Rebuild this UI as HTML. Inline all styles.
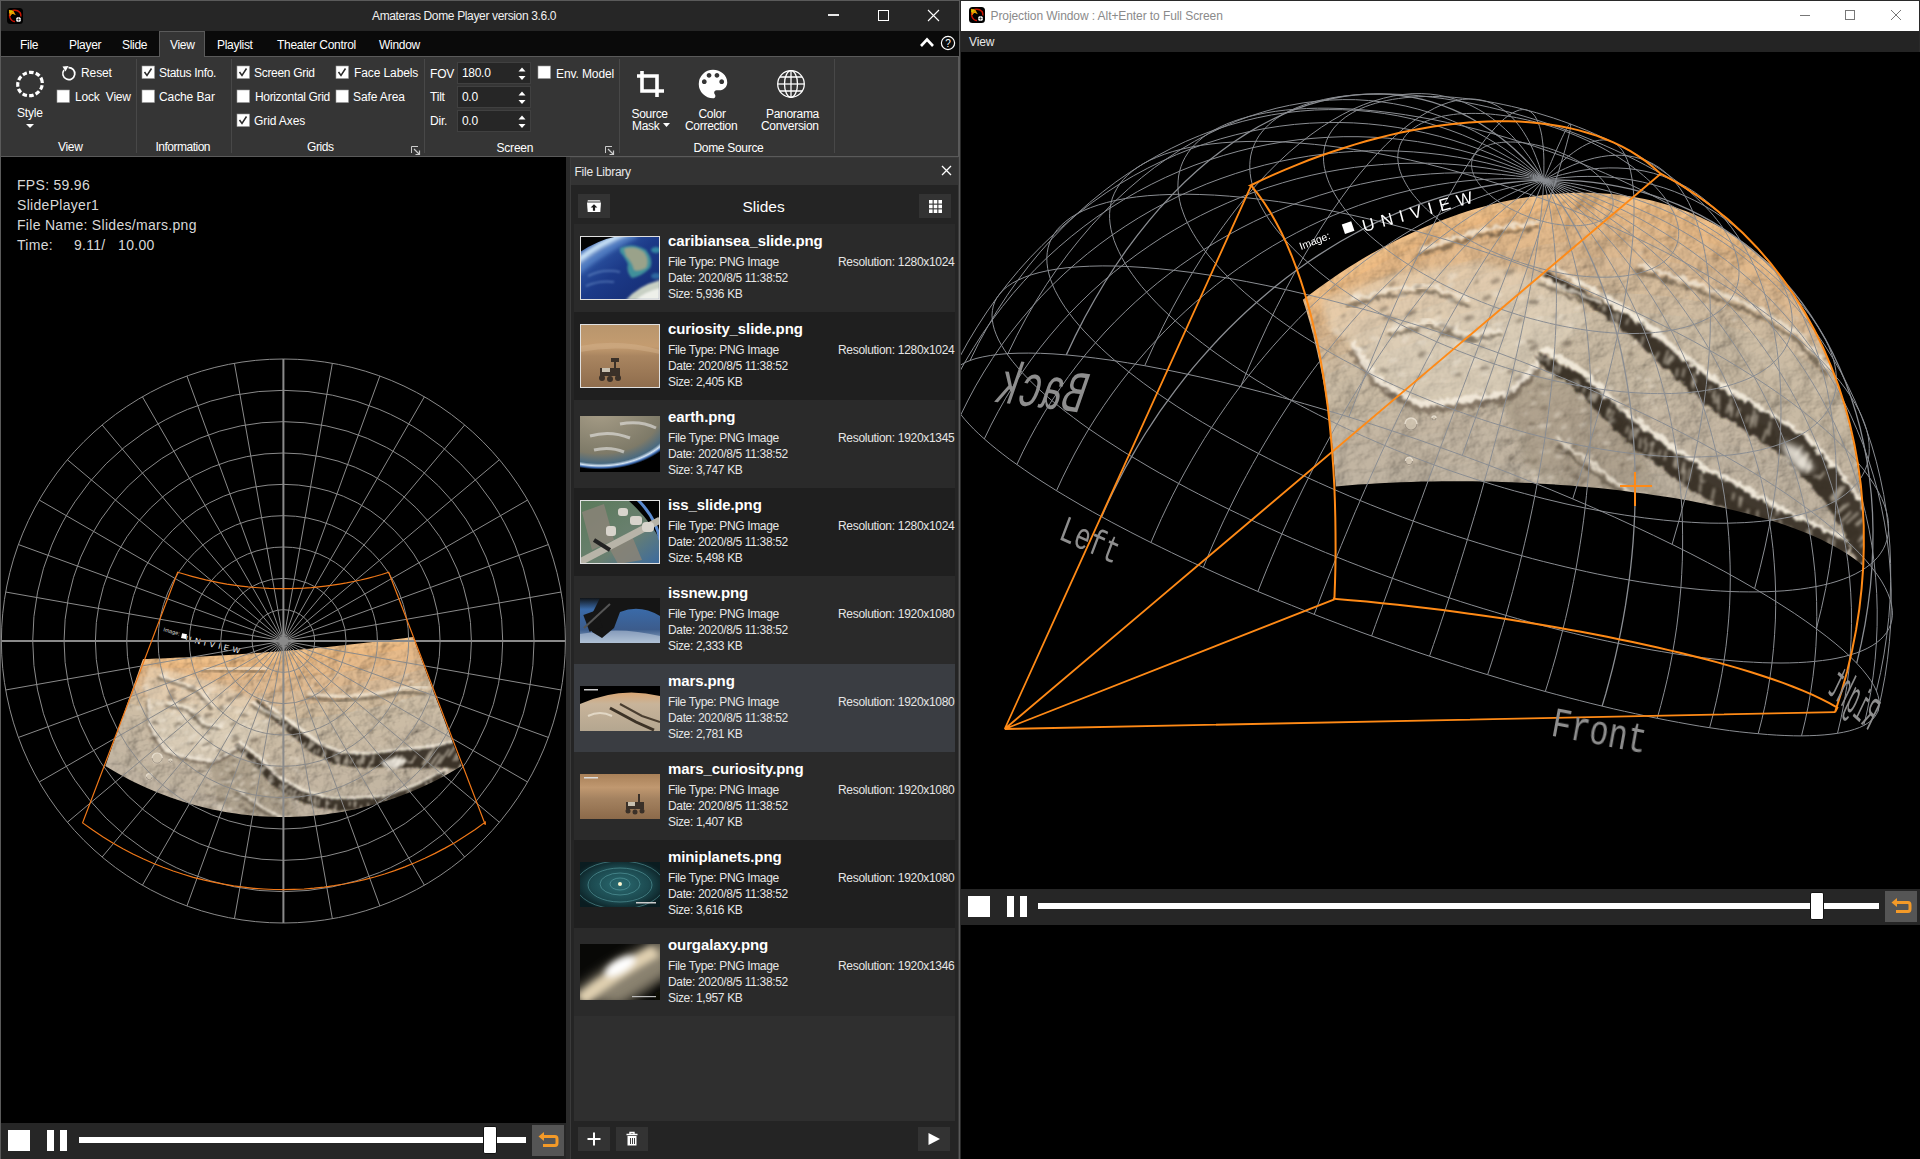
<!DOCTYPE html>
<html><head><meta charset="utf-8"><style>
html,body{margin:0;padding:0;width:1920px;height:1159px;overflow:hidden;background:#000;}
body{font-family:"Liberation Sans",sans-serif;color:#fff;position:relative;}
.a{position:absolute;}
.t{position:absolute;white-space:nowrap;line-height:1;}
svg{position:absolute;overflow:visible;}
</style></head><body>
<div class="a" style="left:0px;top:0px;width:960px;height:1159px;background:#5a5a5a;"></div>
<div class="a" style="left:1px;top:1px;width:958px;height:30px;background:#262626;"></div>
<div class="a" style="left:1px;top:31px;width:958px;height:25px;background:#0a0a0a;"></div>
<div class="a" style="left:1px;top:57px;width:957px;height:99px;background:#353535;"></div>
<div class="a" style="left:1px;top:157px;width:565px;height:966px;background:#000;"></div>
<div class="a" style="left:1px;top:1123px;width:565px;height:36px;background:#262626;"></div>
<div class="a" style="left:566px;top:157px;width:393px;height:1002px;background:#2b2b2b;"></div>
<svg style="left:7px;top:8px" width="16" height="16" viewBox="0 0 16 16">
<rect x="0" y="0" width="16" height="16" rx="3.5" fill="#000"/>
<path d="M5.5 2.6 Q10 1.6 13 4.5 Q14.2 6.5 13.8 8.5" stroke="#cc1400" stroke-width="1.5" fill="none"/>
<path d="M2.8 5.5 Q2 10 5 12.5 Q6.5 13.6 8 13.6" stroke="#c81000" stroke-width="1.5" fill="none"/>
<path d="M1.8 1.8 L6.5 3 L8.8 7.2 L5.5 5.8 L3 7.8 Z" fill="#e8a000"/><circle cx="4.3" cy="4.3" r="2" fill="#e0c000"/>
<path d="M3 8 Q3.5 5 6 4" stroke="#f08000" stroke-width="1.2" fill="none"/>
<circle cx="11.5" cy="11.5" r="2.5" fill="#f4f4f4"/><circle cx="11.5" cy="11.5" r="0.8" fill="#222"/>
<path d="M9.2 11.5 H13.8 M11.5 9.2 V13.8" stroke="#444" stroke-width="0.5"/></svg>
<div class="t" style="left:372px;top:9.8px;font-size:12px;color:#f0f0f0;font-weight:normal;letter-spacing:-0.35px;">Amateras Dome Player version 3.6.0</div>
<svg style="left:820px;top:0" width="139" height="31"><rect x="8" y="14" width="11" height="2" fill="#e8e8e8"/><rect x="58.5" y="10.5" width="10" height="10" fill="none" stroke="#fff" stroke-width="1"/><path d="M108 10 L119 21 M119 10 L108 21" stroke="#fff" stroke-width="1.1"/></svg>
<div class="a" style="left:159px;top:31px;width:46px;height:26px;background:#353535;border:1px solid #5a5a5a;border-bottom:none;box-sizing:border-box;"></div>
<div class="t" style="left:20px;top:38.8px;font-size:12px;color:#fff;font-weight:normal;letter-spacing:-0.3px;">File</div>
<div class="t" style="left:69px;top:38.8px;font-size:12px;color:#fff;font-weight:normal;letter-spacing:-0.3px;">Player</div>
<div class="t" style="left:122px;top:38.8px;font-size:12px;color:#fff;font-weight:normal;letter-spacing:-0.3px;">Slide</div>
<div class="t" style="left:170px;top:38.8px;font-size:12px;color:#fff;font-weight:normal;letter-spacing:-0.3px;">View</div>
<div class="t" style="left:217px;top:38.8px;font-size:12px;color:#fff;font-weight:normal;letter-spacing:-0.3px;">Playlist</div>
<div class="t" style="left:277px;top:38.8px;font-size:12px;color:#fff;font-weight:normal;letter-spacing:-0.3px;">Theater Control</div>
<div class="t" style="left:379px;top:38.8px;font-size:12px;color:#fff;font-weight:normal;letter-spacing:-0.3px;">Window</div>
<svg style="left:918px;top:34px" width="38" height="20"><path d="M3 12 L9 5.5 L15 12" stroke="#fff" stroke-width="2.6" fill="none" stroke-linejoin="miter"/><circle cx="30" cy="9" r="6.6" fill="none" stroke="#fff" stroke-width="1.2"/><text x="30" y="13" font-size="10" text-anchor="middle" fill="#fff" font-family="Liberation Sans">?</text></svg>
<div class="a" style="left:136px;top:59px;width:1px;height:94px;background:#484848;"></div>
<div class="a" style="left:231px;top:59px;width:1px;height:94px;background:#484848;"></div>
<div class="a" style="left:424px;top:59px;width:1px;height:94px;background:#484848;"></div>
<div class="a" style="left:619px;top:59px;width:1px;height:94px;background:#484848;"></div>
<div class="a" style="left:834px;top:59px;width:1px;height:94px;background:#484848;"></div>
<svg style="left:14px;top:68px" width="32" height="32"><ellipse cx="16" cy="16" rx="12.5" ry="11.5" transform="rotate(-25 16 16)" fill="none" stroke="#fff" stroke-width="3.2" stroke-dasharray="4.5 2.2"/></svg>
<div class="t" style="left:17px;top:106.8px;font-size:12px;color:#fff;font-weight:normal;letter-spacing:-0.2px;">Style</div>
<svg style="left:25px;top:123px" width="10" height="6"><path d="M1 1 L9 1 L5 5 Z" fill="#fff"/></svg>
<svg style="left:60px;top:65px" width="17" height="17"><path d="M4 5 A6 6 0 1 0 8.5 2.6" fill="none" stroke="#fff" stroke-width="1.7"/><path d="M2.5 1.5 L8.5 1 L5.5 6.5 Z" fill="#fff"/></svg>
<div class="t" style="left:81px;top:67.3px;font-size:12px;color:#fff;font-weight:normal;letter-spacing:-0.1px;">Reset</div>
<svg style="left:57px;top:90px" width="13" height="13"><rect x="0" y="0" width="12.5" height="12.5" fill="#fff" stroke="#999" stroke-width="0.6"/></svg>
<div class="t" style="left:75px;top:90.8px;font-size:12px;color:#fff;font-weight:normal;letter-spacing:-0.2px;">Lock&nbsp; View</div>
<div class="t" style="left:58px;top:140.8px;font-size:12px;color:#fff;font-weight:normal;letter-spacing:-0.3px;">View</div>
<svg style="left:142px;top:66px" width="13" height="13"><rect x="0" y="0" width="12.5" height="12.5" fill="#fff" stroke="#999" stroke-width="0.6"/><path d="M2.5 6 L5 9.5 L9.5 2.5" stroke="#2a2a2a" stroke-width="1.5" fill="none"/></svg>
<div class="t" style="left:159px;top:67.3px;font-size:12px;color:#fff;font-weight:normal;letter-spacing:-0.3px;">Status Info.</div>
<svg style="left:142px;top:90px" width="13" height="13"><rect x="0" y="0" width="12.5" height="12.5" fill="#fff" stroke="#999" stroke-width="0.6"/></svg>
<div class="t" style="left:159px;top:91.3px;font-size:12px;color:#fff;font-weight:normal;letter-spacing:-0.1px;">Cache Bar</div>
<div class="t" style="left:155.5px;top:140.8px;font-size:12px;color:#fff;font-weight:normal;letter-spacing:-0.5px;">Information</div>
<svg style="left:237px;top:66px" width="13" height="13"><rect x="0" y="0" width="12.5" height="12.5" fill="#fff" stroke="#999" stroke-width="0.6"/><path d="M2.5 6 L5 9.5 L9.5 2.5" stroke="#2a2a2a" stroke-width="1.5" fill="none"/></svg>
<div class="t" style="left:254px;top:67.3px;font-size:12px;color:#fff;font-weight:normal;letter-spacing:-0.3px;">Screen Grid</div>
<svg style="left:237px;top:90px" width="13" height="13"><rect x="0" y="0" width="12.5" height="12.5" fill="#fff" stroke="#999" stroke-width="0.6"/></svg>
<div class="t" style="left:255px;top:91.3px;font-size:12px;color:#fff;font-weight:normal;letter-spacing:-0.35px;">Horizontal Grid</div>
<svg style="left:237px;top:114px" width="13" height="13"><rect x="0" y="0" width="12.5" height="12.5" fill="#fff" stroke="#999" stroke-width="0.6"/><path d="M2.5 6 L5 9.5 L9.5 2.5" stroke="#2a2a2a" stroke-width="1.5" fill="none"/></svg>
<div class="t" style="left:254px;top:115.3px;font-size:12px;color:#fff;font-weight:normal;letter-spacing:-0.1px;">Grid Axes</div>
<svg style="left:336px;top:66px" width="13" height="13"><rect x="0" y="0" width="12.5" height="12.5" fill="#fff" stroke="#999" stroke-width="0.6"/><path d="M2.5 6 L5 9.5 L9.5 2.5" stroke="#2a2a2a" stroke-width="1.5" fill="none"/></svg>
<div class="t" style="left:354px;top:67.3px;font-size:12px;color:#fff;font-weight:normal;letter-spacing:-0.1px;">Face Labels</div>
<svg style="left:336px;top:90px" width="13" height="13"><rect x="0" y="0" width="12.5" height="12.5" fill="#fff" stroke="#999" stroke-width="0.6"/></svg>
<div class="t" style="left:353px;top:91.3px;font-size:12px;color:#fff;font-weight:normal;letter-spacing:-0.1px;">Safe Area</div>
<div class="t" style="left:307px;top:140.8px;font-size:12px;color:#fff;font-weight:normal;letter-spacing:-0.4px;">Grids</div>
<svg style="left:411px;top:146px" width="9" height="9"><path d="M0.5 7 V0.5 H7" stroke="#ccc" fill="none"/><path d="M3 3 L8.5 8.5 M8.5 4.5 V8.5 H4.5" stroke="#ccc" stroke-width="1.2" fill="none"/></svg>
<div class="t" style="left:430px;top:67.8px;font-size:12px;color:#fff;font-weight:normal;letter-spacing:-0.2px;">FOV</div>
<div class="t" style="left:430px;top:91.3px;font-size:12px;color:#fff;font-weight:normal;letter-spacing:-0.2px;">Tilt</div>
<div class="t" style="left:430px;top:115.3px;font-size:12px;color:#fff;font-weight:normal;letter-spacing:-0.2px;">Dir.</div>
<div class="a" style="left:457px;top:62px;width:74px;height:22px;background:#262626;border:1px solid #404040;box-sizing:border-box;"></div>
<div class="t" style="left:462px;top:67.3px;font-size:12px;color:#fff;font-weight:normal;letter-spacing:-0.3px;">180.0</div>
<svg style="left:517px;top:66px" width="10" height="16"><path d="M1.5 5.5 L5 1.5 L8.5 5.5 Z" fill="#fff"/><path d="M1.5 10 L5 14 L8.5 10 Z" fill="#fff"/></svg>
<div class="a" style="left:457px;top:86px;width:74px;height:22px;background:#262626;border:1px solid #404040;box-sizing:border-box;"></div>
<div class="t" style="left:462px;top:91.3px;font-size:12px;color:#fff;font-weight:normal;letter-spacing:-0.3px;">0.0</div>
<svg style="left:517px;top:90px" width="10" height="16"><path d="M1.5 5.5 L5 1.5 L8.5 5.5 Z" fill="#fff"/><path d="M1.5 10 L5 14 L8.5 10 Z" fill="#fff"/></svg>
<div class="a" style="left:457px;top:110px;width:74px;height:22px;background:#262626;border:1px solid #404040;box-sizing:border-box;"></div>
<div class="t" style="left:462px;top:115.3px;font-size:12px;color:#fff;font-weight:normal;letter-spacing:-0.3px;">0.0</div>
<svg style="left:517px;top:114px" width="10" height="16"><path d="M1.5 5.5 L5 1.5 L8.5 5.5 Z" fill="#fff"/><path d="M1.5 10 L5 14 L8.5 10 Z" fill="#fff"/></svg>
<svg style="left:538px;top:66px" width="13" height="13"><rect x="0" y="0" width="12.5" height="12.5" fill="#fff" stroke="#999" stroke-width="0.6"/></svg>
<div class="t" style="left:556px;top:67.8px;font-size:12px;color:#fff;font-weight:normal;letter-spacing:-0.1px;">Env. Model</div>
<div class="t" style="left:496.5px;top:141.8px;font-size:12px;color:#fff;font-weight:normal;letter-spacing:-0.2px;">Screen</div>
<svg style="left:605px;top:146px" width="9" height="9"><path d="M0.5 7 V0.5 H7" stroke="#ccc" fill="none"/><path d="M3 3 L8.5 8.5 M8.5 4.5 V8.5 H4.5" stroke="#ccc" stroke-width="1.2" fill="none"/></svg>
<svg style="left:636px;top:70px" width="29" height="29"><path d="M6 1 V21 H28 M1 6 H21 V27" stroke="#fff" stroke-width="3.6" fill="none"/></svg>
<div class="t" style="left:631.5px;top:107.8px;font-size:12px;color:#fff;font-weight:normal;letter-spacing:-0.3px;">Source</div>
<div class="t" style="left:632px;top:119.8px;font-size:12px;color:#fff;font-weight:normal;letter-spacing:-0.3px;">Mask</div>
<svg style="left:663px;top:123px" width="8" height="5"><path d="M0 0 L7 0 L3.5 4 Z" fill="#fff"/></svg>
<svg style="left:694px;top:65px" width="38" height="38" viewBox="0 0 24 24"><path fill="#fff" d="M12 3a9 9 0 0 0 0 18c.83 0 1.5-.67 1.5-1.5 0-.39-.15-.74-.39-1.01-.23-.26-.38-.61-.38-.99 0-.83.67-1.5 1.5-1.5H16c2.76 0 5-2.24 5-5 0-4.42-4.03-8-9-8zm-5.5 9c-.83 0-1.5-.67-1.5-1.5S5.67 9 6.5 9 8 9.67 8 10.5 7.33 12 6.5 12zm3-4C8.67 8 8 7.33 8 6.5S8.67 5 9.5 5s1.5.67 1.5 1.5S10.33 8 9.5 8zm5 0c-.83 0-1.5-.67-1.5-1.5S13.67 5 14.5 5s1.5.67 1.5 1.5S15.33 8 14.5 8zm3 4c-.83 0-1.5-.67-1.5-1.5S16.67 9 17.5 9s1.5.67 1.5 1.5-.67 1.5-1.5 1.5z"/></svg>
<div class="t" style="left:698.5px;top:107.8px;font-size:12px;color:#fff;font-weight:normal;letter-spacing:-0.3px;">Color</div>
<div class="t" style="left:685px;top:119.8px;font-size:12px;color:#fff;font-weight:normal;letter-spacing:-0.3px;">Correction</div>
<svg style="left:776px;top:69px" width="30" height="30"><g fill="none" stroke="#fff" stroke-width="1.3"><circle cx="15" cy="15" r="13.3"/><ellipse cx="15" cy="15" rx="6.5" ry="13.3"/><line x1="15" y1="1.7" x2="15" y2="28.3"/><line x1="1.7" y1="15" x2="28.3" y2="15"/><path d="M4 8 H26 M4 22 H26"/></g></svg>
<div class="t" style="left:766px;top:107.8px;font-size:12px;color:#fff;font-weight:normal;letter-spacing:-0.3px;">Panorama</div>
<div class="t" style="left:761px;top:119.8px;font-size:12px;color:#fff;font-weight:normal;letter-spacing:-0.3px;">Conversion</div>
<div class="t" style="left:693.4px;top:141.8px;font-size:12px;color:#fff;font-weight:normal;letter-spacing:-0.3px;">Dome Source</div>
<div class="t" style="left:17px;top:178.1px;font-size:14px;color:#d8d8d8;font-weight:normal;letter-spacing:0.3px;">FPS: 59.96</div>
<div class="t" style="left:17px;top:198.1px;font-size:14px;color:#d8d8d8;font-weight:normal;letter-spacing:0.3px;">SlidePlayer1</div>
<div class="t" style="left:17px;top:218.1px;font-size:14px;color:#d8d8d8;font-weight:normal;letter-spacing:0.3px;">File Name: Slides/mars.png</div>
<div class="t" style="left:17px;top:238.1px;font-size:14px;color:#d8d8d8;font-weight:normal;letter-spacing:0.3px;">Time:&nbsp;&nbsp;&nbsp;&nbsp; 9.11/&nbsp;&nbsp; 10.00</div>
<svg style="left:0;top:0" width="566" height="1123" viewBox="0 0 566 1123">
<defs>
<clipPath id="lclip"><rect x="1" y="157" width="565" height="966"/></clipPath>
<clipPath id="mclip"><path d="M143.0,659.0 L147.5,658.9 L152.0,658.7 L156.5,658.5 L161.0,658.4 L165.5,658.2 L170.0,658.0 L174.5,657.8 L179.0,657.6 L183.5,657.4 L188.0,657.2 L192.5,657.0 L197.0,656.8 L201.5,656.5 L206.0,656.3 L210.5,656.1 L215.0,655.8 L219.5,655.5 L224.0,655.3 L228.5,655.0 L233.0,654.7 L237.5,654.4 L242.0,654.1 L246.5,653.8 L251.0,653.5 L255.5,653.1 L260.0,652.8 L264.5,652.5 L269.0,652.1 L273.5,651.8 L278.0,651.4 L282.5,651.0 L287.0,650.7 L291.5,650.3 L296.0,649.9 L300.5,649.5 L305.0,649.1 L309.5,648.7 L314.0,648.2 L318.5,647.8 L323.0,647.4 L327.5,646.9 L332.0,646.5 L336.5,646.0 L341.0,645.5 L345.5,645.1 L350.0,644.6 L354.5,644.1 L359.0,643.6 L363.5,643.1 L368.0,642.6 L372.5,642.0 L377.0,641.5 L381.5,641.0 L386.0,640.4 L390.5,639.9 L395.0,639.3 L399.5,638.8 L404.0,638.2 L408.5,637.6 L413.0,637.0 L413.0,637.0 L414.6,641.3 L416.2,645.6 L417.9,649.9 L419.5,654.2 L421.1,658.5 L422.7,662.8 L424.3,667.1 L425.9,671.4 L427.5,675.7 L429.2,680.0 L430.8,684.3 L432.4,688.6 L434.0,692.9 L435.6,697.2 L437.2,701.5 L438.9,705.8 L440.5,710.1 L442.1,714.4 L443.7,718.6 L445.3,722.9 L446.9,727.2 L448.6,731.5 L450.2,735.8 L451.8,740.1 L453.4,744.4 L455.0,748.7 L456.7,753.0 L458.3,757.3 L459.9,761.6 L461.5,765.9 L461.5,765.9 L455.6,769.5 L449.6,773.0 L443.7,776.3 L437.8,779.4 L431.8,782.4 L425.9,785.3 L419.9,788.0 L414.0,790.6 L408.1,793.0 L402.1,795.3 L396.2,797.5 L390.3,799.6 L384.3,801.5 L378.4,803.3 L372.4,805.0 L366.5,806.6 L360.6,808.0 L354.6,809.4 L348.7,810.6 L342.8,811.7 L336.8,812.7 L330.9,813.6 L325.0,814.4 L319.0,815.1 L313.1,815.7 L307.1,816.2 L301.2,816.5 L295.3,816.8 L289.3,816.9 L283.4,817.0 L277.5,816.9 L271.5,816.8 L265.6,816.5 L259.7,816.2 L253.7,815.7 L247.8,815.1 L241.8,814.4 L235.9,813.6 L230.0,812.7 L224.0,811.7 L218.1,810.6 L212.2,809.4 L206.2,808.0 L200.3,806.6 L194.3,805.0 L188.4,803.3 L182.5,801.5 L176.5,799.6 L170.6,797.5 L164.7,795.3 L158.7,793.0 L152.8,790.6 L146.9,788.0 L140.9,785.3 L135.0,782.4 L129.0,779.4 L123.1,776.3 L117.2,773.0 L111.2,769.5 L105.3,765.9 L105.3,765.9 L106.6,762.4 L107.8,758.8 L109.1,755.2 L110.3,751.7 L111.6,748.1 L112.8,744.5 L114.1,741.0 L115.4,737.4 L116.6,733.8 L117.9,730.3 L119.1,726.7 L120.4,723.1 L121.6,719.6 L122.9,716.0 L124.2,712.5 L125.4,708.9 L126.7,705.3 L127.9,701.8 L129.2,698.2 L130.4,694.6 L131.7,691.1 L132.9,687.5 L134.2,683.9 L135.5,680.4 L136.7,676.8 L138.0,673.3 L139.2,669.7 L140.5,666.1 L141.7,662.6 L143.0,659.0Z"/></clipPath>
<filter id="lblur1"><feGaussianBlur stdDeviation="0.9"/></filter>
<filter id="lblur2"><feGaussianBlur stdDeviation="1.6"/></filter>
<filter id="lblur5"><feGaussianBlur stdDeviation="3.5"/></filter>
<filter id="lrelief" x="0%" y="0%" width="100%" height="100%">
<feTurbulence type="fractalNoise" baseFrequency="0.045 0.07" numOctaves="4" seed="4" result="t"/>
<feDiffuseLighting in="t" surfaceScale="5" diffuseConstant="1.15" lighting-color="#ffffff"><feDistantLight azimuth="200" elevation="48"/></feDiffuseLighting>
</filter>
<filter id="lrough" x="-10%" y="-10%" width="120%" height="120%">
<feTurbulence type="fractalNoise" baseFrequency="0.3" numOctaves="2" seed="9" result="n"/>
<feDisplacementMap in="SourceGraphic" in2="n" scale="3" xChannelSelector="R" yChannelSelector="G" result="d"/>
<feGaussianBlur in="d" stdDeviation="0.9"/>
</filter>
</defs>
<g clip-path="url(#lclip)">
<g clip-path="url(#mclip)">
<path d="M143.0,659.0 L156.5,658.5 L153.7,668.4 L139.9,667.9Z" fill="#ecba83" stroke="#ecba83" stroke-width="1.5"/><path d="M139.9,667.9 L153.7,668.4 L150.9,678.2 L136.7,676.8Z" fill="#e6ba8a" stroke="#e6ba8a" stroke-width="1.5"/><path d="M136.7,676.8 L150.9,678.2 L148.2,688.0 L133.6,685.7Z" fill="#dfba91" stroke="#dfba91" stroke-width="1.5"/><path d="M133.6,685.7 L148.2,688.0 L145.4,697.8 L130.4,694.6Z" fill="#d9bb98" stroke="#d9bb98" stroke-width="1.5"/><path d="M130.4,694.6 L145.4,697.8 L142.6,707.6 L127.3,703.5Z" fill="#d3bd9f" stroke="#d3bd9f" stroke-width="1.5"/><path d="M127.3,703.5 L142.6,707.6 L139.8,717.4 L124.2,712.5Z" fill="#cdbda5" stroke="#cdbda5" stroke-width="1.5"/><path d="M124.2,712.5 L139.8,717.4 L137.0,727.2 L121.0,721.4Z" fill="#cbbca5" stroke="#cbbca5" stroke-width="1.5"/><path d="M121.0,721.4 L137.0,727.2 L134.2,737.0 L117.9,730.3Z" fill="#c9baa4" stroke="#c9baa4" stroke-width="1.5"/><path d="M117.9,730.3 L134.2,737.0 L131.5,746.9 L114.7,739.2Z" fill="#c7b9a4" stroke="#c7b9a4" stroke-width="1.5"/><path d="M114.7,739.2 L131.5,746.9 L128.7,756.7 L111.6,748.1Z" fill="#c5b7a3" stroke="#c5b7a3" stroke-width="1.5"/><path d="M111.6,748.1 L128.7,756.7 L125.9,766.5 L108.4,757.0Z" fill="#c3b6a2" stroke="#c3b6a2" stroke-width="1.5"/><path d="M108.4,757.0 L125.9,766.5 L123.1,776.3 L105.3,765.9Z" fill="#c1b4a2" stroke="#c1b4a2" stroke-width="1.5"/><path d="M156.5,658.5 L170.0,658.0 L167.6,668.6 L153.7,668.4Z" fill="#ecba83" stroke="#ecba83" stroke-width="1.5"/><path d="M153.7,668.4 L167.6,668.6 L165.2,679.2 L150.9,678.2Z" fill="#e6ba8a" stroke="#e6ba8a" stroke-width="1.5"/><path d="M150.9,678.2 L165.2,679.2 L162.7,689.8 L148.2,688.0Z" fill="#dfba91" stroke="#dfba91" stroke-width="1.5"/><path d="M148.2,688.0 L162.7,689.8 L160.3,700.4 L145.4,697.8Z" fill="#d9bb98" stroke="#d9bb98" stroke-width="1.5"/><path d="M145.4,697.8 L160.3,700.4 L157.9,711.1 L142.6,707.6Z" fill="#d3bd9f" stroke="#d3bd9f" stroke-width="1.5"/><path d="M142.6,707.6 L157.9,711.1 L155.5,721.7 L139.8,717.4Z" fill="#cdbda5" stroke="#cdbda5" stroke-width="1.5"/><path d="M139.8,717.4 L155.5,721.7 L153.0,732.3 L137.0,727.2Z" fill="#cbbca5" stroke="#cbbca5" stroke-width="1.5"/><path d="M137.0,727.2 L153.0,732.3 L150.6,742.9 L134.2,737.0Z" fill="#c9baa4" stroke="#c9baa4" stroke-width="1.5"/><path d="M134.2,737.0 L150.6,742.9 L148.2,753.5 L131.5,746.9Z" fill="#c7b9a4" stroke="#c7b9a4" stroke-width="1.5"/><path d="M131.5,746.9 L148.2,753.5 L145.8,764.1 L128.7,756.7Z" fill="#c5b7a3" stroke="#c5b7a3" stroke-width="1.5"/><path d="M128.7,756.7 L145.8,764.1 L143.3,774.7 L125.9,766.5Z" fill="#c3b6a2" stroke="#c3b6a2" stroke-width="1.5"/><path d="M125.9,766.5 L143.3,774.7 L140.9,785.3 L123.1,776.3Z" fill="#c1b4a2" stroke="#c1b4a2" stroke-width="1.5"/><path d="M170.0,658.0 L183.5,657.4 L181.4,668.7 L167.6,668.6Z" fill="#ecba83" stroke="#ecba83" stroke-width="1.5"/><path d="M167.6,668.6 L181.4,668.7 L179.4,680.0 L165.2,679.2Z" fill="#e6ba8a" stroke="#e6ba8a" stroke-width="1.5"/><path d="M165.2,679.2 L179.4,680.0 L177.3,691.3 L162.7,689.8Z" fill="#dfba91" stroke="#dfba91" stroke-width="1.5"/><path d="M162.7,689.8 L177.3,691.3 L175.2,702.6 L160.3,700.4Z" fill="#d9bb98" stroke="#d9bb98" stroke-width="1.5"/><path d="M160.3,700.4 L175.2,702.6 L173.2,713.9 L157.9,711.1Z" fill="#d3bd9f" stroke="#d3bd9f" stroke-width="1.5"/><path d="M157.9,711.1 L173.2,713.9 L171.1,725.2 L155.5,721.7Z" fill="#cdbda5" stroke="#cdbda5" stroke-width="1.5"/><path d="M155.5,721.7 L171.1,725.2 L169.1,736.5 L153.0,732.3Z" fill="#cbbca5" stroke="#cbbca5" stroke-width="1.5"/><path d="M153.0,732.3 L169.1,736.5 L167.0,747.8 L150.6,742.9Z" fill="#c9baa4" stroke="#c9baa4" stroke-width="1.5"/><path d="M150.6,742.9 L167.0,747.8 L164.9,759.1 L148.2,753.5Z" fill="#c7b9a4" stroke="#c7b9a4" stroke-width="1.5"/><path d="M148.2,753.5 L164.9,759.1 L162.9,770.4 L145.8,764.1Z" fill="#c5b7a3" stroke="#c5b7a3" stroke-width="1.5"/><path d="M145.8,764.1 L162.9,770.4 L160.8,781.7 L143.3,774.7Z" fill="#c3b6a2" stroke="#c3b6a2" stroke-width="1.5"/><path d="M143.3,774.7 L160.8,781.7 L158.7,793.0 L140.9,785.3Z" fill="#c1b4a2" stroke="#c1b4a2" stroke-width="1.5"/><path d="M183.5,657.4 L197.0,656.8 L195.3,668.7 L181.4,668.7Z" fill="#ecba83" stroke="#ecba83" stroke-width="1.5"/><path d="M181.4,668.7 L195.3,668.7 L193.6,680.6 L179.4,680.0Z" fill="#e6ba8a" stroke="#e6ba8a" stroke-width="1.5"/><path d="M179.4,680.0 L193.6,680.6 L191.9,692.5 L177.3,691.3Z" fill="#dfba91" stroke="#dfba91" stroke-width="1.5"/><path d="M177.3,691.3 L191.9,692.5 L190.2,704.4 L175.2,702.6Z" fill="#d9bb98" stroke="#d9bb98" stroke-width="1.5"/><path d="M175.2,702.6 L190.2,704.4 L188.5,716.3 L173.2,713.9Z" fill="#d3bd9f" stroke="#d3bd9f" stroke-width="1.5"/><path d="M173.2,713.9 L188.5,716.3 L186.8,728.2 L171.1,725.2Z" fill="#cdbda5" stroke="#cdbda5" stroke-width="1.5"/><path d="M171.1,725.2 L186.8,728.2 L185.1,740.1 L169.1,736.5Z" fill="#cbbca5" stroke="#cbbca5" stroke-width="1.5"/><path d="M169.1,736.5 L185.1,740.1 L183.4,752.0 L167.0,747.8Z" fill="#c9baa4" stroke="#c9baa4" stroke-width="1.5"/><path d="M167.0,747.8 L183.4,752.0 L181.7,763.9 L164.9,759.1Z" fill="#c7b9a4" stroke="#c7b9a4" stroke-width="1.5"/><path d="M164.9,759.1 L181.7,763.9 L179.9,775.8 L162.9,770.4Z" fill="#c5b7a3" stroke="#c5b7a3" stroke-width="1.5"/><path d="M162.9,770.4 L179.9,775.8 L178.2,787.7 L160.8,781.7Z" fill="#c3b6a2" stroke="#c3b6a2" stroke-width="1.5"/><path d="M160.8,781.7 L178.2,787.7 L176.5,799.6 L158.7,793.0Z" fill="#c1b4a2" stroke="#c1b4a2" stroke-width="1.5"/><path d="M197.0,656.8 L210.5,656.1 L209.2,668.5 L195.3,668.7Z" fill="#ecba83" stroke="#ecba83" stroke-width="1.5"/><path d="M195.3,668.7 L209.2,668.5 L207.8,680.9 L193.6,680.6Z" fill="#e6ba8a" stroke="#e6ba8a" stroke-width="1.5"/><path d="M193.6,680.6 L207.8,680.9 L206.5,693.3 L191.9,692.5Z" fill="#dfba91" stroke="#dfba91" stroke-width="1.5"/><path d="M191.9,692.5 L206.5,693.3 L205.1,705.7 L190.2,704.4Z" fill="#d9bb98" stroke="#d9bb98" stroke-width="1.5"/><path d="M190.2,704.4 L205.1,705.7 L203.8,718.1 L188.5,716.3Z" fill="#d3bd9f" stroke="#d3bd9f" stroke-width="1.5"/><path d="M188.5,716.3 L203.8,718.1 L202.4,730.5 L186.8,728.2Z" fill="#cdbda5" stroke="#cdbda5" stroke-width="1.5"/><path d="M186.8,728.2 L202.4,730.5 L201.1,742.9 L185.1,740.1Z" fill="#cbbca5" stroke="#cbbca5" stroke-width="1.5"/><path d="M185.1,740.1 L201.1,742.9 L199.7,755.3 L183.4,752.0Z" fill="#c9baa4" stroke="#c9baa4" stroke-width="1.5"/><path d="M183.4,752.0 L199.7,755.3 L198.4,767.8 L181.7,763.9Z" fill="#c7b9a4" stroke="#c7b9a4" stroke-width="1.5"/><path d="M181.7,763.9 L198.4,767.8 L197.0,780.2 L179.9,775.8Z" fill="#c5b7a3" stroke="#c5b7a3" stroke-width="1.5"/><path d="M179.9,775.8 L197.0,780.2 L195.7,792.6 L178.2,787.7Z" fill="#c3b6a2" stroke="#c3b6a2" stroke-width="1.5"/><path d="M178.2,787.7 L195.7,792.6 L194.3,805.0 L176.5,799.6Z" fill="#c1b4a2" stroke="#c1b4a2" stroke-width="1.5"/><path d="M210.5,656.1 L224.0,655.3 L223.0,668.1 L209.2,668.5Z" fill="#ecba83" stroke="#ecba83" stroke-width="1.5"/><path d="M209.2,668.5 L223.0,668.1 L222.0,680.9 L207.8,680.9Z" fill="#e6ba8a" stroke="#e6ba8a" stroke-width="1.5"/><path d="M207.8,680.9 L222.0,680.9 L221.0,693.8 L206.5,693.3Z" fill="#dfba91" stroke="#dfba91" stroke-width="1.5"/><path d="M206.5,693.3 L221.0,693.8 L220.1,706.6 L205.1,705.7Z" fill="#d9bb98" stroke="#d9bb98" stroke-width="1.5"/><path d="M205.1,705.7 L220.1,706.6 L219.1,719.5 L203.8,718.1Z" fill="#d3bd9f" stroke="#d3bd9f" stroke-width="1.5"/><path d="M203.8,718.1 L219.1,719.5 L218.1,732.3 L202.4,730.5Z" fill="#cdbda5" stroke="#cdbda5" stroke-width="1.5"/><path d="M202.4,730.5 L218.1,732.3 L217.1,745.2 L201.1,742.9Z" fill="#cbbca5" stroke="#cbbca5" stroke-width="1.5"/><path d="M201.1,742.9 L217.1,745.2 L216.1,758.0 L199.7,755.3Z" fill="#c9baa4" stroke="#c9baa4" stroke-width="1.5"/><path d="M199.7,755.3 L216.1,758.0 L215.1,770.8 L198.4,767.8Z" fill="#c7b9a4" stroke="#c7b9a4" stroke-width="1.5"/><path d="M198.4,767.8 L215.1,770.8 L214.1,783.7 L197.0,780.2Z" fill="#c5b7a3" stroke="#c5b7a3" stroke-width="1.5"/><path d="M197.0,780.2 L214.1,783.7 L213.1,796.5 L195.7,792.6Z" fill="#c3b6a2" stroke="#c3b6a2" stroke-width="1.5"/><path d="M195.7,792.6 L213.1,796.5 L212.2,809.4 L194.3,805.0Z" fill="#c1b4a2" stroke="#c1b4a2" stroke-width="1.5"/><path d="M224.0,655.3 L237.5,654.4 L236.9,667.6 L223.0,668.1Z" fill="#ecba83" stroke="#ecba83" stroke-width="1.5"/><path d="M223.0,668.1 L236.9,667.6 L236.2,680.8 L222.0,680.9Z" fill="#e6ba8a" stroke="#e6ba8a" stroke-width="1.5"/><path d="M222.0,680.9 L236.2,680.8 L235.6,694.0 L221.0,693.8Z" fill="#dfba91" stroke="#dfba91" stroke-width="1.5"/><path d="M221.0,693.8 L235.6,694.0 L235.0,707.2 L220.1,706.6Z" fill="#d9bb98" stroke="#d9bb98" stroke-width="1.5"/><path d="M220.1,706.6 L235.0,707.2 L234.4,720.4 L219.1,719.5Z" fill="#d3bd9f" stroke="#d3bd9f" stroke-width="1.5"/><path d="M219.1,719.5 L234.4,720.4 L233.7,733.6 L218.1,732.3Z" fill="#cdbda5" stroke="#cdbda5" stroke-width="1.5"/><path d="M218.1,732.3 L233.7,733.6 L233.1,746.8 L217.1,745.2Z" fill="#cbbca5" stroke="#cbbca5" stroke-width="1.5"/><path d="M217.1,745.2 L233.1,746.8 L232.5,760.0 L216.1,758.0Z" fill="#c9baa4" stroke="#c9baa4" stroke-width="1.5"/><path d="M216.1,758.0 L232.5,760.0 L231.9,773.1 L215.1,770.8Z" fill="#c7b9a4" stroke="#c7b9a4" stroke-width="1.5"/><path d="M215.1,770.8 L231.9,773.1 L231.2,786.3 L214.1,783.7Z" fill="#c5b7a3" stroke="#c5b7a3" stroke-width="1.5"/><path d="M214.1,783.7 L231.2,786.3 L230.6,799.5 L213.1,796.5Z" fill="#c3b6a2" stroke="#c3b6a2" stroke-width="1.5"/><path d="M213.1,796.5 L230.6,799.5 L230.0,812.7 L212.2,809.4Z" fill="#c1b4a2" stroke="#c1b4a2" stroke-width="1.5"/><path d="M237.5,654.4 L251.0,653.5 L250.7,666.9 L236.9,667.6Z" fill="#ecba83" stroke="#ecba83" stroke-width="1.5"/><path d="M236.9,667.6 L250.7,666.9 L250.5,680.4 L236.2,680.8Z" fill="#e6ba8a" stroke="#e6ba8a" stroke-width="1.5"/><path d="M236.2,680.8 L250.5,680.4 L250.2,693.9 L235.6,694.0Z" fill="#dfba91" stroke="#dfba91" stroke-width="1.5"/><path d="M235.6,694.0 L250.2,693.9 L249.9,707.4 L235.0,707.2Z" fill="#d9bb98" stroke="#d9bb98" stroke-width="1.5"/><path d="M235.0,707.2 L249.9,707.4 L249.7,720.8 L234.4,720.4Z" fill="#d3bd9f" stroke="#d3bd9f" stroke-width="1.5"/><path d="M234.4,720.4 L249.7,720.8 L249.4,734.3 L233.7,733.6Z" fill="#cdbda5" stroke="#cdbda5" stroke-width="1.5"/><path d="M233.7,733.6 L249.4,734.3 L249.1,747.8 L233.1,746.8Z" fill="#cbbca5" stroke="#cbbca5" stroke-width="1.5"/><path d="M233.1,746.8 L249.1,747.8 L248.9,761.2 L232.5,760.0Z" fill="#c9baa4" stroke="#c9baa4" stroke-width="1.5"/><path d="M232.5,760.0 L248.9,761.2 L248.6,774.7 L231.9,773.1Z" fill="#c7b9a4" stroke="#c7b9a4" stroke-width="1.5"/><path d="M231.9,773.1 L248.6,774.7 L248.3,788.2 L231.2,786.3Z" fill="#c5b7a3" stroke="#c5b7a3" stroke-width="1.5"/><path d="M231.2,786.3 L248.3,788.2 L248.0,801.6 L230.6,799.5Z" fill="#c3b6a2" stroke="#c3b6a2" stroke-width="1.5"/><path d="M230.6,799.5 L248.0,801.6 L247.8,815.1 L230.0,812.7Z" fill="#c1b4a2" stroke="#c1b4a2" stroke-width="1.5"/><path d="M251.0,653.5 L264.5,652.5 L264.6,666.1 L250.7,666.9Z" fill="#ecba83" stroke="#ecba83" stroke-width="1.5"/><path d="M250.7,666.9 L264.6,666.1 L264.7,679.8 L250.5,680.4Z" fill="#e6ba8a" stroke="#e6ba8a" stroke-width="1.5"/><path d="M250.5,680.4 L264.7,679.8 L264.8,693.5 L250.2,693.9Z" fill="#dfba91" stroke="#dfba91" stroke-width="1.5"/><path d="M250.2,693.9 L264.8,693.5 L264.9,707.2 L249.9,707.4Z" fill="#d9bb98" stroke="#d9bb98" stroke-width="1.5"/><path d="M249.9,707.4 L264.9,707.2 L265.0,720.8 L249.7,720.8Z" fill="#d3bd9f" stroke="#d3bd9f" stroke-width="1.5"/><path d="M249.7,720.8 L265.0,720.8 L265.0,734.5 L249.4,734.3Z" fill="#cdbda5" stroke="#cdbda5" stroke-width="1.5"/><path d="M249.4,734.3 L265.0,734.5 L265.1,748.2 L249.1,747.8Z" fill="#cbbca5" stroke="#cbbca5" stroke-width="1.5"/><path d="M249.1,747.8 L265.1,748.2 L265.2,761.8 L248.9,761.2Z" fill="#c9baa4" stroke="#c9baa4" stroke-width="1.5"/><path d="M248.9,761.2 L265.2,761.8 L265.3,775.5 L248.6,774.7Z" fill="#c7b9a4" stroke="#c7b9a4" stroke-width="1.5"/><path d="M248.6,774.7 L265.3,775.5 L265.4,789.2 L248.3,788.2Z" fill="#c5b7a3" stroke="#c5b7a3" stroke-width="1.5"/><path d="M248.3,788.2 L265.4,789.2 L265.5,802.9 L248.0,801.6Z" fill="#c3b6a2" stroke="#c3b6a2" stroke-width="1.5"/><path d="M248.0,801.6 L265.5,802.9 L265.6,816.5 L247.8,815.1Z" fill="#c1b4a2" stroke="#c1b4a2" stroke-width="1.5"/><path d="M264.5,652.5 L278.0,651.4 L278.4,665.2 L264.6,666.1Z" fill="#ecba83" stroke="#ecba83" stroke-width="1.5"/><path d="M264.6,666.1 L278.4,665.2 L278.9,679.0 L264.7,679.8Z" fill="#e6ba8a" stroke="#e6ba8a" stroke-width="1.5"/><path d="M264.7,679.8 L278.9,679.0 L279.4,692.8 L264.8,693.5Z" fill="#dfba91" stroke="#dfba91" stroke-width="1.5"/><path d="M264.8,693.5 L279.4,692.8 L279.8,706.6 L264.9,707.2Z" fill="#d9bb98" stroke="#d9bb98" stroke-width="1.5"/><path d="M264.9,707.2 L279.8,706.6 L280.2,720.4 L265.0,720.8Z" fill="#d3bd9f" stroke="#d3bd9f" stroke-width="1.5"/><path d="M265.0,720.8 L280.2,720.4 L280.7,734.2 L265.0,734.5Z" fill="#cdbda5" stroke="#cdbda5" stroke-width="1.5"/><path d="M265.0,734.5 L280.7,734.2 L281.1,748.0 L265.1,748.2Z" fill="#cbbca5" stroke="#cbbca5" stroke-width="1.5"/><path d="M265.1,748.2 L281.1,748.0 L281.6,761.8 L265.2,761.8Z" fill="#c9baa4" stroke="#c9baa4" stroke-width="1.5"/><path d="M265.2,761.8 L281.6,761.8 L282.0,775.6 L265.3,775.5Z" fill="#c7b9a4" stroke="#c7b9a4" stroke-width="1.5"/><path d="M265.3,775.5 L282.0,775.6 L282.5,789.4 L265.4,789.2Z" fill="#c5b7a3" stroke="#c5b7a3" stroke-width="1.5"/><path d="M265.4,789.2 L282.5,789.4 L282.9,803.2 L265.5,802.9Z" fill="#c3b6a2" stroke="#c3b6a2" stroke-width="1.5"/><path d="M265.5,802.9 L282.9,803.2 L283.4,817.0 L265.6,816.5Z" fill="#c1b4a2" stroke="#c1b4a2" stroke-width="1.5"/><path d="M278.0,651.4 L291.5,650.3 L292.3,664.1 L278.4,665.2Z" fill="#ecba83" stroke="#ecba83" stroke-width="1.5"/><path d="M278.4,665.2 L292.3,664.1 L293.1,678.0 L278.9,679.0Z" fill="#e6ba8a" stroke="#e6ba8a" stroke-width="1.5"/><path d="M278.9,679.0 L293.1,678.0 L293.9,691.8 L279.4,692.8Z" fill="#dfba91" stroke="#dfba91" stroke-width="1.5"/><path d="M279.4,692.8 L293.9,691.8 L294.7,705.7 L279.8,706.6Z" fill="#d9bb98" stroke="#d9bb98" stroke-width="1.5"/><path d="M279.8,706.6 L294.7,705.7 L295.5,719.5 L280.2,720.4Z" fill="#d3bd9f" stroke="#d3bd9f" stroke-width="1.5"/><path d="M280.2,720.4 L295.5,719.5 L296.4,733.4 L280.7,734.2Z" fill="#cdbda5" stroke="#cdbda5" stroke-width="1.5"/><path d="M280.7,734.2 L296.4,733.4 L297.2,747.3 L281.1,748.0Z" fill="#cbbca5" stroke="#cbbca5" stroke-width="1.5"/><path d="M281.1,748.0 L297.2,747.3 L298.0,761.1 L281.6,761.8Z" fill="#c9baa4" stroke="#c9baa4" stroke-width="1.5"/><path d="M281.6,761.8 L298.0,761.1 L298.8,775.0 L282.0,775.6Z" fill="#c7b9a4" stroke="#c7b9a4" stroke-width="1.5"/><path d="M282.0,775.6 L298.8,775.0 L299.6,788.8 L282.5,789.4Z" fill="#c5b7a3" stroke="#c5b7a3" stroke-width="1.5"/><path d="M282.5,789.4 L299.6,788.8 L300.4,802.7 L282.9,803.2Z" fill="#c3b6a2" stroke="#c3b6a2" stroke-width="1.5"/><path d="M282.9,803.2 L300.4,802.7 L301.2,816.5 L283.4,817.0Z" fill="#c1b4a2" stroke="#c1b4a2" stroke-width="1.5"/><path d="M291.5,650.3 L305.0,649.1 L306.2,662.9 L292.3,664.1Z" fill="#ecba83" stroke="#ecba83" stroke-width="1.5"/><path d="M292.3,664.1 L306.2,662.9 L307.3,676.7 L293.1,678.0Z" fill="#e6ba8a" stroke="#e6ba8a" stroke-width="1.5"/><path d="M293.1,678.0 L307.3,676.7 L308.5,690.6 L293.9,691.8Z" fill="#dfba91" stroke="#dfba91" stroke-width="1.5"/><path d="M293.9,691.8 L308.5,690.6 L309.7,704.4 L294.7,705.7Z" fill="#d9bb98" stroke="#d9bb98" stroke-width="1.5"/><path d="M294.7,705.7 L309.7,704.4 L310.8,718.3 L295.5,719.5Z" fill="#d3bd9f" stroke="#d3bd9f" stroke-width="1.5"/><path d="M295.5,719.5 L310.8,718.3 L312.0,732.1 L296.4,733.4Z" fill="#cdbda5" stroke="#cdbda5" stroke-width="1.5"/><path d="M296.4,733.4 L312.0,732.1 L313.2,745.9 L297.2,747.3Z" fill="#cbbca5" stroke="#cbbca5" stroke-width="1.5"/><path d="M297.2,747.3 L313.2,745.9 L314.3,759.8 L298.0,761.1Z" fill="#c9baa4" stroke="#c9baa4" stroke-width="1.5"/><path d="M298.0,761.1 L314.3,759.8 L315.5,773.6 L298.8,775.0Z" fill="#c7b9a4" stroke="#c7b9a4" stroke-width="1.5"/><path d="M298.8,775.0 L315.5,773.6 L316.7,787.4 L299.6,788.8Z" fill="#c5b7a3" stroke="#c5b7a3" stroke-width="1.5"/><path d="M299.6,788.8 L316.7,787.4 L317.9,801.3 L300.4,802.7Z" fill="#c3b6a2" stroke="#c3b6a2" stroke-width="1.5"/><path d="M300.4,802.7 L317.9,801.3 L319.0,815.1 L301.2,816.5Z" fill="#c1b4a2" stroke="#c1b4a2" stroke-width="1.5"/><path d="M305.0,649.1 L318.5,647.8 L320.0,661.6 L306.2,662.9Z" fill="#ecba83" stroke="#ecba83" stroke-width="1.5"/><path d="M306.2,662.9 L320.0,661.6 L321.6,675.3 L307.3,676.7Z" fill="#e6ba8a" stroke="#e6ba8a" stroke-width="1.5"/><path d="M307.3,676.7 L321.6,675.3 L323.1,689.0 L308.5,690.6Z" fill="#dfba91" stroke="#dfba91" stroke-width="1.5"/><path d="M308.5,690.6 L323.1,689.0 L324.6,702.8 L309.7,704.4Z" fill="#d9bb98" stroke="#d9bb98" stroke-width="1.5"/><path d="M309.7,704.4 L324.6,702.8 L326.1,716.5 L310.8,718.3Z" fill="#d3bd9f" stroke="#d3bd9f" stroke-width="1.5"/><path d="M310.8,718.3 L326.1,716.5 L327.7,730.3 L312.0,732.1Z" fill="#cdbda5" stroke="#cdbda5" stroke-width="1.5"/><path d="M312.0,732.1 L327.7,730.3 L329.2,744.0 L313.2,745.9Z" fill="#cbbca5" stroke="#cbbca5" stroke-width="1.5"/><path d="M313.2,745.9 L329.2,744.0 L330.7,757.8 L314.3,759.8Z" fill="#c9baa4" stroke="#c9baa4" stroke-width="1.5"/><path d="M314.3,759.8 L330.7,757.8 L332.2,771.5 L315.5,773.6Z" fill="#c7b9a4" stroke="#c7b9a4" stroke-width="1.5"/><path d="M315.5,773.6 L332.2,771.5 L333.8,785.2 L316.7,787.4Z" fill="#c5b7a3" stroke="#c5b7a3" stroke-width="1.5"/><path d="M316.7,787.4 L333.8,785.2 L335.3,799.0 L317.9,801.3Z" fill="#c3b6a2" stroke="#c3b6a2" stroke-width="1.5"/><path d="M317.9,801.3 L335.3,799.0 L336.8,812.7 L319.0,815.1Z" fill="#c1b4a2" stroke="#c1b4a2" stroke-width="1.5"/><path d="M318.5,647.8 L332.0,646.5 L333.9,660.0 L320.0,661.6Z" fill="#ecba83" stroke="#ecba83" stroke-width="1.5"/><path d="M320.0,661.6 L333.9,660.0 L335.8,673.6 L321.6,675.3Z" fill="#e6ba8a" stroke="#e6ba8a" stroke-width="1.5"/><path d="M321.6,675.3 L335.8,673.6 L337.7,687.2 L323.1,689.0Z" fill="#dfba91" stroke="#dfba91" stroke-width="1.5"/><path d="M323.1,689.0 L337.7,687.2 L339.5,700.8 L324.6,702.8Z" fill="#d9bb98" stroke="#d9bb98" stroke-width="1.5"/><path d="M324.6,702.8 L339.5,700.8 L341.4,714.3 L326.1,716.5Z" fill="#d3bd9f" stroke="#d3bd9f" stroke-width="1.5"/><path d="M326.1,716.5 L341.4,714.3 L343.3,727.9 L327.7,730.3Z" fill="#cdbda5" stroke="#cdbda5" stroke-width="1.5"/><path d="M327.7,730.3 L343.3,727.9 L345.2,741.5 L329.2,744.0Z" fill="#cbbca5" stroke="#cbbca5" stroke-width="1.5"/><path d="M329.2,744.0 L345.2,741.5 L347.1,755.1 L330.7,757.8Z" fill="#c9baa4" stroke="#c9baa4" stroke-width="1.5"/><path d="M330.7,757.8 L347.1,755.1 L349.0,768.6 L332.2,771.5Z" fill="#c7b9a4" stroke="#c7b9a4" stroke-width="1.5"/><path d="M332.2,771.5 L349.0,768.6 L350.9,782.2 L333.8,785.2Z" fill="#c5b7a3" stroke="#c5b7a3" stroke-width="1.5"/><path d="M333.8,785.2 L350.9,782.2 L352.8,795.8 L335.3,799.0Z" fill="#c3b6a2" stroke="#c3b6a2" stroke-width="1.5"/><path d="M335.3,799.0 L352.8,795.8 L354.6,809.4 L336.8,812.7Z" fill="#c1b4a2" stroke="#c1b4a2" stroke-width="1.5"/><path d="M332.0,646.5 L345.5,645.1 L347.7,658.4 L333.9,660.0Z" fill="#ecba83" stroke="#ecba83" stroke-width="1.5"/><path d="M333.9,660.0 L347.7,658.4 L350.0,671.7 L335.8,673.6Z" fill="#e6ba8a" stroke="#e6ba8a" stroke-width="1.5"/><path d="M335.8,673.6 L350.0,671.7 L352.2,685.0 L337.7,687.2Z" fill="#dfba91" stroke="#dfba91" stroke-width="1.5"/><path d="M337.7,687.2 L352.2,685.0 L354.5,698.4 L339.5,700.8Z" fill="#d9bb98" stroke="#d9bb98" stroke-width="1.5"/><path d="M339.5,700.8 L354.5,698.4 L356.7,711.7 L341.4,714.3Z" fill="#d3bd9f" stroke="#d3bd9f" stroke-width="1.5"/><path d="M341.4,714.3 L356.7,711.7 L359.0,725.0 L343.3,727.9Z" fill="#cdbda5" stroke="#cdbda5" stroke-width="1.5"/><path d="M343.3,727.9 L359.0,725.0 L361.2,738.4 L345.2,741.5Z" fill="#cbbca5" stroke="#cbbca5" stroke-width="1.5"/><path d="M345.2,741.5 L361.2,738.4 L363.5,751.7 L347.1,755.1Z" fill="#c9baa4" stroke="#c9baa4" stroke-width="1.5"/><path d="M347.1,755.1 L363.5,751.7 L365.7,765.0 L349.0,768.6Z" fill="#c7b9a4" stroke="#c7b9a4" stroke-width="1.5"/><path d="M349.0,768.6 L365.7,765.0 L368.0,778.3 L350.9,782.2Z" fill="#c5b7a3" stroke="#c5b7a3" stroke-width="1.5"/><path d="M350.9,782.2 L368.0,778.3 L370.2,791.7 L352.8,795.8Z" fill="#c3b6a2" stroke="#c3b6a2" stroke-width="1.5"/><path d="M352.8,795.8 L370.2,791.7 L372.4,805.0 L354.6,809.4Z" fill="#c1b4a2" stroke="#c1b4a2" stroke-width="1.5"/><path d="M345.5,645.1 L359.0,643.6 L361.6,656.6 L347.7,658.4Z" fill="#ecba83" stroke="#ecba83" stroke-width="1.5"/><path d="M347.7,658.4 L361.6,656.6 L364.2,669.6 L350.0,671.7Z" fill="#e6ba8a" stroke="#e6ba8a" stroke-width="1.5"/><path d="M350.0,671.7 L364.2,669.6 L366.8,682.6 L352.2,685.0Z" fill="#dfba91" stroke="#dfba91" stroke-width="1.5"/><path d="M352.2,685.0 L366.8,682.6 L369.4,695.6 L354.5,698.4Z" fill="#d9bb98" stroke="#d9bb98" stroke-width="1.5"/><path d="M354.5,698.4 L369.4,695.6 L372.0,708.6 L356.7,711.7Z" fill="#d3bd9f" stroke="#d3bd9f" stroke-width="1.5"/><path d="M356.7,711.7 L372.0,708.6 L374.6,721.6 L359.0,725.0Z" fill="#cdbda5" stroke="#cdbda5" stroke-width="1.5"/><path d="M359.0,725.0 L374.6,721.6 L377.2,734.6 L361.2,738.4Z" fill="#cbbca5" stroke="#cbbca5" stroke-width="1.5"/><path d="M361.2,738.4 L377.2,734.6 L379.8,747.6 L363.5,751.7Z" fill="#c9baa4" stroke="#c9baa4" stroke-width="1.5"/><path d="M363.5,751.7 L379.8,747.6 L382.4,760.6 L365.7,765.0Z" fill="#c7b9a4" stroke="#c7b9a4" stroke-width="1.5"/><path d="M365.7,765.0 L382.4,760.6 L385.1,773.6 L368.0,778.3Z" fill="#c5b7a3" stroke="#c5b7a3" stroke-width="1.5"/><path d="M368.0,778.3 L385.1,773.6 L387.7,786.6 L370.2,791.7Z" fill="#c3b6a2" stroke="#c3b6a2" stroke-width="1.5"/><path d="M370.2,791.7 L387.7,786.6 L390.3,799.6 L372.4,805.0Z" fill="#c1b4a2" stroke="#c1b4a2" stroke-width="1.5"/><path d="M359.0,643.6 L372.5,642.0 L375.5,654.6 L361.6,656.6Z" fill="#ecba83" stroke="#ecba83" stroke-width="1.5"/><path d="M361.6,656.6 L375.5,654.6 L378.4,667.2 L364.2,669.6Z" fill="#e6ba8a" stroke="#e6ba8a" stroke-width="1.5"/><path d="M364.2,669.6 L378.4,667.2 L381.4,679.8 L366.8,682.6Z" fill="#dfba91" stroke="#dfba91" stroke-width="1.5"/><path d="M366.8,682.6 L381.4,679.8 L384.4,692.4 L369.4,695.6Z" fill="#d9bb98" stroke="#d9bb98" stroke-width="1.5"/><path d="M369.4,695.6 L384.4,692.4 L387.3,705.0 L372.0,708.6Z" fill="#d3bd9f" stroke="#d3bd9f" stroke-width="1.5"/><path d="M372.0,708.6 L387.3,705.0 L390.3,717.5 L374.6,721.6Z" fill="#cdbda5" stroke="#cdbda5" stroke-width="1.5"/><path d="M374.6,721.6 L390.3,717.5 L393.2,730.1 L377.2,734.6Z" fill="#cbbca5" stroke="#cbbca5" stroke-width="1.5"/><path d="M377.2,734.6 L393.2,730.1 L396.2,742.7 L379.8,747.6Z" fill="#c9baa4" stroke="#c9baa4" stroke-width="1.5"/><path d="M379.8,747.6 L396.2,742.7 L399.2,755.3 L382.4,760.6Z" fill="#c7b9a4" stroke="#c7b9a4" stroke-width="1.5"/><path d="M382.4,760.6 L399.2,755.3 L402.1,767.9 L385.1,773.6Z" fill="#c5b7a3" stroke="#c5b7a3" stroke-width="1.5"/><path d="M385.1,773.6 L402.1,767.9 L405.1,780.4 L387.7,786.6Z" fill="#c3b6a2" stroke="#c3b6a2" stroke-width="1.5"/><path d="M387.7,786.6 L405.1,780.4 L408.1,793.0 L390.3,799.6Z" fill="#c1b4a2" stroke="#c1b4a2" stroke-width="1.5"/><path d="M372.5,642.0 L386.0,640.4 L389.3,652.5 L375.5,654.6Z" fill="#ecba83" stroke="#ecba83" stroke-width="1.5"/><path d="M375.5,654.6 L389.3,652.5 L392.6,664.6 L378.4,667.2Z" fill="#e6ba8a" stroke="#e6ba8a" stroke-width="1.5"/><path d="M378.4,667.2 L392.6,664.6 L396.0,676.7 L381.4,679.8Z" fill="#dfba91" stroke="#dfba91" stroke-width="1.5"/><path d="M381.4,679.8 L396.0,676.7 L399.3,688.7 L384.4,692.4Z" fill="#d9bb98" stroke="#d9bb98" stroke-width="1.5"/><path d="M384.4,692.4 L399.3,688.7 L402.6,700.8 L387.3,705.0Z" fill="#d3bd9f" stroke="#d3bd9f" stroke-width="1.5"/><path d="M387.3,705.0 L402.6,700.8 L405.9,712.9 L390.3,717.5Z" fill="#cdbda5" stroke="#cdbda5" stroke-width="1.5"/><path d="M390.3,717.5 L405.9,712.9 L409.3,724.9 L393.2,730.1Z" fill="#cbbca5" stroke="#cbbca5" stroke-width="1.5"/><path d="M393.2,730.1 L409.3,724.9 L412.6,737.0 L396.2,742.7Z" fill="#c9baa4" stroke="#c9baa4" stroke-width="1.5"/><path d="M396.2,742.7 L412.6,737.0 L415.9,749.1 L399.2,755.3Z" fill="#c7b9a4" stroke="#c7b9a4" stroke-width="1.5"/><path d="M399.2,755.3 L415.9,749.1 L419.2,761.2 L402.1,767.9Z" fill="#c5b7a3" stroke="#c5b7a3" stroke-width="1.5"/><path d="M402.1,767.9 L419.2,761.2 L422.6,773.2 L405.1,780.4Z" fill="#c3b6a2" stroke="#c3b6a2" stroke-width="1.5"/><path d="M405.1,780.4 L422.6,773.2 L425.9,785.3 L408.1,793.0Z" fill="#c1b4a2" stroke="#c1b4a2" stroke-width="1.5"/><path d="M386.0,640.4 L399.5,638.8 L403.2,650.2 L389.3,652.5Z" fill="#ecba83" stroke="#ecba83" stroke-width="1.5"/><path d="M389.3,652.5 L403.2,650.2 L406.9,661.7 L392.6,664.6Z" fill="#e6ba8a" stroke="#e6ba8a" stroke-width="1.5"/><path d="M392.6,664.6 L406.9,661.7 L410.5,673.1 L396.0,676.7Z" fill="#dfba91" stroke="#dfba91" stroke-width="1.5"/><path d="M396.0,676.7 L410.5,673.1 L414.2,684.6 L399.3,688.7Z" fill="#d9bb98" stroke="#d9bb98" stroke-width="1.5"/><path d="M399.3,688.7 L414.2,684.6 L417.9,696.1 L402.6,700.8Z" fill="#d3bd9f" stroke="#d3bd9f" stroke-width="1.5"/><path d="M402.6,700.8 L417.9,696.1 L421.6,707.5 L405.9,712.9Z" fill="#cdbda5" stroke="#cdbda5" stroke-width="1.5"/><path d="M405.9,712.9 L421.6,707.5 L425.3,719.0 L409.3,724.9Z" fill="#cbbca5" stroke="#cbbca5" stroke-width="1.5"/><path d="M409.3,724.9 L425.3,719.0 L429.0,730.5 L412.6,737.0Z" fill="#c9baa4" stroke="#c9baa4" stroke-width="1.5"/><path d="M412.6,737.0 L429.0,730.5 L432.6,741.9 L415.9,749.1Z" fill="#c7b9a4" stroke="#c7b9a4" stroke-width="1.5"/><path d="M415.9,749.1 L432.6,741.9 L436.3,753.4 L419.2,761.2Z" fill="#c5b7a3" stroke="#c5b7a3" stroke-width="1.5"/><path d="M419.2,761.2 L436.3,753.4 L440.0,764.8 L422.6,773.2Z" fill="#c3b6a2" stroke="#c3b6a2" stroke-width="1.5"/><path d="M422.6,773.2 L440.0,764.8 L443.7,776.3 L425.9,785.3Z" fill="#c1b4a2" stroke="#c1b4a2" stroke-width="1.5"/><path d="M399.5,638.8 L413.0,637.0 L417.0,647.8 L403.2,650.2Z" fill="#ecba83" stroke="#ecba83" stroke-width="1.5"/><path d="M403.2,650.2 L417.0,647.8 L421.1,658.5 L406.9,661.7Z" fill="#e6ba8a" stroke="#e6ba8a" stroke-width="1.5"/><path d="M406.9,661.7 L421.1,658.5 L425.1,669.2 L410.5,673.1Z" fill="#dfba91" stroke="#dfba91" stroke-width="1.5"/><path d="M410.5,673.1 L425.1,669.2 L429.2,680.0 L414.2,684.6Z" fill="#d9bb98" stroke="#d9bb98" stroke-width="1.5"/><path d="M414.2,684.6 L429.2,680.0 L433.2,690.7 L417.9,696.1Z" fill="#d3bd9f" stroke="#d3bd9f" stroke-width="1.5"/><path d="M417.9,696.1 L433.2,690.7 L437.2,701.5 L421.6,707.5Z" fill="#cdbda5" stroke="#cdbda5" stroke-width="1.5"/><path d="M421.6,707.5 L437.2,701.5 L441.3,712.2 L425.3,719.0Z" fill="#cbbca5" stroke="#cbbca5" stroke-width="1.5"/><path d="M425.3,719.0 L441.3,712.2 L445.3,722.9 L429.0,730.5Z" fill="#c9baa4" stroke="#c9baa4" stroke-width="1.5"/><path d="M429.0,730.5 L445.3,722.9 L449.4,733.7 L432.6,741.9Z" fill="#c7b9a4" stroke="#c7b9a4" stroke-width="1.5"/><path d="M432.6,741.9 L449.4,733.7 L453.4,744.4 L436.3,753.4Z" fill="#c5b7a3" stroke="#c5b7a3" stroke-width="1.5"/><path d="M436.3,753.4 L453.4,744.4 L457.5,755.2 L440.0,764.8Z" fill="#c3b6a2" stroke="#c3b6a2" stroke-width="1.5"/><path d="M440.0,764.8 L457.5,755.2 L461.5,765.9 L443.7,776.3Z" fill="#c1b4a2" stroke="#c1b4a2" stroke-width="1.5"/>
<path d="M142.2,661.1 L146.8,661.1 L151.3,661.0 L155.8,660.9 L160.4,660.8 L164.9,660.7 L169.4,660.6 L173.9,660.4 L178.5,660.3 L183.0,660.1 L187.5,660.0 L192.1,659.8 L196.6,659.6 L201.1,659.4 L205.6,659.2 L210.2,659.0 L214.7,658.8 L219.2,658.6 L223.8,658.3 L228.3,658.1 L232.8,657.8 L237.3,657.6 L241.9,657.3 L246.4,657.0 L250.9,656.7 L255.5,656.4 L260.0,656.1 L264.5,655.8 L269.1,655.4 L273.6,655.1 L278.1,654.7 L282.6,654.4 L287.2,654.0 L291.7,653.6 L296.2,653.2 L300.8,652.8 L305.3,652.4 L309.8,652.0 L314.3,651.5 L318.9,651.1 L323.4,650.7 L327.9,650.2 L332.5,649.7 L337.0,649.2 L341.5,648.8 L346.0,648.3 L350.6,647.8 L355.1,647.2 L359.6,646.7 L364.2,646.2 L368.7,645.6 L373.2,645.1 L377.7,644.5 L382.3,643.9 L386.8,643.3 L391.3,642.7 L395.9,642.1 L400.4,641.5 L404.9,640.9 L409.4,640.2 L414.0,639.6" stroke="#f6c890" stroke-width="5" fill="none" opacity="0.6" filter="url(#lblur2)"/>
<g style="mix-blend-mode:multiply" opacity="0.55"><rect x="105" y="637" width="356" height="180" filter="url(#lrelief)"/></g>
<g filter="url(#lblur2)">
<path d="M149.1,665.5 L189.4,675.3 L227.4,686.2 L261.8,705.8 L270.5,728.0 L240.2,745.4 L214.3,761.1 L195.1,758.5 L165.8,750.1 L149.9,723.7 L148.5,698.1 L143.4,684.7Z" fill="#ece0cc" opacity="0.45"/>
<path d="M209.7,761.0 L238.0,752.9 L265.8,770.9 L287.1,795.4 L299.9,818.6 L260.5,824.6 L218.0,803.6Z" fill="#8a7c68" opacity="0.35"/>
</g>
<path d="M145.6,700.8 L147.1,726.7 L154.9,741.7 L163.9,754.1 L179.4,759.8 L194.0,762.7 L213.9,765.3 L229.6,756.6 L240.2,749.4 L238.5,746.9 L227.9,753.9 L213.3,762.2 L194.5,759.5 L180.1,756.6 L165.7,751.4 L157.5,739.9 L150.2,726.0 L148.6,700.7Z" fill="#5a4c3c" opacity="0.55" filter="url(#lrough)"/>
<path d="M147.2,698.1 L148.6,724.1 L156.2,738.9 L165.1,751.3 L180.4,756.9 L194.9,759.8 L214.6,762.4 L230.2,753.7 L240.9,746.5 L239.4,744.3 L228.8,751.4 L214.1,759.7 L195.4,757.1 L181.0,754.1 L166.6,748.9 L158.5,737.4 L151.2,723.4 L149.8,698.0Z" fill="#faf2e4" opacity="0.8" filter="url(#lrough)"/>
<path d="M280.9,717.0 L297.9,731.1 L316.5,746.8 L338.8,757.3 L364.0,760.2 L391.2,758.5 L422.3,758.1 L446.4,755.5 L465.7,756.2 L482.0,733.6 L459.3,738.4 L431.9,745.0 L398.3,748.5 L369.1,752.1 L343.5,750.9 L321.1,742.0 L301.6,727.4 L283.4,714.5Z" fill="#fbf4e6" opacity="0.8" filter="url(#lrough)"/>
<path d="M238.7,742.5 L258.1,759.6 L276.9,780.3 L299.7,794.1 L325.4,802.5 L352.3,803.8 L382.6,802.0 L415.1,791.1 L444.9,776.1 L448.3,766.7 L417.9,783.1 L385.9,794.5 L356.1,796.7 L329.3,796.4 L304.0,789.1 L281.0,776.6 L261.3,756.8 L240.7,740.6Z" fill="#fbf4e6" opacity="0.8" filter="url(#lrough)"/>
<path d="M259.5,697.3 L269.1,706.7 L281.1,716.9 L283.2,714.5 L270.7,705.0 L260.6,696.1Z" fill="#fbf4e6" opacity="0.8" filter="url(#lrough)"/>
<path d="M276.1,721.7 L292.8,736.4 L311.4,752.7 L333.6,763.9 L358.8,767.7 L385.5,767.2 L415.8,768.2 L438.9,767.2 L457.5,769.4 L481.9,736.9 L458.7,741.6 L430.8,748.0 L396.6,751.3 L367.0,754.7 L341.3,753.6 L318.7,744.9 L298.8,730.4 L280.1,717.6Z" fill="#2e261c" opacity="0.9" filter="url(#lrough)"/>
<path d="M279.5,717.8 L278.2,720.5 M280.7,719.9 L279.4,722.7 M281.0,720.9 L280.1,722.8 M284.1,724.5 L282.8,726.9 M284.2,724.9 L282.3,728.6 M286.9,723.5 L285.2,727.0 M287.4,724.9 L285.4,728.4 M286.3,727.1 L284.6,729.7 M291.9,727.0 L290.3,729.6 M298.1,736.0 L296.3,740.0 M305.3,743.1 L303.3,746.1 M311.2,741.3 L308.5,746.0 M308.7,745.5 L307.6,748.2 M311.1,745.1 L309.6,747.7 M311.6,744.8 L309.2,748.4 M312.8,743.1 L310.2,748.1 M313.8,743.8 L312.3,746.1 M315.1,749.8 L313.8,753.6 M319.3,748.9 L317.7,753.2 M325.0,750.1 L323.2,756.0 M324.3,752.4 L323.0,756.5 M324.9,753.1 L323.5,757.6 M334.7,753.9 L333.4,756.6 M337.1,755.3 L335.4,758.9 M336.7,757.9 L336.1,761.7 M339.3,756.7 L338.0,760.9 M339.3,758.5 L338.6,764.3 M345.3,759.6 L343.8,764.1 M347.3,755.9 L346.3,762.5 M348.0,759.7 L346.7,765.0 M352.4,759.1 L350.5,763.5 M358.0,760.3 L357.1,763.7 M362.8,755.2 L361.1,762.4 M360.6,759.8 L359.7,765.4 M361.2,759.5 L359.7,765.2 M364.4,757.2 L362.9,763.4 M373.5,756.3 L372.4,763.3 M370.8,761.6 L367.9,768.7 M397.1,755.2 L392.9,762.0 M400.5,756.5 L398.8,761.1 M398.6,759.9 L395.6,765.2 M402.1,755.9 L400.0,760.8 M401.5,757.7 L397.8,765.1 M404.2,757.9 L401.9,764.1 M404.9,760.3 L401.6,766.0 M415.7,756.1 L411.8,762.2 M430.4,752.0 L422.6,764.2 M431.0,752.2 L427.6,757.7 M427.6,756.5 L423.9,764.8 M432.4,750.6 L425.9,762.9 M433.8,748.8 L427.7,761.5 M435.3,757.8 L429.8,766.3 M439.0,753.7 L431.6,764.3 M441.7,755.7 L434.1,767.7 M440.1,758.7 L434.2,767.5 M448.9,749.5 L439.6,763.5 M455.6,745.6 L448.4,756.2 M455.3,746.3 L449.4,755.6 M463.6,744.6 L455.4,756.7 M464.4,743.6 L453.5,760.5 M467.7,742.7 L456.5,760.5 M473.9,740.8 L462.2,758.3 M470.7,750.9 L459.8,767.9" stroke="#f2e8d6" stroke-width="1.9" stroke-linecap="round" opacity="0.55" filter="url(#lblur1)"/>
<path d="M234.2,746.3 L253.3,764.0 L272.1,785.0 L294.9,799.5 L320.9,808.6 L348.0,810.6 L378.6,809.2 L411.3,799.2 L440.7,785.5 L445.8,770.6 L415.6,786.2 L383.8,797.1 L354.1,799.0 L327.3,798.7 L301.9,791.4 L278.7,779.1 L258.6,759.4 L237.5,743.2Z" fill="#2e261c" opacity="0.9" filter="url(#lrough)"/>
<path d="M236.8,745.1 L235.1,747.4 M238.8,745.0 L237.2,747.5 M241.6,747.7 L240.6,750.2 M244.2,751.5 L243.1,753.5 M244.1,752.2 L243.3,754.2 M246.7,751.5 L245.5,754.1 M246.3,752.6 L244.9,755.2 M246.7,752.8 L245.6,754.6 M255.0,760.6 L253.7,762.1 M255.4,761.9 L254.0,764.0 M258.1,764.1 L256.9,766.5 M261.5,767.2 L258.9,770.8 M262.3,767.5 L260.0,770.2 M263.1,767.8 L261.0,771.2 M264.7,766.8 L262.2,770.0 M265.0,768.0 L262.2,771.8 M270.3,775.3 L269.3,777.4 M271.1,776.0 L269.9,777.9 M269.5,777.2 L268.6,779.7 M272.9,776.8 L270.1,780.7 M280.7,784.2 L279.1,787.3 M282.4,785.8 L281.2,790.6 M284.5,784.8 L283.5,788.7 M286.9,784.7 L284.4,789.5 M287.9,789.7 L286.9,794.4 M291.1,789.1 L290.2,791.5 M291.6,791.7 L290.2,795.9 M295.4,790.7 L294.2,794.9 M294.5,794.1 L292.6,798.3 M299.9,794.2 L298.8,797.1 M303.4,793.9 L302.6,798.1 M309.9,794.5 L309.6,800.3 M309.3,797.4 L308.6,800.3 M310.8,796.7 L310.3,801.0 M315.3,797.3 L313.5,802.9 M315.1,797.5 L315.2,802.2 M316.0,801.0 L315.0,806.8 M319.2,799.5 L318.5,805.1 M326.9,800.4 L326.9,803.6 M326.6,805.3 L326.4,808.7 M336.0,804.9 L335.1,809.9 M349.8,802.3 L349.5,805.3 M354.5,802.4 L354.7,806.0 M355.7,802.3 L354.8,806.8 M361.2,805.8 L360.5,810.9 M368.0,803.7 L368.8,809.7 M379.7,801.6 L379.5,806.6 M378.1,804.6 L379.8,809.2 M380.2,801.4 L382.1,805.6 M385.4,799.7 L386.6,802.2 M387.6,801.3 L388.7,806.4 M390.6,800.1 L391.4,802.8 M394.0,798.6 L395.4,801.4 M407.9,791.4 L407.7,794.6 M407.5,795.1 L407.4,800.7 M410.1,790.0 L411.3,795.8 M426.6,782.4 L427.6,788.0 M426.1,783.8 L428.6,789.1 M427.2,787.6 L427.9,792.0 M430.9,779.9 L431.4,786.0 M442.6,776.7 L443.2,780.0" stroke="#f2e8d6" stroke-width="1.9" stroke-linecap="round" opacity="0.55" filter="url(#lblur1)"/>
<path d="M255.0,701.2 L264.5,711.0 L276.4,721.5 L279.8,717.7 L267.1,708.2 L256.8,699.4Z" fill="#2e261c" opacity="0.9" filter="url(#lrough)"/>
<path d="M380.5,761.8 L395.5,757.1 L408.0,760.3 L396.4,769.0 L384.4,767.3Z" fill="#fffaf0" opacity="0.8" filter="url(#lblur2)"/>
<g fill="none" stroke-linecap="round" stroke-linejoin="round">
<path d="M160.6,675.9 L179.9,682.5 L198.5,689.6 L213.0,705.7" stroke="#f6eedf" stroke-width="3.4" opacity="0.7" filter="url(#lrough)"/>
<path d="M158.3,678.0 L177.7,684.7 L196.4,692.0 L211.0,708.2" stroke="#4a3f32" stroke-width="3.0" opacity="0.55" filter="url(#lrough)"/>
<path d="M253.0,702.3 L265.4,710.7 L279.2,717.9" stroke="#f6eedf" stroke-width="3.4" opacity="0.7" filter="url(#lrough)"/>
<path d="M251.0,705.1 L263.4,713.5 L277.3,720.8" stroke="#4a3f32" stroke-width="3.0" opacity="0.55" filter="url(#lrough)"/>
<path d="M309.0,694.1 L341.0,697.0 L377.4,693.3 L405.4,687.2 L427.8,687.1" stroke="#f6eedf" stroke-width="3.4" opacity="0.7" filter="url(#lrough)"/>
<path d="M306.9,697.4 L338.8,700.7 L375.1,697.7 L402.6,692.7 L424.5,693.7" stroke="#4a3f32" stroke-width="3.0" opacity="0.55" filter="url(#lrough)"/>
<path d="M238.5,790.5 L261.2,807.0 L286.7,820.4 L314.9,830.4" stroke="#f6eedf" stroke-width="3.4" opacity="0.7" filter="url(#lrough)"/>
<path d="M237.1,793.0 L260.0,809.6 L285.6,823.1 L314.1,833.1" stroke="#4a3f32" stroke-width="3.0" opacity="0.55" filter="url(#lrough)"/>
<path d="M204.5,667.9 L236.6,667.6 L267.1,668.9" stroke="#f6eedf" stroke-width="3.4" opacity="0.7" filter="url(#lrough)"/>
<path d="M202.2,670.4 L234.3,670.4 L264.8,672.0" stroke="#4a3f32" stroke-width="3.0" opacity="0.55" filter="url(#lrough)"/>
<path d="M168.7,703.7 L189.4,708.5 L205.1,724.6 L221.2,726.6" stroke="#f6eedf" stroke-width="3.4" opacity="0.7" filter="url(#lrough)"/>
<path d="M166.6,705.9 L187.4,710.8 L203.2,727.0 L219.3,729.1" stroke="#4a3f32" stroke-width="3.0" opacity="0.55" filter="url(#lrough)"/>
</g>
<g filter="url(#lblur1)" opacity="0.4">
<ellipse cx="172.5" cy="699.0" rx="4.1" ry="1.7" transform="rotate(-10 172.5 699.0)" fill="#4a3e30"/>
<ellipse cx="162.5" cy="720.4" rx="4.2" ry="1.8" transform="rotate(-10 162.5 720.4)" fill="#f6eee0"/>
<ellipse cx="207.0" cy="694.2" rx="4.5" ry="1.9" transform="rotate(-39 207.0 694.2)" fill="#f6eee0"/>
<ellipse cx="161.8" cy="739.4" rx="3.1" ry="1.3" transform="rotate(6 161.8 739.4)" fill="#f6eee0"/>
<ellipse cx="185.9" cy="715.4" rx="3.9" ry="1.7" transform="rotate(-25 185.9 715.4)" fill="#f6eee0"/>
<ellipse cx="259.2" cy="730.6" rx="3.4" ry="1.5" transform="rotate(5 259.2 730.6)" fill="#f6eee0"/>
<ellipse cx="163.1" cy="730.1" rx="3.5" ry="1.5" transform="rotate(2 163.1 730.1)" fill="#f6eee0"/>
<ellipse cx="183.0" cy="711.2" rx="3.2" ry="1.4" transform="rotate(6 183.0 711.2)" fill="#f6eee0"/>
<ellipse cx="233.0" cy="723.9" rx="3.6" ry="1.5" transform="rotate(-31 233.0 723.9)" fill="#4a3e30"/>
<ellipse cx="145.3" cy="686.0" rx="3.5" ry="1.5" transform="rotate(-10 145.3 686.0)" fill="#f6eee0"/>
<ellipse cx="201.2" cy="716.8" rx="3.1" ry="1.3" transform="rotate(-29 201.2 716.8)" fill="#f6eee0"/>
<ellipse cx="178.6" cy="725.7" rx="4.5" ry="1.9" transform="rotate(-5 178.6 725.7)" fill="#4a3e30"/>
<ellipse cx="190.6" cy="743.0" rx="3.8" ry="1.6" transform="rotate(1 190.6 743.0)" fill="#4a3e30"/>
<ellipse cx="238.6" cy="695.8" rx="4.9" ry="2.1" transform="rotate(-19 238.6 695.8)" fill="#4a3e30"/>
<ellipse cx="221.7" cy="707.2" rx="4.7" ry="2.0" transform="rotate(-27 221.7 707.2)" fill="#4a3e30"/>
<ellipse cx="182.0" cy="711.0" rx="2.4" ry="1.0" transform="rotate(-39 182.0 711.0)" fill="#4a3e30"/>
<ellipse cx="227.5" cy="706.7" rx="4.5" ry="1.9" transform="rotate(7 227.5 706.7)" fill="#f6eee0"/>
<ellipse cx="164.6" cy="675.0" rx="4.6" ry="1.9" transform="rotate(-39 164.6 675.0)" fill="#f6eee0"/>
<ellipse cx="248.7" cy="713.1" rx="3.1" ry="1.3" transform="rotate(-6 248.7 713.1)" fill="#f6eee0"/>
<ellipse cx="209.1" cy="732.7" rx="2.6" ry="1.1" transform="rotate(3 209.1 732.7)" fill="#4a3e30"/>
<ellipse cx="196.5" cy="727.3" rx="4.0" ry="1.7" transform="rotate(-23 196.5 727.3)" fill="#f6eee0"/>
<ellipse cx="243.4" cy="724.8" rx="3.6" ry="1.5" transform="rotate(-31 243.4 724.8)" fill="#f6eee0"/>
<ellipse cx="172.9" cy="702.7" rx="4.2" ry="1.8" transform="rotate(-22 172.9 702.7)" fill="#f6eee0"/>
<ellipse cx="201.7" cy="742.2" rx="3.3" ry="1.4" transform="rotate(-6 201.7 742.2)" fill="#f6eee0"/>
<ellipse cx="197.2" cy="755.8" rx="2.3" ry="1.0" transform="rotate(5 197.2 755.8)" fill="#f6eee0"/>
<ellipse cx="221.3" cy="726.3" rx="2.5" ry="1.1" transform="rotate(-25 221.3 726.3)" fill="#f6eee0"/>
<ellipse cx="192.8" cy="687.7" rx="3.6" ry="1.5" transform="rotate(-16 192.8 687.7)" fill="#4a3e30"/>
<ellipse cx="171.8" cy="736.5" rx="3.7" ry="1.5" transform="rotate(-16 171.8 736.5)" fill="#4a3e30"/>
<ellipse cx="242.4" cy="757.9" rx="2.6" ry="1.1" transform="rotate(-31 242.4 757.9)" fill="#4a3e30"/>
<ellipse cx="147.1" cy="712.4" rx="2.3" ry="1.0" transform="rotate(-35 147.1 712.4)" fill="#f6eee0"/>
<ellipse cx="152.6" cy="705.4" rx="3.1" ry="1.3" transform="rotate(-5 152.6 705.4)" fill="#4a3e30"/>
<ellipse cx="170.8" cy="696.0" rx="4.7" ry="2.0" transform="rotate(-24 170.8 696.0)" fill="#4a3e30"/>
<ellipse cx="192.7" cy="736.4" rx="5.0" ry="2.1" transform="rotate(-38 192.7 736.4)" fill="#f6eee0"/>
<ellipse cx="165.4" cy="676.1" rx="2.6" ry="1.1" transform="rotate(-23 165.4 676.1)" fill="#f6eee0"/>
<ellipse cx="226.4" cy="749.6" rx="2.5" ry="1.1" transform="rotate(-31 226.4 749.6)" fill="#f6eee0"/>
<ellipse cx="172.9" cy="737.8" rx="3.5" ry="1.5" transform="rotate(-27 172.9 737.8)" fill="#f6eee0"/>
<ellipse cx="173.7" cy="712.1" rx="3.9" ry="1.6" transform="rotate(-30 173.7 712.1)" fill="#f6eee0"/>
<ellipse cx="207.3" cy="743.8" rx="3.2" ry="1.3" transform="rotate(-8 207.3 743.8)" fill="#f6eee0"/>
<ellipse cx="166.8" cy="679.1" rx="2.3" ry="1.0" transform="rotate(-23 166.8 679.1)" fill="#f6eee0"/>
<ellipse cx="229.3" cy="736.0" rx="4.4" ry="1.9" transform="rotate(-24 229.3 736.0)" fill="#f6eee0"/>
<ellipse cx="180.0" cy="718.3" rx="4.6" ry="1.9" transform="rotate(-4 180.0 718.3)" fill="#f6eee0"/>
<ellipse cx="240.9" cy="747.1" rx="3.5" ry="1.5" transform="rotate(-18 240.9 747.1)" fill="#f6eee0"/>
<ellipse cx="152.4" cy="734.2" rx="3.0" ry="1.3" transform="rotate(-8 152.4 734.2)" fill="#f6eee0"/>
<ellipse cx="234.8" cy="736.4" rx="3.6" ry="1.5" transform="rotate(-2 234.8 736.4)" fill="#4a3e30"/>
<ellipse cx="214.1" cy="730.1" rx="2.9" ry="1.2" transform="rotate(-38 214.1 730.1)" fill="#f6eee0"/>
<ellipse cx="200.9" cy="755.8" rx="3.5" ry="1.5" transform="rotate(-0 200.9 755.8)" fill="#f6eee0"/>
<ellipse cx="199.4" cy="718.0" rx="2.3" ry="1.0" transform="rotate(-3 199.4 718.0)" fill="#f6eee0"/>
<ellipse cx="180.3" cy="727.2" rx="3.4" ry="1.5" transform="rotate(4 180.3 727.2)" fill="#f6eee0"/>
<ellipse cx="252.1" cy="724.7" rx="2.5" ry="1.1" transform="rotate(-15 252.1 724.7)" fill="#4a3e30"/>
<ellipse cx="145.6" cy="689.0" rx="3.2" ry="1.4" transform="rotate(-7 145.6 689.0)" fill="#f6eee0"/>
<ellipse cx="222.8" cy="754.5" rx="4.9" ry="2.1" transform="rotate(-30 222.8 754.5)" fill="#4a3e30"/>
<ellipse cx="192.1" cy="702.8" rx="2.3" ry="1.0" transform="rotate(-25 192.1 702.8)" fill="#f6eee0"/>
<ellipse cx="193.1" cy="709.5" rx="4.3" ry="1.8" transform="rotate(-36 193.1 709.5)" fill="#f6eee0"/>
<ellipse cx="223.5" cy="748.6" rx="2.2" ry="0.9" transform="rotate(-39 223.5 748.6)" fill="#f6eee0"/>
<ellipse cx="229.8" cy="699.1" rx="4.4" ry="1.9" transform="rotate(-29 229.8 699.1)" fill="#4a3e30"/>
<ellipse cx="235.5" cy="739.9" rx="4.4" ry="1.9" transform="rotate(-27 235.5 739.9)" fill="#4a3e30"/>
<ellipse cx="266.4" cy="721.1" rx="4.0" ry="1.7" transform="rotate(-28 266.4 721.1)" fill="#f6eee0"/>
<ellipse cx="172.5" cy="713.5" rx="2.8" ry="1.2" transform="rotate(-40 172.5 713.5)" fill="#f6eee0"/>
<ellipse cx="177.1" cy="724.4" rx="3.6" ry="1.5" transform="rotate(-39 177.1 724.4)" fill="#4a3e30"/>
<ellipse cx="210.8" cy="742.1" rx="2.3" ry="1.0" transform="rotate(9 210.8 742.1)" fill="#4a3e30"/>
<ellipse cx="231.8" cy="752.0" rx="2.4" ry="1.0" transform="rotate(-3 231.8 752.0)" fill="#4a3e30"/>
<ellipse cx="182.5" cy="700.3" rx="5.0" ry="2.1" transform="rotate(-25 182.5 700.3)" fill="#4a3e30"/>
<ellipse cx="189.5" cy="741.1" rx="3.3" ry="1.4" transform="rotate(-31 189.5 741.1)" fill="#f6eee0"/>
<ellipse cx="210.1" cy="690.6" rx="3.5" ry="1.5" transform="rotate(-28 210.1 690.6)" fill="#f6eee0"/>
<ellipse cx="256.8" cy="725.8" rx="2.8" ry="1.2" transform="rotate(-26 256.8 725.8)" fill="#4a3e30"/>
<ellipse cx="186.2" cy="732.4" rx="2.7" ry="1.2" transform="rotate(-40 186.2 732.4)" fill="#f6eee0"/>
<ellipse cx="254.4" cy="740.0" rx="4.8" ry="2.0" transform="rotate(-9 254.4 740.0)" fill="#4a3e30"/>
<ellipse cx="152.0" cy="707.3" rx="2.7" ry="1.2" transform="rotate(-23 152.0 707.3)" fill="#f6eee0"/>
<ellipse cx="153.2" cy="682.1" rx="2.7" ry="1.1" transform="rotate(-34 153.2 682.1)" fill="#4a3e30"/>
<ellipse cx="183.5" cy="688.6" rx="3.7" ry="1.6" transform="rotate(3 183.5 688.6)" fill="#f6eee0"/>
<ellipse cx="240.0" cy="756.0" rx="4.8" ry="2.0" transform="rotate(0 240.0 756.0)" fill="#f6eee0"/>
<ellipse cx="139.2" cy="708.1" rx="3.3" ry="1.4" transform="rotate(-12 139.2 708.1)" fill="#f6eee0"/>
<ellipse cx="210.5" cy="708.7" rx="2.8" ry="1.2" transform="rotate(-1 210.5 708.7)" fill="#4a3e30"/>
<ellipse cx="238.4" cy="711.7" rx="4.0" ry="1.7" transform="rotate(-14 238.4 711.7)" fill="#f6eee0"/>
<ellipse cx="255.0" cy="725.3" rx="3.5" ry="1.5" transform="rotate(-30 255.0 725.3)" fill="#f6eee0"/>
<ellipse cx="203.9" cy="702.3" rx="4.4" ry="1.9" transform="rotate(9 203.9 702.3)" fill="#f6eee0"/>
<ellipse cx="208.3" cy="715.1" rx="4.7" ry="2.0" transform="rotate(-13 208.3 715.1)" fill="#4a3e30"/>
<ellipse cx="220.4" cy="697.0" rx="2.5" ry="1.1" transform="rotate(-37 220.4 697.0)" fill="#4a3e30"/>
<ellipse cx="195.6" cy="706.9" rx="2.3" ry="1.0" transform="rotate(-33 195.6 706.9)" fill="#4a3e30"/>
<ellipse cx="197.0" cy="717.4" rx="4.5" ry="1.9" transform="rotate(-21 197.0 717.4)" fill="#4a3e30"/>
<ellipse cx="154.0" cy="737.9" rx="4.8" ry="2.0" transform="rotate(-2 154.0 737.9)" fill="#4a3e30"/>
<ellipse cx="151.1" cy="705.4" rx="2.2" ry="0.9" transform="rotate(3 151.1 705.4)" fill="#f6eee0"/>
<ellipse cx="194.2" cy="714.4" rx="4.4" ry="1.9" transform="rotate(10 194.2 714.4)" fill="#4a3e30"/>
<ellipse cx="221.5" cy="723.2" rx="4.2" ry="1.8" transform="rotate(-7 221.5 723.2)" fill="#f6eee0"/>
<ellipse cx="244.0" cy="715.2" rx="4.7" ry="2.0" transform="rotate(4 244.0 715.2)" fill="#4a3e30"/>
<ellipse cx="211.3" cy="689.1" rx="4.9" ry="2.1" transform="rotate(-7 211.3 689.1)" fill="#f6eee0"/>
<ellipse cx="159.8" cy="703.8" rx="4.6" ry="1.9" transform="rotate(6 159.8 703.8)" fill="#f6eee0"/>
<ellipse cx="155.9" cy="723.0" rx="3.8" ry="1.6" transform="rotate(9 155.9 723.0)" fill="#4a3e30"/>
<ellipse cx="205.0" cy="747.5" rx="4.4" ry="1.8" transform="rotate(-16 205.0 747.5)" fill="#f6eee0"/>
<ellipse cx="168.9" cy="749.0" rx="4.5" ry="1.9" transform="rotate(-26 168.9 749.0)" fill="#f6eee0"/>
<ellipse cx="166.1" cy="739.2" rx="3.0" ry="1.3" transform="rotate(-17 166.1 739.2)" fill="#f6eee0"/>
<ellipse cx="205.9" cy="744.4" rx="4.2" ry="1.8" transform="rotate(-17 205.9 744.4)" fill="#4a3e30"/>
<ellipse cx="171.9" cy="690.8" rx="4.3" ry="1.8" transform="rotate(-29 171.9 690.8)" fill="#4a3e30"/>
<ellipse cx="266.6" cy="733.5" rx="3.0" ry="1.3" transform="rotate(3 266.6 733.5)" fill="#f6eee0"/>
<ellipse cx="248.9" cy="727.2" rx="2.7" ry="1.2" transform="rotate(4 248.9 727.2)" fill="#f6eee0"/>
<ellipse cx="182.6" cy="679.8" rx="3.7" ry="1.6" transform="rotate(-31 182.6 679.8)" fill="#4a3e30"/>
<ellipse cx="202.7" cy="738.5" rx="4.9" ry="2.1" transform="rotate(-21 202.7 738.5)" fill="#f6eee0"/>
<ellipse cx="182.2" cy="743.6" rx="2.4" ry="1.0" transform="rotate(-15 182.2 743.6)" fill="#f6eee0"/>
<ellipse cx="208.7" cy="770.0" rx="2.1" ry="0.9" transform="rotate(-37 208.7 770.0)" fill="#4a3e30"/>
<ellipse cx="281.8" cy="773.6" rx="2.5" ry="1.1" transform="rotate(-40 281.8 773.6)" fill="#4a3e30"/>
<ellipse cx="212.2" cy="760.3" rx="3.4" ry="1.4" transform="rotate(-11 212.2 760.3)" fill="#f6eee0"/>
<ellipse cx="221.3" cy="816.2" rx="3.2" ry="1.4" transform="rotate(-26 221.3 816.2)" fill="#4a3e30"/>
<ellipse cx="278.3" cy="790.8" rx="2.1" ry="0.9" transform="rotate(-2 278.3 790.8)" fill="#4a3e30"/>
<ellipse cx="253.5" cy="806.1" rx="3.1" ry="1.3" transform="rotate(-3 253.5 806.1)" fill="#4a3e30"/>
<ellipse cx="214.9" cy="760.8" rx="3.6" ry="1.5" transform="rotate(-23 214.9 760.8)" fill="#4a3e30"/>
<ellipse cx="290.9" cy="758.1" rx="2.8" ry="1.2" transform="rotate(-13 290.9 758.1)" fill="#f6eee0"/>
<ellipse cx="226.3" cy="754.4" rx="2.1" ry="0.9" transform="rotate(-17 226.3 754.4)" fill="#f6eee0"/>
<ellipse cx="208.1" cy="795.2" rx="3.0" ry="1.2" transform="rotate(-2 208.1 795.2)" fill="#4a3e30"/>
<ellipse cx="299.2" cy="772.7" rx="2.2" ry="0.9" transform="rotate(-24 299.2 772.7)" fill="#f6eee0"/>
<ellipse cx="280.7" cy="800.2" rx="3.3" ry="1.4" transform="rotate(1 280.7 800.2)" fill="#f6eee0"/>
<ellipse cx="216.5" cy="784.0" rx="3.7" ry="1.5" transform="rotate(-6 216.5 784.0)" fill="#f6eee0"/>
<ellipse cx="275.3" cy="803.9" rx="2.5" ry="1.0" transform="rotate(-16 275.3 803.9)" fill="#4a3e30"/>
<ellipse cx="294.3" cy="768.5" rx="2.2" ry="0.9" transform="rotate(-24 294.3 768.5)" fill="#f6eee0"/>
<ellipse cx="223.5" cy="780.0" rx="3.3" ry="1.4" transform="rotate(-11 223.5 780.0)" fill="#4a3e30"/>
<ellipse cx="266.4" cy="793.2" rx="3.7" ry="1.6" transform="rotate(3 266.4 793.2)" fill="#f6eee0"/>
<ellipse cx="270.9" cy="781.9" rx="3.7" ry="1.6" transform="rotate(-35 270.9 781.9)" fill="#f6eee0"/>
<ellipse cx="233.5" cy="760.7" rx="2.7" ry="1.1" transform="rotate(6 233.5 760.7)" fill="#4a3e30"/>
<ellipse cx="226.8" cy="815.9" rx="3.4" ry="1.4" transform="rotate(-2 226.8 815.9)" fill="#f6eee0"/>
<ellipse cx="259.5" cy="801.2" rx="2.0" ry="0.8" transform="rotate(-29 259.5 801.2)" fill="#4a3e30"/>
<ellipse cx="260.8" cy="815.9" rx="2.3" ry="1.0" transform="rotate(-39 260.8 815.9)" fill="#f6eee0"/>
<ellipse cx="252.5" cy="814.9" rx="1.9" ry="0.8" transform="rotate(-13 252.5 814.9)" fill="#f6eee0"/>
<ellipse cx="207.4" cy="819.4" rx="3.3" ry="1.4" transform="rotate(-37 207.4 819.4)" fill="#f6eee0"/>
<ellipse cx="285.2" cy="785.0" rx="1.7" ry="0.7" transform="rotate(7 285.2 785.0)" fill="#f6eee0"/>
<ellipse cx="234.4" cy="755.2" rx="2.0" ry="0.9" transform="rotate(-17 234.4 755.2)" fill="#f6eee0"/>
<ellipse cx="223.8" cy="757.8" rx="2.6" ry="1.1" transform="rotate(-21 223.8 757.8)" fill="#4a3e30"/>
<ellipse cx="278.2" cy="791.9" rx="1.8" ry="0.8" transform="rotate(-40 278.2 791.9)" fill="#4a3e30"/>
<ellipse cx="219.1" cy="750.2" rx="3.3" ry="1.4" transform="rotate(-15 219.1 750.2)" fill="#4a3e30"/>
<ellipse cx="277.8" cy="774.3" rx="3.6" ry="1.5" transform="rotate(-5 277.8 774.3)" fill="#4a3e30"/>
<ellipse cx="201.7" cy="816.1" rx="3.4" ry="1.4" transform="rotate(-12 201.7 816.1)" fill="#4a3e30"/>
<ellipse cx="246.3" cy="810.4" rx="3.7" ry="1.6" transform="rotate(8 246.3 810.4)" fill="#4a3e30"/>
<ellipse cx="234.5" cy="765.0" rx="3.1" ry="1.3" transform="rotate(-3 234.5 765.0)" fill="#f6eee0"/>
<ellipse cx="286.2" cy="785.9" rx="2.0" ry="0.8" transform="rotate(-5 286.2 785.9)" fill="#f6eee0"/>
<ellipse cx="295.7" cy="801.5" rx="2.0" ry="0.9" transform="rotate(-18 295.7 801.5)" fill="#f6eee0"/>
<ellipse cx="236.1" cy="819.9" rx="2.8" ry="1.2" transform="rotate(-15 236.1 819.9)" fill="#f6eee0"/>
<ellipse cx="227.2" cy="769.5" rx="2.8" ry="1.2" transform="rotate(-12 227.2 769.5)" fill="#f6eee0"/>
<ellipse cx="209.2" cy="807.9" rx="3.1" ry="1.3" transform="rotate(8 209.2 807.9)" fill="#4a3e30"/>
<ellipse cx="228.5" cy="782.2" rx="3.6" ry="1.5" transform="rotate(3 228.5 782.2)" fill="#f6eee0"/>
<ellipse cx="249.8" cy="761.4" rx="2.5" ry="1.1" transform="rotate(-34 249.8 761.4)" fill="#f6eee0"/>
<ellipse cx="275.7" cy="823.8" rx="1.8" ry="0.8" transform="rotate(-33 275.7 823.8)" fill="#f6eee0"/>
<ellipse cx="298.3" cy="761.7" rx="3.4" ry="1.5" transform="rotate(-3 298.3 761.7)" fill="#f6eee0"/>
<ellipse cx="244.6" cy="809.5" rx="3.4" ry="1.4" transform="rotate(-25 244.6 809.5)" fill="#4a3e30"/>
<ellipse cx="233.4" cy="791.4" rx="1.9" ry="0.8" transform="rotate(-22 233.4 791.4)" fill="#4a3e30"/>
<ellipse cx="274.3" cy="782.7" rx="2.7" ry="1.2" transform="rotate(-31 274.3 782.7)" fill="#4a3e30"/>
<ellipse cx="239.4" cy="777.2" rx="3.7" ry="1.5" transform="rotate(-38 239.4 777.2)" fill="#f6eee0"/>
<ellipse cx="294.9" cy="791.6" rx="2.7" ry="1.1" transform="rotate(-30 294.9 791.6)" fill="#f6eee0"/>
<ellipse cx="208.2" cy="771.2" rx="2.7" ry="1.1" transform="rotate(-3 208.2 771.2)" fill="#f6eee0"/>
<ellipse cx="214.6" cy="748.6" rx="3.0" ry="1.3" transform="rotate(-10 214.6 748.6)" fill="#f6eee0"/>
<ellipse cx="294.9" cy="796.8" rx="3.2" ry="1.4" transform="rotate(-17 294.9 796.8)" fill="#f6eee0"/>
<ellipse cx="255.0" cy="769.6" rx="3.7" ry="1.6" transform="rotate(-4 255.0 769.6)" fill="#f6eee0"/>
<ellipse cx="223.1" cy="782.1" rx="2.4" ry="1.0" transform="rotate(-6 223.1 782.1)" fill="#f6eee0"/>
<ellipse cx="280.5" cy="770.2" rx="3.7" ry="1.6" transform="rotate(-30 280.5 770.2)" fill="#4a3e30"/>
<ellipse cx="285.3" cy="804.8" rx="3.6" ry="1.5" transform="rotate(-38 285.3 804.8)" fill="#4a3e30"/>
<ellipse cx="209.1" cy="766.4" rx="3.7" ry="1.5" transform="rotate(-39 209.1 766.4)" fill="#4a3e30"/>
<ellipse cx="292.4" cy="786.0" rx="2.4" ry="1.0" transform="rotate(-39 292.4 786.0)" fill="#4a3e30"/>
<ellipse cx="229.4" cy="781.4" rx="3.5" ry="1.5" transform="rotate(-12 229.4 781.4)" fill="#f6eee0"/>
<ellipse cx="269.6" cy="765.9" rx="2.1" ry="0.9" transform="rotate(-31 269.6 765.9)" fill="#4a3e30"/>
<ellipse cx="227.1" cy="763.3" rx="1.7" ry="0.7" transform="rotate(-6 227.1 763.3)" fill="#f6eee0"/>
<ellipse cx="239.8" cy="797.5" rx="3.6" ry="1.5" transform="rotate(-38 239.8 797.5)" fill="#4a3e30"/>
<ellipse cx="236.9" cy="788.8" rx="2.5" ry="1.1" transform="rotate(-9 236.9 788.8)" fill="#f6eee0"/>
<ellipse cx="286.1" cy="783.3" rx="3.3" ry="1.4" transform="rotate(-21 286.1 783.3)" fill="#4a3e30"/>
<ellipse cx="243.9" cy="778.3" rx="1.9" ry="0.8" transform="rotate(-24 243.9 778.3)" fill="#4a3e30"/>
<ellipse cx="279.2" cy="799.0" rx="2.3" ry="1.0" transform="rotate(2 279.2 799.0)" fill="#4a3e30"/>
<ellipse cx="220.9" cy="808.6" rx="3.7" ry="1.6" transform="rotate(-2 220.9 808.6)" fill="#f6eee0"/>
<ellipse cx="261.2" cy="787.2" rx="2.4" ry="1.0" transform="rotate(-10 261.2 787.2)" fill="#4a3e30"/>
<ellipse cx="230.0" cy="809.0" rx="3.3" ry="1.4" transform="rotate(9 230.0 809.0)" fill="#f6eee0"/>
<ellipse cx="283.8" cy="780.9" rx="2.5" ry="1.0" transform="rotate(-0 283.8 780.9)" fill="#f6eee0"/>
<ellipse cx="242.0" cy="783.9" rx="3.3" ry="1.4" transform="rotate(-40 242.0 783.9)" fill="#f6eee0"/>
<ellipse cx="215.0" cy="804.2" rx="2.6" ry="1.1" transform="rotate(-14 215.0 804.2)" fill="#4a3e30"/>
<ellipse cx="217.4" cy="798.8" rx="3.0" ry="1.3" transform="rotate(-14 217.4 798.8)" fill="#4a3e30"/>
<ellipse cx="296.8" cy="758.7" rx="2.8" ry="1.2" transform="rotate(-14 296.8 758.7)" fill="#f6eee0"/>
<ellipse cx="236.4" cy="799.1" rx="3.5" ry="1.5" transform="rotate(-0 236.4 799.1)" fill="#f6eee0"/>
<ellipse cx="288.8" cy="817.4" rx="3.7" ry="1.6" transform="rotate(-27 288.8 817.4)" fill="#f6eee0"/>
<ellipse cx="263.1" cy="788.7" rx="1.8" ry="0.8" transform="rotate(-7 263.1 788.7)" fill="#f6eee0"/>
<ellipse cx="286.5" cy="767.2" rx="2.6" ry="1.1" transform="rotate(9 286.5 767.2)" fill="#4a3e30"/>
<ellipse cx="241.4" cy="795.3" rx="2.9" ry="1.2" transform="rotate(-34 241.4 795.3)" fill="#f6eee0"/>
<ellipse cx="206.9" cy="785.7" rx="3.1" ry="1.3" transform="rotate(-4 206.9 785.7)" fill="#4a3e30"/>
<ellipse cx="300.2" cy="763.7" rx="1.8" ry="0.8" transform="rotate(-7 300.2 763.7)" fill="#4a3e30"/>
<ellipse cx="288.5" cy="820.7" rx="3.6" ry="1.5" transform="rotate(-19 288.5 820.7)" fill="#f6eee0"/>
<ellipse cx="256.1" cy="799.8" rx="2.9" ry="1.2" transform="rotate(6 256.1 799.8)" fill="#f6eee0"/>
<ellipse cx="281.6" cy="808.1" rx="1.7" ry="0.7" transform="rotate(-36 281.6 808.1)" fill="#4a3e30"/>
<ellipse cx="240.9" cy="805.6" rx="3.8" ry="1.6" transform="rotate(-26 240.9 805.6)" fill="#4a3e30"/>
<ellipse cx="226.9" cy="795.4" rx="2.6" ry="1.1" transform="rotate(-1 226.9 795.4)" fill="#f6eee0"/>
<ellipse cx="214.4" cy="804.9" rx="2.6" ry="1.1" transform="rotate(4 214.4 804.9)" fill="#f6eee0"/>
<ellipse cx="235.8" cy="796.7" rx="3.0" ry="1.3" transform="rotate(1 235.8 796.7)" fill="#4a3e30"/>
<ellipse cx="230.7" cy="795.6" rx="2.8" ry="1.2" transform="rotate(-23 230.7 795.6)" fill="#f6eee0"/>
<ellipse cx="285.6" cy="796.7" rx="2.7" ry="1.2" transform="rotate(-17 285.6 796.7)" fill="#4a3e30"/>
<ellipse cx="253.9" cy="783.9" rx="2.8" ry="1.2" transform="rotate(-27 253.9 783.9)" fill="#4a3e30"/>
<ellipse cx="236.4" cy="807.2" rx="1.7" ry="0.7" transform="rotate(1 236.4 807.2)" fill="#f6eee0"/>
<ellipse cx="273.6" cy="800.7" rx="1.9" ry="0.8" transform="rotate(6 273.6 800.7)" fill="#f6eee0"/>
<ellipse cx="242.4" cy="811.5" rx="1.9" ry="0.8" transform="rotate(-8 242.4 811.5)" fill="#f6eee0"/>
<ellipse cx="233.1" cy="781.8" rx="3.2" ry="1.4" transform="rotate(-32 233.1 781.8)" fill="#f6eee0"/>
<ellipse cx="274.6" cy="771.3" rx="2.5" ry="1.0" transform="rotate(-9 274.6 771.3)" fill="#4a3e30"/>
<ellipse cx="244.3" cy="790.3" rx="2.6" ry="1.1" transform="rotate(2 244.3 790.3)" fill="#f6eee0"/>
<ellipse cx="257.5" cy="758.1" rx="2.0" ry="0.8" transform="rotate(4 257.5 758.1)" fill="#4a3e30"/>
<ellipse cx="272.8" cy="822.1" rx="3.3" ry="1.4" transform="rotate(-16 272.8 822.1)" fill="#f6eee0"/>
<ellipse cx="227.4" cy="766.6" rx="2.2" ry="0.9" transform="rotate(-5 227.4 766.6)" fill="#4a3e30"/>
<ellipse cx="243.6" cy="791.5" rx="2.8" ry="1.2" transform="rotate(-3 243.6 791.5)" fill="#f6eee0"/>
<ellipse cx="267.1" cy="755.5" rx="3.1" ry="1.3" transform="rotate(-25 267.1 755.5)" fill="#f6eee0"/>
<ellipse cx="295.5" cy="797.0" rx="2.8" ry="1.2" transform="rotate(-5 295.5 797.0)" fill="#f6eee0"/>
<ellipse cx="232.4" cy="772.6" rx="3.7" ry="1.6" transform="rotate(-13 232.4 772.6)" fill="#4a3e30"/>
<ellipse cx="252.0" cy="788.2" rx="2.4" ry="1.0" transform="rotate(-14 252.0 788.2)" fill="#4a3e30"/>
<ellipse cx="246.9" cy="794.2" rx="3.2" ry="1.4" transform="rotate(-21 246.9 794.2)" fill="#4a3e30"/>
<ellipse cx="215.3" cy="815.2" rx="2.0" ry="0.9" transform="rotate(-18 215.3 815.2)" fill="#4a3e30"/>
<ellipse cx="291.2" cy="821.3" rx="2.4" ry="1.0" transform="rotate(-20 291.2 821.3)" fill="#4a3e30"/>
<ellipse cx="267.9" cy="771.8" rx="2.6" ry="1.1" transform="rotate(-7 267.9 771.8)" fill="#4a3e30"/>
<ellipse cx="219.8" cy="805.1" rx="3.9" ry="1.6" transform="rotate(-13 219.8 805.1)" fill="#f6eee0"/>
<ellipse cx="299.8" cy="786.9" rx="3.4" ry="1.4" transform="rotate(-12 299.8 786.9)" fill="#f6eee0"/>
<ellipse cx="253.2" cy="760.3" rx="2.3" ry="1.0" transform="rotate(-29 253.2 760.3)" fill="#f6eee0"/>
<ellipse cx="253.3" cy="801.3" rx="2.5" ry="1.1" transform="rotate(-5 253.3 801.3)" fill="#4a3e30"/>
<ellipse cx="297.2" cy="770.4" rx="2.4" ry="1.0" transform="rotate(-18 297.2 770.4)" fill="#f6eee0"/>
<ellipse cx="221.5" cy="799.8" rx="3.3" ry="1.4" transform="rotate(-35 221.5 799.8)" fill="#4a3e30"/>
<ellipse cx="253.5" cy="783.5" rx="3.8" ry="1.6" transform="rotate(-21 253.5 783.5)" fill="#f6eee0"/>
<ellipse cx="255.3" cy="776.1" rx="3.3" ry="1.4" transform="rotate(-29 255.3 776.1)" fill="#f6eee0"/>
<ellipse cx="210.2" cy="817.4" rx="3.8" ry="1.6" transform="rotate(-4 210.2 817.4)" fill="#4a3e30"/>
<ellipse cx="221.5" cy="773.9" rx="2.5" ry="1.1" transform="rotate(-34 221.5 773.9)" fill="#f6eee0"/>
<ellipse cx="250.8" cy="812.3" rx="3.9" ry="1.6" transform="rotate(-37 250.8 812.3)" fill="#4a3e30"/>
<ellipse cx="276.8" cy="787.9" rx="2.3" ry="1.0" transform="rotate(-22 276.8 787.9)" fill="#4a3e30"/>
<ellipse cx="236.8" cy="821.6" rx="3.3" ry="1.4" transform="rotate(-35 236.8 821.6)" fill="#f6eee0"/>
<ellipse cx="294.5" cy="790.2" rx="2.8" ry="1.2" transform="rotate(-9 294.5 790.2)" fill="#4a3e30"/>
<ellipse cx="358.4" cy="707.8" rx="3.2" ry="1.3" transform="rotate(-38 358.4 707.8)" fill="#4a3e30"/>
<ellipse cx="419.3" cy="749.5" rx="2.9" ry="1.2" transform="rotate(-36 419.3 749.5)" fill="#f6eee0"/>
<ellipse cx="292.7" cy="739.5" rx="3.2" ry="1.4" transform="rotate(-24 292.7 739.5)" fill="#f6eee0"/>
<ellipse cx="288.5" cy="714.2" rx="2.1" ry="0.9" transform="rotate(-24 288.5 714.2)" fill="#4a3e30"/>
<ellipse cx="281.1" cy="797.4" rx="2.6" ry="1.1" transform="rotate(-34 281.1 797.4)" fill="#4a3e30"/>
<ellipse cx="411.7" cy="681.5" rx="3.2" ry="1.4" transform="rotate(-3 411.7 681.5)" fill="#f6eee0"/>
<ellipse cx="369.8" cy="777.7" rx="2.3" ry="1.0" transform="rotate(1 369.8 777.7)" fill="#4a3e30"/>
<ellipse cx="273.0" cy="765.4" rx="2.5" ry="1.1" transform="rotate(-18 273.0 765.4)" fill="#f6eee0"/>
<ellipse cx="357.5" cy="809.9" rx="2.8" ry="1.2" transform="rotate(-10 357.5 809.9)" fill="#f6eee0"/>
<ellipse cx="360.4" cy="780.6" rx="2.9" ry="1.2" transform="rotate(-30 360.4 780.6)" fill="#4a3e30"/>
<ellipse cx="402.4" cy="700.5" rx="2.9" ry="1.2" transform="rotate(2 402.4 700.5)" fill="#f6eee0"/>
<ellipse cx="321.9" cy="745.8" rx="3.3" ry="1.4" transform="rotate(-37 321.9 745.8)" fill="#4a3e30"/>
<ellipse cx="344.1" cy="815.3" rx="2.7" ry="1.2" transform="rotate(-26 344.1 815.3)" fill="#4a3e30"/>
<ellipse cx="371.7" cy="724.8" rx="1.7" ry="0.7" transform="rotate(-11 371.7 724.8)" fill="#f6eee0"/>
<ellipse cx="301.5" cy="820.2" rx="2.9" ry="1.2" transform="rotate(-36 301.5 820.2)" fill="#f6eee0"/>
<ellipse cx="315.1" cy="684.8" rx="3.0" ry="1.3" transform="rotate(-13 315.1 684.8)" fill="#4a3e30"/>
<ellipse cx="329.7" cy="702.3" rx="2.1" ry="0.9" transform="rotate(-8 329.7 702.3)" fill="#4a3e30"/>
<ellipse cx="308.9" cy="685.1" rx="2.1" ry="0.9" transform="rotate(-20 308.9 685.1)" fill="#4a3e30"/>
<ellipse cx="284.6" cy="784.4" rx="3.2" ry="1.4" transform="rotate(3 284.6 784.4)" fill="#4a3e30"/>
<ellipse cx="369.8" cy="731.4" rx="2.9" ry="1.2" transform="rotate(-22 369.8 731.4)" fill="#4a3e30"/>
<ellipse cx="324.6" cy="761.5" rx="2.5" ry="1.1" transform="rotate(-21 324.6 761.5)" fill="#f6eee0"/>
<ellipse cx="409.8" cy="762.5" rx="3.1" ry="1.3" transform="rotate(1 409.8 762.5)" fill="#f6eee0"/>
<ellipse cx="303.1" cy="757.2" rx="2.2" ry="0.9" transform="rotate(1 303.1 757.2)" fill="#f6eee0"/>
<ellipse cx="282.8" cy="709.9" rx="1.9" ry="0.8" transform="rotate(8 282.8 709.9)" fill="#4a3e30"/>
<ellipse cx="280.7" cy="734.2" rx="1.7" ry="0.7" transform="rotate(-36 280.7 734.2)" fill="#4a3e30"/>
<ellipse cx="281.9" cy="713.9" rx="2.9" ry="1.2" transform="rotate(-12 281.9 713.9)" fill="#4a3e30"/>
<ellipse cx="330.1" cy="815.6" rx="1.8" ry="0.8" transform="rotate(-40 330.1 815.6)" fill="#4a3e30"/>
<ellipse cx="405.5" cy="772.8" rx="1.8" ry="0.8" transform="rotate(-18 405.5 772.8)" fill="#4a3e30"/>
<ellipse cx="307.7" cy="736.4" rx="1.9" ry="0.8" transform="rotate(-5 307.7 736.4)" fill="#f6eee0"/>
<ellipse cx="280.7" cy="734.2" rx="2.4" ry="1.0" transform="rotate(-1 280.7 734.2)" fill="#4a3e30"/>
<ellipse cx="417.1" cy="755.5" rx="2.7" ry="1.1" transform="rotate(-30 417.1 755.5)" fill="#4a3e30"/>
<ellipse cx="303.9" cy="803.1" rx="1.8" ry="0.8" transform="rotate(-16 303.9 803.1)" fill="#4a3e30"/>
<ellipse cx="387.1" cy="756.5" rx="2.7" ry="1.2" transform="rotate(-33 387.1 756.5)" fill="#4a3e30"/>
<ellipse cx="295.8" cy="758.3" rx="2.2" ry="0.9" transform="rotate(-13 295.8 758.3)" fill="#f6eee0"/>
<ellipse cx="389.0" cy="769.0" rx="2.4" ry="1.0" transform="rotate(-15 389.0 769.0)" fill="#f6eee0"/>
<ellipse cx="292.9" cy="778.2" rx="2.7" ry="1.2" transform="rotate(10 292.9 778.2)" fill="#4a3e30"/>
<ellipse cx="323.8" cy="767.3" rx="2.1" ry="0.9" transform="rotate(-9 323.8 767.3)" fill="#4a3e30"/>
<ellipse cx="288.6" cy="745.8" rx="3.1" ry="1.3" transform="rotate(-4 288.6 745.8)" fill="#4a3e30"/>
<ellipse cx="346.7" cy="744.8" rx="1.8" ry="0.8" transform="rotate(-36 346.7 744.8)" fill="#f6eee0"/>
<ellipse cx="280.7" cy="734.2" rx="2.6" ry="1.1" transform="rotate(-11 280.7 734.2)" fill="#f6eee0"/>
<ellipse cx="430.8" cy="700.7" rx="2.1" ry="0.9" transform="rotate(-23 430.8 700.7)" fill="#4a3e30"/>
<ellipse cx="330.3" cy="707.0" rx="1.9" ry="0.8" transform="rotate(-11 330.3 707.0)" fill="#f6eee0"/>
<ellipse cx="280.7" cy="734.2" rx="2.3" ry="1.0" transform="rotate(-26 280.7 734.2)" fill="#f6eee0"/>
<ellipse cx="273.4" cy="814.2" rx="2.7" ry="1.1" transform="rotate(-26 273.4 814.2)" fill="#f6eee0"/>
<ellipse cx="328.1" cy="803.4" rx="2.7" ry="1.1" transform="rotate(-7 328.1 803.4)" fill="#f6eee0"/>
<ellipse cx="284.2" cy="828.4" rx="2.6" ry="1.1" transform="rotate(-19 284.2 828.4)" fill="#4a3e30"/>
<ellipse cx="333.9" cy="731.1" rx="2.0" ry="0.9" transform="rotate(-11 333.9 731.1)" fill="#f6eee0"/>
<ellipse cx="280.7" cy="734.2" rx="2.6" ry="1.1" transform="rotate(-1 280.7 734.2)" fill="#4a3e30"/>
<ellipse cx="311.8" cy="686.7" rx="2.6" ry="1.1" transform="rotate(-38 311.8 686.7)" fill="#f6eee0"/>
<ellipse cx="386.0" cy="739.2" rx="2.3" ry="1.0" transform="rotate(-32 386.0 739.2)" fill="#4a3e30"/>
<ellipse cx="372.0" cy="703.2" rx="2.1" ry="0.9" transform="rotate(-24 372.0 703.2)" fill="#4a3e30"/>
<ellipse cx="357.6" cy="709.4" rx="3.1" ry="1.3" transform="rotate(-38 357.6 709.4)" fill="#f6eee0"/>
<ellipse cx="303.0" cy="715.1" rx="2.1" ry="0.9" transform="rotate(-34 303.0 715.1)" fill="#4a3e30"/>
<ellipse cx="305.5" cy="817.0" rx="1.9" ry="0.8" transform="rotate(2 305.5 817.0)" fill="#f6eee0"/>
<ellipse cx="382.9" cy="797.5" rx="3.0" ry="1.3" transform="rotate(-34 382.9 797.5)" fill="#f6eee0"/>
<ellipse cx="337.4" cy="675.6" rx="1.9" ry="0.8" transform="rotate(-15 337.4 675.6)" fill="#f6eee0"/>
<ellipse cx="280.7" cy="734.2" rx="1.7" ry="0.7" transform="rotate(-17 280.7 734.2)" fill="#4a3e30"/>
<ellipse cx="272.4" cy="773.3" rx="1.7" ry="0.7" transform="rotate(-14 272.4 773.3)" fill="#f6eee0"/>
<ellipse cx="280.7" cy="734.2" rx="3.3" ry="1.4" transform="rotate(-33 280.7 734.2)" fill="#4a3e30"/>
<ellipse cx="406.7" cy="675.5" rx="2.6" ry="1.1" transform="rotate(-25 406.7 675.5)" fill="#f6eee0"/>
<ellipse cx="286.5" cy="817.5" rx="3.3" ry="1.4" transform="rotate(-5 286.5 817.5)" fill="#f6eee0"/>
<ellipse cx="306.7" cy="786.5" rx="1.8" ry="0.7" transform="rotate(-31 306.7 786.5)" fill="#f6eee0"/>
<ellipse cx="271.0" cy="778.4" rx="3.2" ry="1.4" transform="rotate(-19 271.0 778.4)" fill="#4a3e30"/>
<ellipse cx="273.3" cy="764.4" rx="3.0" ry="1.3" transform="rotate(-4 273.3 764.4)" fill="#f6eee0"/>
<ellipse cx="324.4" cy="744.9" rx="2.3" ry="1.0" transform="rotate(-27 324.4 744.9)" fill="#4a3e30"/>
<ellipse cx="379.0" cy="746.3" rx="1.8" ry="0.8" transform="rotate(-35 379.0 746.3)" fill="#f6eee0"/>
<ellipse cx="324.5" cy="754.4" rx="2.5" ry="1.1" transform="rotate(-39 324.5 754.4)" fill="#f6eee0"/>
<ellipse cx="379.3" cy="724.5" rx="2.4" ry="1.0" transform="rotate(9 379.3 724.5)" fill="#f6eee0"/>
<ellipse cx="421.4" cy="714.9" rx="1.8" ry="0.8" transform="rotate(-39 421.4 714.9)" fill="#f6eee0"/>
</g>
<circle cx="157.2" cy="758.1" r="5.1" fill="#d8ccb8" stroke="#f4ecde" stroke-width="1.2" opacity="0.75"/>
<path d="M152.1,758.1 A5.1,5.1 0 0 0 162.3,758.1" fill="none" stroke="#5a4c3c" stroke-width="1.0" opacity="0.5"/>
<circle cx="149.3" cy="776.7" r="3.0" fill="#d8ccb8" stroke="#f4ecde" stroke-width="1.2" opacity="0.75"/>
<path d="M146.3,776.7 A3.0,3.0 0 0 0 152.3,776.7" fill="none" stroke="#5a4c3c" stroke-width="1.0" opacity="0.5"/>
<circle cx="170.4" cy="760.7" r="1.7" fill="#d8ccb8" stroke="#f4ecde" stroke-width="1.2" opacity="0.75"/>
<path d="M168.7,760.7 A1.7,1.7 0 0 0 172.1,760.7" fill="none" stroke="#5a4c3c" stroke-width="1.0" opacity="0.5"/>
</g>
<text x="0" y="0" font-size="8" fill="#fff" font-family="Liberation Sans" letter-spacing="3.6" transform="translate(185,641) rotate(13)">UNIVIEW</text>
<text x="0" y="0" font-size="5.5" fill="#ddd" font-family="Liberation Sans" transform="translate(163,631) rotate(16)">Image:</text>
<rect x="0" y="-5" width="5" height="5" fill="#fff" transform="translate(181,638) rotate(13)"/>
<g fill="none" stroke="#8a8a8a" stroke-width="1"><circle cx="283.4" cy="641.0" r="31.33"/><circle cx="283.4" cy="641.0" r="62.67"/><circle cx="283.4" cy="641.0" r="94.00"/><circle cx="283.4" cy="641.0" r="125.33"/><circle cx="283.4" cy="641.0" r="156.67"/><circle cx="283.4" cy="641.0" r="188.00"/><circle cx="283.4" cy="641.0" r="219.33"/><circle cx="283.4" cy="641.0" r="250.67"/><circle cx="283.4" cy="641.0" r="282.00"/><line x1="283.4" y1="641.0" x2="561.12" y2="689.97"/><line x1="283.4" y1="641.0" x2="548.39" y2="737.45"/><line x1="283.4" y1="641.0" x2="527.62" y2="782.00"/><line x1="283.4" y1="641.0" x2="499.42" y2="822.27"/><line x1="283.4" y1="641.0" x2="464.67" y2="857.02"/><line x1="283.4" y1="641.0" x2="424.40" y2="885.22"/><line x1="283.4" y1="641.0" x2="379.85" y2="905.99"/><line x1="283.4" y1="641.0" x2="332.37" y2="918.72"/><line x1="283.4" y1="641.0" x2="234.43" y2="918.72"/><line x1="283.4" y1="641.0" x2="186.95" y2="905.99"/><line x1="283.4" y1="641.0" x2="142.40" y2="885.22"/><line x1="283.4" y1="641.0" x2="102.13" y2="857.02"/><line x1="283.4" y1="641.0" x2="67.38" y2="822.27"/><line x1="283.4" y1="641.0" x2="39.18" y2="782.00"/><line x1="283.4" y1="641.0" x2="18.41" y2="737.45"/><line x1="283.4" y1="641.0" x2="5.68" y2="689.97"/><line x1="283.4" y1="641.0" x2="5.68" y2="592.03"/><line x1="283.4" y1="641.0" x2="18.41" y2="544.55"/><line x1="283.4" y1="641.0" x2="39.18" y2="500.00"/><line x1="283.4" y1="641.0" x2="67.38" y2="459.73"/><line x1="283.4" y1="641.0" x2="102.13" y2="424.98"/><line x1="283.4" y1="641.0" x2="142.40" y2="396.78"/><line x1="283.4" y1="641.0" x2="186.95" y2="376.01"/><line x1="283.4" y1="641.0" x2="234.43" y2="363.28"/><line x1="283.4" y1="641.0" x2="332.37" y2="363.28"/><line x1="283.4" y1="641.0" x2="379.85" y2="376.01"/><line x1="283.4" y1="641.0" x2="424.40" y2="396.78"/><line x1="283.4" y1="641.0" x2="464.67" y2="424.98"/><line x1="283.4" y1="641.0" x2="499.42" y2="459.73"/><line x1="283.4" y1="641.0" x2="527.62" y2="500.00"/><line x1="283.4" y1="641.0" x2="548.39" y2="544.55"/><line x1="283.4" y1="641.0" x2="561.12" y2="592.03"/></g>
<g stroke="#8a8a8a" stroke-width="2"><line x1="1.3999999999999773" y1="641.0" x2="565.4" y2="641.0"/><line x1="283.4" y1="359.0" x2="283.4" y2="923.0"/></g>
<circle cx="283.4" cy="641.0" r="4" fill="#8a8a8a"/>
<path d="M177.7,572.2 L184.7,574.3 L191.8,576.3 L198.8,578.2 L205.8,579.9 L212.9,581.4 L219.9,582.8 L226.9,584.1 L234.0,585.2 L241.0,586.1 L248.0,586.9 L255.1,587.5 L262.1,588.0 L269.1,588.4 L276.2,588.6 L283.2,588.7 L290.2,588.6 L297.3,588.4 L304.3,588.1 L311.3,587.6 L318.4,586.9 L325.4,586.1 L332.4,585.2 L339.5,584.1 L346.5,582.9 L353.5,581.5 L360.6,580.0 L367.6,578.3 L374.6,576.5 L381.7,574.5 L388.7,572.3 L485.3,824.7 L485.3,822.1 L475.2,829.4 L465.2,836.1 L455.1,842.4 L445.0,848.1 L435.0,853.4 L424.9,858.3 L414.8,862.8 L404.8,866.9 L394.7,870.6 L384.6,874.0 L374.6,877.0 L364.5,879.7 L354.4,882.0 L344.4,884.0 L334.3,885.7 L324.2,887.1 L314.2,888.2 L304.1,889.0 L294.0,889.4 L283.9,889.6 L273.9,889.5 L263.8,889.0 L253.7,888.3 L243.7,887.2 L233.6,885.9 L223.5,884.2 L213.5,882.2 L203.4,879.9 L193.3,877.3 L183.3,874.3 L173.2,871.0 L163.1,867.3 L153.1,863.3 L143.0,858.8 L132.9,854.0 L122.9,848.7 L112.8,843.0 L102.7,836.8 L92.7,830.1 L82.6,822.9Z" fill="none" stroke="#f07818" stroke-width="1.2"/>
</g></svg>
<div class="a" style="left:8px;top:1130px;width:22px;height:21px;background:#fff;"></div>
<div class="a" style="left:47px;top:1130px;width:7px;height:21px;background:#fff;"></div>
<div class="a" style="left:60px;top:1130px;width:7px;height:21px;background:#fff;"></div>
<div class="a" style="left:79px;top:1137px;width:447px;height:6px;background:#fff;"></div>
<div class="a" style="left:483px;top:1126px;width:14px;height:28px;background:#fff;border:1px solid #111;box-sizing:border-box;border-radius:2px;"></div>
<div class="a" style="left:532px;top:1125px;width:32px;height:31px;background:#555;"></div>
<svg style="left:538px;top:1131px" width="22" height="20"><path d="M4 5.5 H17 Q19 5.5 19 8 V12 Q19 14.5 17 14.5 H5" stroke="#f49a28" stroke-width="3" fill="none"/><path d="M0.5 5.5 L6 1 L6 10 Z" fill="#f49a28"/></svg>
<div class="a" style="left:570px;top:157px;width:389px;height:1002px;background:#3a3a3a;"></div>
<div class="a" style="left:571px;top:158px;width:387px;height:27px;background:#333333;"></div>
<div class="a" style="left:571px;top:185px;width:387px;height:974px;background:#242424;"></div>
<div class="t" style="left:574.5px;top:165.8px;font-size:12px;color:#e8e8e8;font-weight:normal;letter-spacing:-0.25px;">File Library</div>
<svg style="left:941px;top:165px" width="12" height="12"><path d="M1 1 L10 10 M10 1 L1 10" stroke="#fff" stroke-width="1.3"/></svg>
<div class="a" style="left:578px;top:194px;width:32px;height:24px;background:#333;"></div>
<svg style="left:586px;top:199px" width="16" height="14"><path d="M2 1.2 H13.5 Q14.5 1.3 14.5 2.6 H1.5 Q1.5 1.3 2 1.2 Z" fill="#fff"/><path d="M1 3.6 H15 L14.3 13 H1.7 Z" fill="#fff"/><path d="M8 5.2 L4.6 8.6 H6.9 V11.8 H9.1 V8.6 H11.4 Z" fill="#1a1a1a"/></svg>
<div class="t" style="left:742.5px;top:198.9px;font-size:15.5px;color:#fff;font-weight:normal;">Slides</div>
<div class="a" style="left:919px;top:194px;width:32px;height:24px;background:#333;"></div>
<svg style="left:928px;top:199px" width="15" height="15"><rect x="1.0" y="1.0" width="3.6" height="3.6" fill="#fff"/><rect x="1.0" y="5.7" width="3.6" height="3.6" fill="#fff"/><rect x="1.0" y="10.4" width="3.6" height="3.6" fill="#fff"/><rect x="5.7" y="1.0" width="3.6" height="3.6" fill="#fff"/><rect x="5.7" y="5.7" width="3.6" height="3.6" fill="#fff"/><rect x="5.7" y="10.4" width="3.6" height="3.6" fill="#fff"/><rect x="10.4" y="1.0" width="3.6" height="3.6" fill="#fff"/><rect x="10.4" y="5.7" width="3.6" height="3.6" fill="#fff"/><rect x="10.4" y="10.4" width="3.6" height="3.6" fill="#fff"/></svg>
<div class="a" style="left:574px;top:1016px;width:381px;height:105px;background:#2f2f2f;"></div>
<div class="a" style="left:574px;top:224px;width:381px;height:88px;background:#2a2a2a;"></div>
<svg style="left:580px;top:236px;overflow:hidden" width="80" height="64" viewBox="0 0 80 64"><defs><linearGradient id="th0a" x1="0" y1="0" x2="1" y2="1"><stop offset="0" stop-color="#3a6ab8"/><stop offset="0.5" stop-color="#1c3a88"/><stop offset="1" stop-color="#142a70"/></linearGradient>
<filter id="th0f"><feGaussianBlur stdDeviation="1.2"/></filter><filter id="th0g"><feGaussianBlur stdDeviation="2.2"/></filter></defs><rect width="80" height="64" fill="url(#th0a)"/>
<g filter="url(#th0g)"><path d="M-4 26 Q20 6 48 -4" stroke="#d8f0ff" stroke-width="6" fill="none"/><path d="M-4 36 Q22 14 56 -2" stroke="#6a9ad8" stroke-width="8" fill="none" opacity="0.6"/></g>
<path d="M0 0 H38 Q18 4 0 16 Z" fill="#030303"/>
<g filter="url(#th0f)"><path d="M40 12 Q52 6 66 14 Q74 24 70 32 Q62 40 52 42 Q46 36 48 28 Q44 20 40 16 Z" fill="#4aa8a0" opacity="0.8"/>
<path d="M44 13 Q54 9 64 16 Q70 24 66 32 Q58 36 54 34 Q52 26 46 20 Z" fill="#9aa28a"/>
<path d="M46 64 Q58 50 80 44 V64 Z" fill="#c8d0c4"/><path d="M56 64 Q64 56 80 52 V64 Z" fill="#eef0ea"/>
<ellipse cx="76" cy="14" rx="5" ry="3" fill="#40a8b0" opacity="0.7"/><ellipse cx="76" cy="40" rx="5" ry="3" fill="#3a8ab8" opacity="0.6"/>
<path d="M8 40 Q24 32 40 36 M6 50 Q20 44 34 46" stroke="#8ab0e0" stroke-width="1.5" fill="none" opacity="0.5"/></g><rect x="0.5" y="0.5" width="79" height="63" fill="none" stroke="#e0e0e0" stroke-width="1"/></svg>
<div class="t" style="left:668px;top:232.8px;font-size:15px;color:#fff;font-weight:bold;letter-spacing:-0.1px;">caribiansea_slide.png</div>
<div class="t" style="left:668px;top:255.8px;font-size:12px;color:#e6e6e6;font-weight:normal;letter-spacing:-0.35px;">File Type: PNG Image</div>
<div class="t" style="left:668px;top:271.8px;font-size:12px;color:#e6e6e6;font-weight:normal;letter-spacing:-0.35px;">Date: 2020/8/5 11:38:52</div>
<div class="t" style="left:668px;top:287.8px;font-size:12px;color:#e6e6e6;font-weight:normal;letter-spacing:-0.35px;">Size: 5,936 KB</div>
<div class="t" style="left:838px;top:255.8px;font-size:12px;color:#e6e6e6;letter-spacing:-0.3px;">Resolution: 1280x1024</div>
<div class="a" style="left:574px;top:312px;width:381px;height:88px;background:#1f1f1f;"></div>
<svg style="left:580px;top:324px;overflow:hidden" width="80" height="64" viewBox="0 0 80 64"><defs><linearGradient id="th1" x1="0" y1="0" x2="0" y2="1"><stop offset="0" stop-color="#b8956c"/><stop offset="0.35" stop-color="#c49c70"/><stop offset="0.5" stop-color="#a98560"/><stop offset="1" stop-color="#8e6c4c"/></linearGradient></defs><rect width="80" height="64" fill="url(#th1)"/>
<path d="M0 22 Q40 14 80 26 L80 30 Q40 20 0 28 Z" fill="#d2b08a" opacity="0.5"/>
<g fill="#3a3028"><rect x="20" y="44" width="20" height="8"/><circle cx="22" cy="54" r="3"/><circle cx="30" cy="55" r="3"/><circle cx="38" cy="54" r="3"/><rect x="34" y="36" width="2" height="9"/><rect x="31" y="34" width="8" height="4"/></g>
<rect x="22" y="44" width="8" height="4" fill="#c8c0b0"/><rect x="0.5" y="0.5" width="79" height="63" fill="none" stroke="#e0e0e0" stroke-width="1"/></svg>
<div class="t" style="left:668px;top:320.8px;font-size:15px;color:#fff;font-weight:bold;letter-spacing:-0.1px;">curiosity_slide.png</div>
<div class="t" style="left:668px;top:343.8px;font-size:12px;color:#e6e6e6;font-weight:normal;letter-spacing:-0.35px;">File Type: PNG Image</div>
<div class="t" style="left:668px;top:359.8px;font-size:12px;color:#e6e6e6;font-weight:normal;letter-spacing:-0.35px;">Date: 2020/8/5 11:38:52</div>
<div class="t" style="left:668px;top:375.8px;font-size:12px;color:#e6e6e6;font-weight:normal;letter-spacing:-0.35px;">Size: 2,405 KB</div>
<div class="t" style="left:838px;top:343.8px;font-size:12px;color:#e6e6e6;letter-spacing:-0.3px;">Resolution: 1280x1024</div>
<div class="a" style="left:574px;top:400px;width:381px;height:88px;background:#2a2a2a;"></div>
<svg style="left:580px;top:416px;overflow:hidden" width="80" height="56" viewBox="0 0 80 56"><defs><radialGradient id="th2" cx="0.25" cy="-0.1" r="1.1"><stop offset="0" stop-color="#a89e88"/><stop offset="0.7" stop-color="#7e7a68"/><stop offset="0.86" stop-color="#4a6a80"/><stop offset="0.9" stop-color="#d4e4f4"/><stop offset="0.93" stop-color="#3c6ab0"/><stop offset="0.96" stop-color="#000"/></radialGradient></defs><rect width="80" height="56" fill="#000"/><rect width="80" height="56" fill="url(#th2)"/>
<path d="M10 20 Q30 14 50 22 M40 8 Q60 4 76 12 M14 34 Q30 30 44 36" stroke="#f0f0f0" stroke-width="3" fill="none" opacity="0.55"/></svg>
<div class="t" style="left:668px;top:408.8px;font-size:15px;color:#fff;font-weight:bold;letter-spacing:-0.1px;">earth.png</div>
<div class="t" style="left:668px;top:431.8px;font-size:12px;color:#e6e6e6;font-weight:normal;letter-spacing:-0.35px;">File Type: PNG Image</div>
<div class="t" style="left:668px;top:447.8px;font-size:12px;color:#e6e6e6;font-weight:normal;letter-spacing:-0.35px;">Date: 2020/8/5 11:38:52</div>
<div class="t" style="left:668px;top:463.8px;font-size:12px;color:#e6e6e6;font-weight:normal;letter-spacing:-0.35px;">Size: 3,747 KB</div>
<div class="t" style="left:838px;top:431.8px;font-size:12px;color:#e6e6e6;letter-spacing:-0.3px;">Resolution: 1920x1345</div>
<div class="a" style="left:574px;top:488px;width:381px;height:88px;background:#1f1f1f;"></div>
<svg style="left:580px;top:500px;overflow:hidden" width="80" height="64" viewBox="0 0 80 64"><defs><linearGradient id="th3" x1="0" y1="0" x2="1" y2="1"><stop offset="0" stop-color="#5a7a5a"/><stop offset="0.6" stop-color="#6a8070"/><stop offset="1" stop-color="#3a6aa0"/></linearGradient></defs><rect width="80" height="64" fill="url(#th3)"/>
<path d="M48 0 L80 0 L80 40 Q70 20 48 0 Z" fill="#020202"/>
<path d="M58 0 Q76 18 80 40" stroke="#5a8ad0" stroke-width="3" fill="none"/>
<g fill="#8a8478" opacity="0.85"><path d="M2 12 L24 4 L34 40 L12 50 Z"/><path d="M28 46 L52 36 L62 60 L38 64 Z"/></g>
<path d="M0 62 L80 20" stroke="#b8b4a8" stroke-width="7"/>
<g fill="#d8d4cc"><rect x="38" y="8" width="10" height="8" rx="3"/><rect x="50" y="16" width="12" height="9" rx="3"/><rect x="62" y="22" width="12" height="10" rx="4"/><rect x="26" y="26" width="10" height="10" rx="3"/></g>
<path d="M14 40 L30 50" stroke="#222" stroke-width="4"/><rect x="0.5" y="0.5" width="79" height="63" fill="none" stroke="#e0e0e0" stroke-width="1"/></svg>
<div class="t" style="left:668px;top:496.8px;font-size:15px;color:#fff;font-weight:bold;letter-spacing:-0.1px;">iss_slide.png</div>
<div class="t" style="left:668px;top:519.8px;font-size:12px;color:#e6e6e6;font-weight:normal;letter-spacing:-0.35px;">File Type: PNG Image</div>
<div class="t" style="left:668px;top:535.8px;font-size:12px;color:#e6e6e6;font-weight:normal;letter-spacing:-0.35px;">Date: 2020/8/5 11:38:52</div>
<div class="t" style="left:668px;top:551.8px;font-size:12px;color:#e6e6e6;font-weight:normal;letter-spacing:-0.35px;">Size: 5,498 KB</div>
<div class="t" style="left:838px;top:519.8px;font-size:12px;color:#e6e6e6;letter-spacing:-0.3px;">Resolution: 1280x1024</div>
<div class="a" style="left:574px;top:576px;width:381px;height:88px;background:#2a2a2a;"></div>
<svg style="left:580px;top:598px;overflow:hidden" width="80" height="45" viewBox="0 0 80 45"><defs><linearGradient id="th4" x1="0" y1="0" x2="0" y2="1"><stop offset="0" stop-color="#101418"/><stop offset="0.25" stop-color="#3a6aa8"/><stop offset="0.7" stop-color="#3c5c8c"/><stop offset="1" stop-color="#9ab0c8"/></linearGradient></defs><rect width="80" height="45" fill="url(#th4)"/>
<path d="M0 36 Q40 28 80 38 L80 45 L0 45 Z" fill="#c8d4e4" opacity="0.5"/>
<g fill="#151515"><path d="M20 0 L80 0 L80 18 Q60 6 40 14 L34 30 L22 40 L12 34 L10 20 Z"/><rect x="6" y="14" width="14" height="18" transform="rotate(-20 13 23)"/></g>
<path d="M4 30 L30 6" stroke="#555" stroke-width="2"/></svg>
<div class="t" style="left:668px;top:584.8px;font-size:15px;color:#fff;font-weight:bold;letter-spacing:-0.1px;">issnew.png</div>
<div class="t" style="left:668px;top:607.8px;font-size:12px;color:#e6e6e6;font-weight:normal;letter-spacing:-0.35px;">File Type: PNG Image</div>
<div class="t" style="left:668px;top:623.8px;font-size:12px;color:#e6e6e6;font-weight:normal;letter-spacing:-0.35px;">Date: 2020/8/5 11:38:52</div>
<div class="t" style="left:668px;top:639.8px;font-size:12px;color:#e6e6e6;font-weight:normal;letter-spacing:-0.35px;">Size: 2,333 KB</div>
<div class="t" style="left:838px;top:607.8px;font-size:12px;color:#e6e6e6;letter-spacing:-0.3px;">Resolution: 1920x1080</div>
<div class="a" style="left:574px;top:664px;width:381px;height:88px;background:#3a3d42;"></div>
<svg style="left:580px;top:686px;overflow:hidden" width="80" height="45" viewBox="0 0 80 45"><defs><linearGradient id="th5" x1="0" y1="0" x2="0" y2="1"><stop offset="0" stop-color="#d8a674"/><stop offset="0.3" stop-color="#c8b49a"/><stop offset="1" stop-color="#b4a690"/></linearGradient></defs><rect width="80" height="45" fill="#000"/>
<path d="M0 18 Q40 0 80 10 L80 45 L0 45 Z" fill="url(#th5)"/>
<path d="M30 22 L56 36 L74 44" stroke="#3c3226" stroke-width="3" fill="none"/>
<path d="M40 18 L62 30 L80 36" stroke="#4a3e30" stroke-width="2" fill="none"/>
<path d="M8 30 Q20 24 32 30" stroke="#f0e8d8" stroke-width="2" fill="none" opacity="0.7"/>
<rect x="4" y="3" width="14" height="1.5" fill="#ccc"/></svg>
<div class="t" style="left:668px;top:672.8px;font-size:15px;color:#fff;font-weight:bold;letter-spacing:-0.1px;">mars.png</div>
<div class="t" style="left:668px;top:695.8px;font-size:12px;color:#e6e6e6;font-weight:normal;letter-spacing:-0.35px;">File Type: PNG Image</div>
<div class="t" style="left:668px;top:711.8px;font-size:12px;color:#e6e6e6;font-weight:normal;letter-spacing:-0.35px;">Date: 2020/8/5 11:38:52</div>
<div class="t" style="left:668px;top:727.8px;font-size:12px;color:#e6e6e6;font-weight:normal;letter-spacing:-0.35px;">Size: 2,781 KB</div>
<div class="t" style="left:838px;top:695.8px;font-size:12px;color:#e6e6e6;letter-spacing:-0.3px;">Resolution: 1920x1080</div>
<div class="a" style="left:574px;top:752px;width:381px;height:88px;background:#2a2a2a;"></div>
<svg style="left:580px;top:774px;overflow:hidden" width="80" height="45" viewBox="0 0 80 45"><defs><linearGradient id="th6" x1="0" y1="0" x2="0" y2="1"><stop offset="0" stop-color="#a88058"/><stop offset="0.3" stop-color="#c09870"/><stop offset="0.55" stop-color="#a48260"/><stop offset="1" stop-color="#8c6a4a"/></linearGradient></defs><rect width="80" height="45" fill="url(#th6)"/>
<g fill="#3a3028"><rect x="46" y="28" width="18" height="7"/><circle cx="48" cy="37" r="2.5"/><circle cx="55" cy="38" r="2.5"/><circle cx="62" cy="37" r="2.5"/><rect x="58" y="20" width="2" height="9"/></g>
<rect x="48" y="28" width="7" height="4" fill="#c8c0b0"/>
<rect x="4" y="3" width="14" height="1.5" fill="#ddd"/></svg>
<div class="t" style="left:668px;top:760.8px;font-size:15px;color:#fff;font-weight:bold;letter-spacing:-0.1px;">mars_curiosity.png</div>
<div class="t" style="left:668px;top:783.8px;font-size:12px;color:#e6e6e6;font-weight:normal;letter-spacing:-0.35px;">File Type: PNG Image</div>
<div class="t" style="left:668px;top:799.8px;font-size:12px;color:#e6e6e6;font-weight:normal;letter-spacing:-0.35px;">Date: 2020/8/5 11:38:52</div>
<div class="t" style="left:668px;top:815.8px;font-size:12px;color:#e6e6e6;font-weight:normal;letter-spacing:-0.35px;">Size: 1,407 KB</div>
<div class="t" style="left:838px;top:783.8px;font-size:12px;color:#e6e6e6;letter-spacing:-0.3px;">Resolution: 1920x1080</div>
<div class="a" style="left:574px;top:840px;width:381px;height:88px;background:#1f1f1f;"></div>
<svg style="left:580px;top:862px;overflow:hidden" width="80" height="45" viewBox="0 0 80 45"><defs><radialGradient id="th7" cx="0.5" cy="0.5" r="0.6"><stop offset="0" stop-color="#2a6a70"/><stop offset="0.6" stop-color="#1c4a50"/><stop offset="1" stop-color="#0a1c20"/></radialGradient></defs><rect width="80" height="45" fill="url(#th7)"/>
<g fill="none" stroke="#6ab4b8" stroke-width="0.8" opacity="0.6"><ellipse cx="40" cy="22" rx="10" ry="6"/><ellipse cx="40" cy="22" rx="20" ry="11"/><ellipse cx="40" cy="23" rx="32" ry="17"/><ellipse cx="40" cy="23" rx="44" ry="24"/></g>
<circle cx="40" cy="22" r="2" fill="#fff8d0"/>
<rect x="56" y="40" width="20" height="1.5" fill="#ccc"/></svg>
<div class="t" style="left:668px;top:848.8px;font-size:15px;color:#fff;font-weight:bold;letter-spacing:-0.1px;">miniplanets.png</div>
<div class="t" style="left:668px;top:871.8px;font-size:12px;color:#e6e6e6;font-weight:normal;letter-spacing:-0.35px;">File Type: PNG Image</div>
<div class="t" style="left:668px;top:887.8px;font-size:12px;color:#e6e6e6;font-weight:normal;letter-spacing:-0.35px;">Date: 2020/8/5 11:38:52</div>
<div class="t" style="left:668px;top:903.8px;font-size:12px;color:#e6e6e6;font-weight:normal;letter-spacing:-0.35px;">Size: 3,616 KB</div>
<div class="t" style="left:838px;top:871.8px;font-size:12px;color:#e6e6e6;letter-spacing:-0.3px;">Resolution: 1920x1080</div>
<div class="a" style="left:574px;top:928px;width:381px;height:88px;background:#2a2a2a;"></div>
<svg style="left:580px;top:944px;overflow:hidden" width="80" height="56" viewBox="0 0 80 56"><defs><filter id="th8f" x="-50%" y="-50%" width="200%" height="200%"><feGaussianBlur stdDeviation="3"/></filter><filter id="th8g" x="-50%" y="-50%" width="200%" height="200%"><feGaussianBlur stdDeviation="6"/></filter></defs><rect width="80" height="56" fill="#080806"/>
<g filter="url(#th8g)"><path d="M-6 56 L-6 48 Q30 18 76 -4 L90 -4 L90 30 Q60 50 40 62 Z" fill="#8a8270"/></g>
<g filter="url(#th8f)"><path d="M-4 52 Q30 24 72 2 L80 12 Q40 34 6 60 Z" fill="#e0d0b0"/>
<ellipse cx="40" cy="22" rx="17" ry="7" transform="rotate(-30 40 22)" fill="#ffffff"/></g>
<path d="M70 56 L82 40 V56 Z" fill="#080806" opacity="0.6" filter="url(#th8f)"/>
<rect x="52" y="52" width="24" height="1.2" fill="#bbb"/></svg>
<div class="t" style="left:668px;top:936.8px;font-size:15px;color:#fff;font-weight:bold;letter-spacing:-0.1px;">ourgalaxy.png</div>
<div class="t" style="left:668px;top:959.8px;font-size:12px;color:#e6e6e6;font-weight:normal;letter-spacing:-0.35px;">File Type: PNG Image</div>
<div class="t" style="left:668px;top:975.8px;font-size:12px;color:#e6e6e6;font-weight:normal;letter-spacing:-0.35px;">Date: 2020/8/5 11:38:52</div>
<div class="t" style="left:668px;top:991.8px;font-size:12px;color:#e6e6e6;font-weight:normal;letter-spacing:-0.35px;">Size: 1,957 KB</div>
<div class="t" style="left:838px;top:959.8px;font-size:12px;color:#e6e6e6;letter-spacing:-0.3px;">Resolution: 1920x1346</div>
<div class="a" style="left:578px;top:1127px;width:32px;height:24px;background:#333;"></div>
<svg style="left:586px;top:1131px" width="16" height="16"><path d="M8 1.5 V14.5 M1.5 8 H14.5" stroke="#fff" stroke-width="2"/></svg>
<div class="a" style="left:616px;top:1127px;width:32px;height:24px;background:#333;"></div>
<svg style="left:625px;top:1131px" width="14" height="16"><path d="M1.5 3.5 H12.5 M5 3 V1.5 H9 V3" stroke="#fff" stroke-width="1.4" fill="none"/><path d="M2.5 5 H11.5 V14.5 H2.5 Z" fill="#fff"/><path d="M5.5 7 V13 M7.5 7 V13 M9.5 7 V13" stroke="#2a2a2a" stroke-width="0.9"/></svg>
<div class="a" style="left:918px;top:1127px;width:32px;height:24px;background:#333;"></div>
<svg style="left:927px;top:1132px" width="14" height="14"><path d="M1.5 1 L13 7 L1.5 13 Z" fill="#fff"/></svg>
<div class="a" style="left:960px;top:0px;width:960px;height:1159px;background:#2a2a2a;"></div>
<div class="a" style="left:961px;top:1px;width:958px;height:30px;background:#fff;"></div>
<div class="a" style="left:961px;top:31px;width:958px;height:21px;background:#242424;"></div>
<div class="a" style="left:961px;top:52px;width:959px;height:1107px;background:#000;"></div>
<svg style="left:969px;top:7px" width="16" height="16" viewBox="0 0 16 16">
<rect x="0" y="0" width="16" height="16" rx="3.5" fill="#000"/>
<path d="M5.5 2.6 Q10 1.6 13 4.5 Q14.2 6.5 13.8 8.5" stroke="#cc1400" stroke-width="1.5" fill="none"/>
<path d="M2.8 5.5 Q2 10 5 12.5 Q6.5 13.6 8 13.6" stroke="#c81000" stroke-width="1.5" fill="none"/>
<path d="M1.8 1.8 L6.5 3 L8.8 7.2 L5.5 5.8 L3 7.8 Z" fill="#e8a000"/><circle cx="4.3" cy="4.3" r="2" fill="#e0c000"/>
<path d="M3 8 Q3.5 5 6 4" stroke="#f08000" stroke-width="1.2" fill="none"/>
<circle cx="11.5" cy="11.5" r="2.5" fill="#f4f4f4"/><circle cx="11.5" cy="11.5" r="0.8" fill="#222"/>
<path d="M9.2 11.5 H13.8 M11.5 9.2 V13.8" stroke="#444" stroke-width="0.5"/></svg>
<div class="t" style="left:990.5px;top:10.3px;font-size:12px;color:#8a8a8a;font-weight:normal;letter-spacing:-0.08px;">Projection Window : Alt+Enter to Full Screen</div>
<svg style="left:1790px;top:0" width="129" height="31"><rect x="10" y="15" width="10" height="1" fill="#777"/><rect x="55.5" y="10.5" width="9" height="9" fill="none" stroke="#777" stroke-width="1"/><path d="M101 10 L111 20 M111 10 L101 20" stroke="#777" stroke-width="1"/></svg>
<div class="t" style="left:969px;top:35.8px;font-size:12px;color:#e8e8e8;font-weight:normal;letter-spacing:-0.1px;">View</div>
<svg style="left:0;top:0" width="1920" height="1159" viewBox="0 0 1920 1159">
<defs>
<clipPath id="rclip"><rect x="961" y="52" width="959" height="837"/></clipPath>
<clipPath id="rimg"><path d="M1302.8,299.8 L1310.1,294.2 L1317.5,288.7 L1324.9,283.4 L1332.4,278.2 L1340.0,273.1 L1347.6,268.1 L1355.3,263.3 L1363.0,258.6 L1370.8,254.1 L1378.6,249.7 L1386.6,245.4 L1394.5,241.3 L1402.5,237.3 L1410.6,233.5 L1418.7,229.8 L1426.8,226.3 L1435.0,222.9 L1443.2,219.7 L1451.5,216.7 L1459.8,213.8 L1468.1,211.1 L1476.5,208.6 L1484.9,206.2 L1493.3,204.0 L1501.7,202.0 L1510.1,200.2 L1518.6,198.6 L1527.1,197.2 L1535.5,195.9 L1544.0,194.9 L1552.5,194.0 L1561.0,193.4 L1569.5,192.9 L1577.9,192.7 L1586.4,192.7 L1594.8,192.9 L1603.2,193.4 L1611.6,194.0 L1619.9,194.9 L1628.2,196.0 L1636.5,197.4 L1644.7,199.0 L1652.9,200.8 L1661.0,202.9 L1669.1,205.3 L1677.1,207.9 L1685.0,210.7 L1692.8,213.8 L1700.5,217.2 L1708.2,220.9 L1715.7,224.8 L1723.2,229.0 L1730.5,233.5 L1737.7,238.2 L1744.8,243.2 L1751.7,248.6 L1758.5,254.2 L1765.2,260.1 L1771.7,266.3 L1778.0,272.7 L1778.0,272.7 L1784.3,281.2 L1790.3,289.9 L1796.1,298.7 L1801.7,307.6 L1807.0,316.8 L1812.1,326.0 L1817.0,335.4 L1821.6,345.0 L1825.9,354.6 L1830.0,364.4 L1833.9,374.3 L1837.5,384.3 L1840.9,394.4 L1844.1,404.6 L1847.0,414.9 L1849.6,425.2 L1852.0,435.7 L1854.2,446.2 L1856.1,456.8 L1857.8,467.5 L1859.3,478.2 L1860.5,488.9 L1861.5,499.7 L1862.2,510.6 L1862.7,521.4 L1863.0,532.3 L1863.0,543.3 L1862.8,554.2 L1862.4,565.2 L1862.4,565.2 L1857.3,561.1 L1851.8,557.1 L1846.2,553.3 L1840.3,549.7 L1834.1,546.2 L1827.7,542.9 L1821.2,539.6 L1814.4,536.5 L1807.5,533.6 L1800.4,530.7 L1793.2,528.0 L1785.8,525.3 L1778.3,522.8 L1770.6,520.3 L1762.9,518.0 L1755.0,515.7 L1747.0,513.6 L1738.9,511.5 L1730.7,509.5 L1722.4,507.5 L1714.0,505.7 L1705.6,503.9 L1697.0,502.3 L1688.4,500.6 L1679.7,499.1 L1670.9,497.6 L1662.1,496.2 L1653.2,494.9 L1644.2,493.6 L1635.2,492.4 L1626.0,491.2 L1616.9,490.1 L1607.7,489.1 L1598.4,488.1 L1589.0,487.2 L1579.6,486.4 L1570.2,485.6 L1560.7,484.9 L1551.1,484.3 L1541.5,483.7 L1531.8,483.1 L1522.0,482.7 L1512.2,482.3 L1502.4,481.9 L1492.5,481.6 L1482.5,481.4 L1472.5,481.3 L1462.4,481.2 L1452.2,481.2 L1442.0,481.3 L1431.7,481.4 L1421.3,481.6 L1410.9,481.9 L1400.4,482.3 L1389.8,482.7 L1379.2,483.3 L1368.5,483.9 L1357.7,484.6 L1346.8,485.5 L1335.8,486.4 L1335.8,486.4 L1335.3,479.5 L1334.8,472.5 L1334.2,465.6 L1333.6,458.8 L1333.0,451.9 L1332.3,445.1 L1331.5,438.3 L1330.7,431.6 L1329.9,424.9 L1329.0,418.2 L1328.1,411.5 L1327.1,404.9 L1326.1,398.4 L1325.0,391.8 L1323.9,385.3 L1322.7,378.9 L1321.5,372.5 L1320.2,366.1 L1318.9,359.8 L1317.5,353.6 L1316.1,347.4 L1314.6,341.2 L1313.1,335.1 L1311.5,329.1 L1309.9,323.1 L1308.2,317.2 L1306.5,311.3 L1304.7,305.5 L1302.8,299.8Z"/></clipPath>
<filter id="rnoise" x="0%" y="0%" width="100%" height="100%">
<feTurbulence type="fractalNoise" baseFrequency="0.06 0.03" numOctaves="3" seed="11"/>
<feColorMatrix type="matrix" values="0 0 0 0 0.25  0 0 0 0 0.2  0 0 0 0 0.15  1.6 0 0 0 -0.75"/>
</filter>
<filter id="blur1"><feGaussianBlur stdDeviation="1.6"/></filter>
<filter id="relief" x="0%" y="0%" width="100%" height="100%">
<feTurbulence type="fractalNoise" baseFrequency="0.022 0.035" numOctaves="5" seed="4" result="t"/>
<feDiffuseLighting in="t" surfaceScale="6" diffuseConstant="1.15" lighting-color="#ffffff" result="l"><feDistantLight azimuth="200" elevation="48"/></feDiffuseLighting>
<feColorMatrix in="l" type="matrix" values="1 0 0 0 0  0 1 0 0 0  0 1 0 0 0  0 0 0 0 1"/>
</filter>
<filter id="rough" x="-10%" y="-10%" width="120%" height="120%">
<feTurbulence type="fractalNoise" baseFrequency="0.15" numOctaves="2" seed="9" result="n"/>
<feDisplacementMap in="SourceGraphic" in2="n" scale="9" xChannelSelector="R" yChannelSelector="G" result="d"/>
<feGaussianBlur in="d" stdDeviation="1.1"/>
</filter>
<filter id="blur2"><feGaussianBlur stdDeviation="3"/></filter>
<filter id="blur5"><feGaussianBlur stdDeviation="6"/></filter>
</defs>
<g clip-path="url(#rclip)">
<g clip-path="url(#rimg)">
<path d="M1302.8,299.8 L1321.2,286.0 L1325.4,297.0 L1306.1,310.2Z" fill="#edba82" stroke="#edba82" stroke-width="1.5"/><path d="M1306.1,310.2 L1325.4,297.0 L1329.3,308.1 L1309.3,320.9Z" fill="#e8ba87" stroke="#e8ba87" stroke-width="1.5"/><path d="M1309.3,320.9 L1329.3,308.1 L1333.1,319.5 L1312.2,331.7Z" fill="#e3ba8c" stroke="#e3ba8c" stroke-width="1.5"/><path d="M1312.2,331.7 L1333.1,319.5 L1336.6,331.2 L1315.0,342.7Z" fill="#deba91" stroke="#deba91" stroke-width="1.5"/><path d="M1315.0,342.7 L1336.6,331.2 L1339.9,343.0 L1317.6,354.0Z" fill="#dabb97" stroke="#dabb97" stroke-width="1.5"/><path d="M1317.6,354.0 L1339.9,343.0 L1343.1,355.1 L1320.1,365.3Z" fill="#d5bc9c" stroke="#d5bc9c" stroke-width="1.5"/><path d="M1320.1,365.3 L1343.1,355.1 L1346.0,367.3 L1322.3,376.9Z" fill="#d1bda2" stroke="#d1bda2" stroke-width="1.5"/><path d="M1322.3,376.9 L1346.0,367.3 L1348.7,379.8 L1324.4,388.6Z" fill="#cdbda5" stroke="#cdbda5" stroke-width="1.5"/><path d="M1324.4,388.6 L1348.7,379.8 L1351.1,392.4 L1326.4,400.4Z" fill="#cbbca5" stroke="#cbbca5" stroke-width="1.5"/><path d="M1326.4,400.4 L1351.1,392.4 L1353.4,405.1 L1328.2,412.4Z" fill="#cabba4" stroke="#cabba4" stroke-width="1.5"/><path d="M1328.2,412.4 L1353.4,405.1 L1355.5,418.0 L1329.8,424.5Z" fill="#c8baa4" stroke="#c8baa4" stroke-width="1.5"/><path d="M1329.8,424.5 L1355.5,418.0 L1357.4,431.0 L1331.3,436.7Z" fill="#c7b9a4" stroke="#c7b9a4" stroke-width="1.5"/><path d="M1331.3,436.7 L1357.4,431.0 L1359.1,444.2 L1332.7,449.0Z" fill="#c5b7a3" stroke="#c5b7a3" stroke-width="1.5"/><path d="M1332.7,449.0 L1359.1,444.2 L1360.6,457.4 L1333.9,461.4Z" fill="#c3b6a3" stroke="#c3b6a3" stroke-width="1.5"/><path d="M1333.9,461.4 L1360.6,457.4 L1361.9,470.8 L1334.9,473.8Z" fill="#c2b5a2" stroke="#c2b5a2" stroke-width="1.5"/><path d="M1334.9,473.8 L1361.9,470.8 L1363.1,484.3 L1335.8,486.4Z" fill="#c0b4a2" stroke="#c0b4a2" stroke-width="1.5"/><path d="M1321.2,286.0 L1340.0,273.1 L1345.0,284.5 L1325.4,297.0Z" fill="#edba82" stroke="#edba82" stroke-width="1.5"/><path d="M1325.4,297.0 L1345.0,284.5 L1349.7,296.1 L1329.3,308.1Z" fill="#e8ba87" stroke="#e8ba87" stroke-width="1.5"/><path d="M1329.3,308.1 L1349.7,296.1 L1354.2,308.1 L1333.1,319.5Z" fill="#e3ba8c" stroke="#e3ba8c" stroke-width="1.5"/><path d="M1333.1,319.5 L1354.2,308.1 L1358.5,320.3 L1336.6,331.2Z" fill="#deba91" stroke="#deba91" stroke-width="1.5"/><path d="M1336.6,331.2 L1358.5,320.3 L1362.5,332.8 L1339.9,343.0Z" fill="#dabb97" stroke="#dabb97" stroke-width="1.5"/><path d="M1339.9,343.0 L1362.5,332.8 L1366.2,345.6 L1343.1,355.1Z" fill="#d5bc9c" stroke="#d5bc9c" stroke-width="1.5"/><path d="M1343.1,355.1 L1366.2,345.6 L1369.6,358.5 L1346.0,367.3Z" fill="#d1bda2" stroke="#d1bda2" stroke-width="1.5"/><path d="M1346.0,367.3 L1369.6,358.5 L1372.9,371.7 L1348.7,379.8Z" fill="#cdbda5" stroke="#cdbda5" stroke-width="1.5"/><path d="M1348.7,379.8 L1372.9,371.7 L1375.8,385.0 L1351.1,392.4Z" fill="#cbbca5" stroke="#cbbca5" stroke-width="1.5"/><path d="M1351.1,392.4 L1375.8,385.0 L1378.5,398.5 L1353.4,405.1Z" fill="#cabba4" stroke="#cabba4" stroke-width="1.5"/><path d="M1353.4,405.1 L1378.5,398.5 L1381.0,412.2 L1355.5,418.0Z" fill="#c8baa4" stroke="#c8baa4" stroke-width="1.5"/><path d="M1355.5,418.0 L1381.0,412.2 L1383.2,426.1 L1357.4,431.0Z" fill="#c7b9a4" stroke="#c7b9a4" stroke-width="1.5"/><path d="M1357.4,431.0 L1383.2,426.1 L1385.2,440.1 L1359.1,444.2Z" fill="#c5b7a3" stroke="#c5b7a3" stroke-width="1.5"/><path d="M1359.1,444.2 L1385.2,440.1 L1387.0,454.2 L1360.6,457.4Z" fill="#c3b6a3" stroke="#c3b6a3" stroke-width="1.5"/><path d="M1360.6,457.4 L1387.0,454.2 L1388.5,468.4 L1361.9,470.8Z" fill="#c2b5a2" stroke="#c2b5a2" stroke-width="1.5"/><path d="M1361.9,470.8 L1388.5,468.4 L1389.8,482.7 L1363.1,484.3Z" fill="#c0b4a2" stroke="#c0b4a2" stroke-width="1.5"/><path d="M1340.0,273.1 L1359.1,261.0 L1364.9,272.8 L1345.0,284.5Z" fill="#edba82" stroke="#edba82" stroke-width="1.5"/><path d="M1345.0,284.5 L1364.9,272.8 L1370.5,284.9 L1349.7,296.1Z" fill="#e8ba87" stroke="#e8ba87" stroke-width="1.5"/><path d="M1349.7,296.1 L1370.5,284.9 L1375.6,297.5 L1354.2,308.1Z" fill="#e3ba8c" stroke="#e3ba8c" stroke-width="1.5"/><path d="M1354.2,308.1 L1375.6,297.5 L1380.5,310.3 L1358.5,320.3Z" fill="#deba91" stroke="#deba91" stroke-width="1.5"/><path d="M1358.5,320.3 L1380.5,310.3 L1385.1,323.4 L1362.5,332.8Z" fill="#dabb97" stroke="#dabb97" stroke-width="1.5"/><path d="M1362.5,332.8 L1385.1,323.4 L1389.4,336.8 L1366.2,345.6Z" fill="#d5bc9c" stroke="#d5bc9c" stroke-width="1.5"/><path d="M1366.2,345.6 L1389.4,336.8 L1393.4,350.4 L1369.6,358.5Z" fill="#d1bda2" stroke="#d1bda2" stroke-width="1.5"/><path d="M1369.6,358.5 L1393.4,350.4 L1397.0,364.3 L1372.9,371.7Z" fill="#cdbda5" stroke="#cdbda5" stroke-width="1.5"/><path d="M1372.9,371.7 L1397.0,364.3 L1400.4,378.4 L1375.8,385.0Z" fill="#cbbca5" stroke="#cbbca5" stroke-width="1.5"/><path d="M1375.8,385.0 L1400.4,378.4 L1403.5,392.6 L1378.5,398.5Z" fill="#cabba4" stroke="#cabba4" stroke-width="1.5"/><path d="M1378.5,398.5 L1403.5,392.6 L1406.3,407.1 L1381.0,412.2Z" fill="#c8baa4" stroke="#c8baa4" stroke-width="1.5"/><path d="M1381.0,412.2 L1406.3,407.1 L1408.8,421.8 L1383.2,426.1Z" fill="#c7b9a4" stroke="#c7b9a4" stroke-width="1.5"/><path d="M1383.2,426.1 L1408.8,421.8 L1411.1,436.5 L1385.2,440.1Z" fill="#c5b7a3" stroke="#c5b7a3" stroke-width="1.5"/><path d="M1385.2,440.1 L1411.1,436.5 L1413.0,451.5 L1387.0,454.2Z" fill="#c3b6a3" stroke="#c3b6a3" stroke-width="1.5"/><path d="M1387.0,454.2 L1413.0,451.5 L1414.7,466.6 L1388.5,468.4Z" fill="#c2b5a2" stroke="#c2b5a2" stroke-width="1.5"/><path d="M1388.5,468.4 L1414.7,466.6 L1416.1,481.7 L1389.8,482.7Z" fill="#c0b4a2" stroke="#c0b4a2" stroke-width="1.5"/><path d="M1359.1,261.0 L1378.6,249.7 L1385.2,261.9 L1364.9,272.8Z" fill="#edba82" stroke="#edba82" stroke-width="1.5"/><path d="M1364.9,272.8 L1385.2,261.9 L1391.4,274.6 L1370.5,284.9Z" fill="#e8ba87" stroke="#e8ba87" stroke-width="1.5"/><path d="M1370.5,284.9 L1391.4,274.6 L1397.3,287.6 L1375.6,297.5Z" fill="#e3ba8c" stroke="#e3ba8c" stroke-width="1.5"/><path d="M1375.6,297.5 L1397.3,287.6 L1402.8,301.0 L1380.5,310.3Z" fill="#deba91" stroke="#deba91" stroke-width="1.5"/><path d="M1380.5,310.3 L1402.8,301.0 L1407.9,314.7 L1385.1,323.4Z" fill="#dabb97" stroke="#dabb97" stroke-width="1.5"/><path d="M1385.1,323.4 L1407.9,314.7 L1412.7,328.7 L1389.4,336.8Z" fill="#d5bc9c" stroke="#d5bc9c" stroke-width="1.5"/><path d="M1389.4,336.8 L1412.7,328.7 L1417.1,343.0 L1393.4,350.4Z" fill="#d1bda2" stroke="#d1bda2" stroke-width="1.5"/><path d="M1393.4,350.4 L1417.1,343.0 L1421.2,357.6 L1397.0,364.3Z" fill="#cdbda5" stroke="#cdbda5" stroke-width="1.5"/><path d="M1397.0,364.3 L1421.2,357.6 L1425.0,372.4 L1400.4,378.4Z" fill="#cbbca5" stroke="#cbbca5" stroke-width="1.5"/><path d="M1400.4,378.4 L1425.0,372.4 L1428.4,387.4 L1403.5,392.6Z" fill="#cabba4" stroke="#cabba4" stroke-width="1.5"/><path d="M1403.5,392.6 L1428.4,387.4 L1431.5,402.6 L1406.3,407.1Z" fill="#c8baa4" stroke="#c8baa4" stroke-width="1.5"/><path d="M1406.3,407.1 L1431.5,402.6 L1434.2,418.1 L1408.8,421.8Z" fill="#c7b9a4" stroke="#c7b9a4" stroke-width="1.5"/><path d="M1408.8,421.8 L1434.2,418.1 L1436.6,433.6 L1411.1,436.5Z" fill="#c5b7a3" stroke="#c5b7a3" stroke-width="1.5"/><path d="M1411.1,436.5 L1436.6,433.6 L1438.7,449.4 L1413.0,451.5Z" fill="#c3b6a3" stroke="#c3b6a3" stroke-width="1.5"/><path d="M1413.0,451.5 L1438.7,449.4 L1440.5,465.3 L1414.7,466.6Z" fill="#c2b5a2" stroke="#c2b5a2" stroke-width="1.5"/><path d="M1414.7,466.6 L1440.5,465.3 L1442.0,481.3 L1416.1,481.7Z" fill="#c0b4a2" stroke="#c0b4a2" stroke-width="1.5"/><path d="M1378.6,249.7 L1398.5,239.3 L1405.8,252.0 L1385.2,261.9Z" fill="#edba82" stroke="#edba82" stroke-width="1.5"/><path d="M1385.2,261.9 L1405.8,252.0 L1412.7,265.1 L1391.4,274.6Z" fill="#e8ba87" stroke="#e8ba87" stroke-width="1.5"/><path d="M1391.4,274.6 L1412.7,265.1 L1419.1,278.6 L1397.3,287.6Z" fill="#e3ba8c" stroke="#e3ba8c" stroke-width="1.5"/><path d="M1397.3,287.6 L1419.1,278.6 L1425.2,292.5 L1402.8,301.0Z" fill="#deba91" stroke="#deba91" stroke-width="1.5"/><path d="M1402.8,301.0 L1425.2,292.5 L1430.8,306.8 L1407.9,314.7Z" fill="#dabb97" stroke="#dabb97" stroke-width="1.5"/><path d="M1407.9,314.7 L1430.8,306.8 L1436.0,321.5 L1412.7,328.7Z" fill="#d5bc9c" stroke="#d5bc9c" stroke-width="1.5"/><path d="M1412.7,328.7 L1436.0,321.5 L1440.9,336.4 L1417.1,343.0Z" fill="#d1bda2" stroke="#d1bda2" stroke-width="1.5"/><path d="M1417.1,343.0 L1440.9,336.4 L1445.4,351.6 L1421.2,357.6Z" fill="#cdbda5" stroke="#cdbda5" stroke-width="1.5"/><path d="M1421.2,357.6 L1445.4,351.6 L1449.4,367.1 L1425.0,372.4Z" fill="#cbbca5" stroke="#cbbca5" stroke-width="1.5"/><path d="M1425.0,372.4 L1449.4,367.1 L1453.1,382.9 L1428.4,387.4Z" fill="#cabba4" stroke="#cabba4" stroke-width="1.5"/><path d="M1428.4,387.4 L1453.1,382.9 L1456.4,398.8 L1431.5,402.6Z" fill="#c8baa4" stroke="#c8baa4" stroke-width="1.5"/><path d="M1431.5,402.6 L1456.4,398.8 L1459.4,415.0 L1434.2,418.1Z" fill="#c7b9a4" stroke="#c7b9a4" stroke-width="1.5"/><path d="M1434.2,418.1 L1459.4,415.0 L1461.9,431.3 L1436.6,433.6Z" fill="#c5b7a3" stroke="#c5b7a3" stroke-width="1.5"/><path d="M1436.6,433.6 L1461.9,431.3 L1464.1,447.8 L1438.7,449.4Z" fill="#c3b6a3" stroke="#c3b6a3" stroke-width="1.5"/><path d="M1438.7,449.4 L1464.1,447.8 L1465.9,464.4 L1440.5,465.3Z" fill="#c2b5a2" stroke="#c2b5a2" stroke-width="1.5"/><path d="M1440.5,465.3 L1465.9,464.4 L1467.4,481.2 L1442.0,481.3Z" fill="#c0b4a2" stroke="#c0b4a2" stroke-width="1.5"/><path d="M1398.5,239.3 L1418.7,229.8 L1426.6,242.9 L1405.8,252.0Z" fill="#edba82" stroke="#edba82" stroke-width="1.5"/><path d="M1405.8,252.0 L1426.6,242.9 L1434.1,256.4 L1412.7,265.1Z" fill="#e8ba87" stroke="#e8ba87" stroke-width="1.5"/><path d="M1412.7,265.1 L1434.1,256.4 L1441.1,270.5 L1419.1,278.6Z" fill="#e3ba8c" stroke="#e3ba8c" stroke-width="1.5"/><path d="M1419.1,278.6 L1441.1,270.5 L1447.7,284.9 L1425.2,292.5Z" fill="#deba91" stroke="#deba91" stroke-width="1.5"/><path d="M1425.2,292.5 L1447.7,284.9 L1453.8,299.8 L1430.8,306.8Z" fill="#dabb97" stroke="#dabb97" stroke-width="1.5"/><path d="M1430.8,306.8 L1453.8,299.8 L1459.4,315.0 L1436.0,321.5Z" fill="#d5bc9c" stroke="#d5bc9c" stroke-width="1.5"/><path d="M1436.0,321.5 L1459.4,315.0 L1464.7,330.5 L1440.9,336.4Z" fill="#d1bda2" stroke="#d1bda2" stroke-width="1.5"/><path d="M1440.9,336.4 L1464.7,330.5 L1469.4,346.4 L1445.4,351.6Z" fill="#cdbda5" stroke="#cdbda5" stroke-width="1.5"/><path d="M1445.4,351.6 L1469.4,346.4 L1473.8,362.6 L1449.4,367.1Z" fill="#cbbca5" stroke="#cbbca5" stroke-width="1.5"/><path d="M1449.4,367.1 L1473.8,362.6 L1477.7,379.0 L1453.1,382.9Z" fill="#cabba4" stroke="#cabba4" stroke-width="1.5"/><path d="M1453.1,382.9 L1477.7,379.0 L1481.2,395.6 L1456.4,398.8Z" fill="#c8baa4" stroke="#c8baa4" stroke-width="1.5"/><path d="M1456.4,398.8 L1481.2,395.6 L1484.3,412.5 L1459.4,415.0Z" fill="#c7b9a4" stroke="#c7b9a4" stroke-width="1.5"/><path d="M1459.4,415.0 L1484.3,412.5 L1486.9,429.5 L1461.9,431.3Z" fill="#c5b7a3" stroke="#c5b7a3" stroke-width="1.5"/><path d="M1461.9,431.3 L1486.9,429.5 L1489.2,446.7 L1464.1,447.8Z" fill="#c3b6a3" stroke="#c3b6a3" stroke-width="1.5"/><path d="M1464.1,447.8 L1489.2,446.7 L1491.0,464.1 L1465.9,464.4Z" fill="#c2b5a2" stroke="#c2b5a2" stroke-width="1.5"/><path d="M1465.9,464.4 L1491.0,464.1 L1492.5,481.6 L1467.4,481.2Z" fill="#c0b4a2" stroke="#c0b4a2" stroke-width="1.5"/><path d="M1418.7,229.8 L1439.1,221.3 L1447.7,234.8 L1426.6,242.9Z" fill="#edba82" stroke="#edba82" stroke-width="1.5"/><path d="M1426.6,242.9 L1447.7,234.8 L1455.7,248.7 L1434.1,256.4Z" fill="#e8ba87" stroke="#e8ba87" stroke-width="1.5"/><path d="M1434.1,256.4 L1455.7,248.7 L1463.2,263.2 L1441.1,270.5Z" fill="#e3ba8c" stroke="#e3ba8c" stroke-width="1.5"/><path d="M1441.1,270.5 L1463.2,263.2 L1470.3,278.2 L1447.7,284.9Z" fill="#deba91" stroke="#deba91" stroke-width="1.5"/><path d="M1447.7,284.9 L1470.3,278.2 L1476.8,293.6 L1453.8,299.8Z" fill="#dabb97" stroke="#dabb97" stroke-width="1.5"/><path d="M1453.8,299.8 L1476.8,293.6 L1482.8,309.3 L1459.4,315.0Z" fill="#d5bc9c" stroke="#d5bc9c" stroke-width="1.5"/><path d="M1459.4,315.0 L1482.8,309.3 L1488.4,325.5 L1464.7,330.5Z" fill="#d1bda2" stroke="#d1bda2" stroke-width="1.5"/><path d="M1464.7,330.5 L1488.4,325.5 L1493.5,341.9 L1469.4,346.4Z" fill="#cdbda5" stroke="#cdbda5" stroke-width="1.5"/><path d="M1469.4,346.4 L1493.5,341.9 L1498.0,358.7 L1473.8,362.6Z" fill="#cbbca5" stroke="#cbbca5" stroke-width="1.5"/><path d="M1473.8,362.6 L1498.0,358.7 L1502.2,375.7 L1477.7,379.0Z" fill="#cabba4" stroke="#cabba4" stroke-width="1.5"/><path d="M1477.7,379.0 L1502.2,375.7 L1505.8,393.0 L1481.2,395.6Z" fill="#c8baa4" stroke="#c8baa4" stroke-width="1.5"/><path d="M1481.2,395.6 L1505.8,393.0 L1509.0,410.6 L1484.3,412.5Z" fill="#c7b9a4" stroke="#c7b9a4" stroke-width="1.5"/><path d="M1484.3,412.5 L1509.0,410.6 L1511.7,428.3 L1486.9,429.5Z" fill="#c5b7a3" stroke="#c5b7a3" stroke-width="1.5"/><path d="M1486.9,429.5 L1511.7,428.3 L1514.0,446.2 L1489.2,446.7Z" fill="#c3b6a3" stroke="#c3b6a3" stroke-width="1.5"/><path d="M1489.2,446.7 L1514.0,446.2 L1515.8,464.2 L1491.0,464.1Z" fill="#c2b5a2" stroke="#c2b5a2" stroke-width="1.5"/><path d="M1491.0,464.1 L1515.8,464.2 L1517.1,482.4 L1492.5,481.6Z" fill="#c0b4a2" stroke="#c0b4a2" stroke-width="1.5"/><path d="M1439.1,221.3 L1459.8,213.8 L1468.9,227.6 L1447.7,234.8Z" fill="#edba82" stroke="#edba82" stroke-width="1.5"/><path d="M1447.7,234.8 L1468.9,227.6 L1477.5,242.0 L1455.7,248.7Z" fill="#e8ba87" stroke="#e8ba87" stroke-width="1.5"/><path d="M1455.7,248.7 L1477.5,242.0 L1485.5,256.9 L1463.2,263.2Z" fill="#e3ba8c" stroke="#e3ba8c" stroke-width="1.5"/><path d="M1463.2,263.2 L1485.5,256.9 L1492.9,272.3 L1470.3,278.2Z" fill="#deba91" stroke="#deba91" stroke-width="1.5"/><path d="M1470.3,278.2 L1492.9,272.3 L1499.9,288.2 L1476.8,293.6Z" fill="#dabb97" stroke="#dabb97" stroke-width="1.5"/><path d="M1476.8,293.6 L1499.9,288.2 L1506.2,304.5 L1482.8,309.3Z" fill="#d5bc9c" stroke="#d5bc9c" stroke-width="1.5"/><path d="M1482.8,309.3 L1506.2,304.5 L1512.1,321.2 L1488.4,325.5Z" fill="#d1bda2" stroke="#d1bda2" stroke-width="1.5"/><path d="M1488.4,325.5 L1512.1,321.2 L1517.4,338.2 L1493.5,341.9Z" fill="#cdbda5" stroke="#cdbda5" stroke-width="1.5"/><path d="M1493.5,341.9 L1517.4,338.2 L1522.2,355.6 L1498.0,358.7Z" fill="#cbbca5" stroke="#cbbca5" stroke-width="1.5"/><path d="M1498.0,358.7 L1522.2,355.6 L1526.4,373.2 L1502.2,375.7Z" fill="#cabba4" stroke="#cabba4" stroke-width="1.5"/><path d="M1502.2,375.7 L1526.4,373.2 L1530.2,391.1 L1505.8,393.0Z" fill="#c8baa4" stroke="#c8baa4" stroke-width="1.5"/><path d="M1505.8,393.0 L1530.2,391.1 L1533.4,409.2 L1509.0,410.6Z" fill="#c7b9a4" stroke="#c7b9a4" stroke-width="1.5"/><path d="M1509.0,410.6 L1533.4,409.2 L1536.2,427.6 L1511.7,428.3Z" fill="#c5b7a3" stroke="#c5b7a3" stroke-width="1.5"/><path d="M1511.7,428.3 L1536.2,427.6 L1538.4,446.1 L1514.0,446.2Z" fill="#c3b6a3" stroke="#c3b6a3" stroke-width="1.5"/><path d="M1514.0,446.2 L1538.4,446.1 L1540.2,464.8 L1515.8,464.2Z" fill="#c2b5a2" stroke="#c2b5a2" stroke-width="1.5"/><path d="M1515.8,464.2 L1540.2,464.8 L1541.5,483.7 L1517.1,482.4Z" fill="#c0b4a2" stroke="#c0b4a2" stroke-width="1.5"/><path d="M1459.8,213.8 L1480.7,207.4 L1490.3,221.5 L1468.9,227.6Z" fill="#edba82" stroke="#edba82" stroke-width="1.5"/><path d="M1468.9,227.6 L1490.3,221.5 L1499.4,236.3 L1477.5,242.0Z" fill="#e8ba87" stroke="#e8ba87" stroke-width="1.5"/><path d="M1477.5,242.0 L1499.4,236.3 L1507.8,251.6 L1485.5,256.9Z" fill="#e3ba8c" stroke="#e3ba8c" stroke-width="1.5"/><path d="M1485.5,256.9 L1507.8,251.6 L1515.6,267.4 L1492.9,272.3Z" fill="#deba91" stroke="#deba91" stroke-width="1.5"/><path d="M1492.9,272.3 L1515.6,267.4 L1522.9,283.8 L1499.9,288.2Z" fill="#dabb97" stroke="#dabb97" stroke-width="1.5"/><path d="M1499.9,288.2 L1522.9,283.8 L1529.6,300.6 L1506.2,304.5Z" fill="#d5bc9c" stroke="#d5bc9c" stroke-width="1.5"/><path d="M1506.2,304.5 L1529.6,300.6 L1535.7,317.7 L1512.1,321.2Z" fill="#d1bda2" stroke="#d1bda2" stroke-width="1.5"/><path d="M1512.1,321.2 L1535.7,317.7 L1541.2,335.3 L1517.4,338.2Z" fill="#cdbda5" stroke="#cdbda5" stroke-width="1.5"/><path d="M1517.4,338.2 L1541.2,335.3 L1546.1,353.2 L1522.2,355.6Z" fill="#cbbca5" stroke="#cbbca5" stroke-width="1.5"/><path d="M1522.2,355.6 L1546.1,353.2 L1550.5,371.4 L1526.4,373.2Z" fill="#cabba4" stroke="#cabba4" stroke-width="1.5"/><path d="M1526.4,373.2 L1550.5,371.4 L1554.4,389.8 L1530.2,391.1Z" fill="#c8baa4" stroke="#c8baa4" stroke-width="1.5"/><path d="M1530.2,391.1 L1554.4,389.8 L1557.7,408.5 L1533.4,409.2Z" fill="#c7b9a4" stroke="#c7b9a4" stroke-width="1.5"/><path d="M1533.4,409.2 L1557.7,408.5 L1560.4,427.4 L1536.2,427.6Z" fill="#c5b7a3" stroke="#c5b7a3" stroke-width="1.5"/><path d="M1536.2,427.6 L1560.4,427.4 L1562.6,446.6 L1538.4,446.1Z" fill="#c3b6a3" stroke="#c3b6a3" stroke-width="1.5"/><path d="M1538.4,446.1 L1562.6,446.6 L1564.3,465.8 L1540.2,464.8Z" fill="#c2b5a2" stroke="#c2b5a2" stroke-width="1.5"/><path d="M1540.2,464.8 L1564.3,465.8 L1565.4,485.3 L1541.5,483.7Z" fill="#c0b4a2" stroke="#c0b4a2" stroke-width="1.5"/><path d="M1480.7,207.4 L1501.7,202.0 L1511.8,216.5 L1490.3,221.5Z" fill="#edba82" stroke="#edba82" stroke-width="1.5"/><path d="M1490.3,221.5 L1511.8,216.5 L1521.3,231.6 L1499.4,236.3Z" fill="#e8ba87" stroke="#e8ba87" stroke-width="1.5"/><path d="M1499.4,236.3 L1521.3,231.6 L1530.1,247.3 L1507.8,251.6Z" fill="#e3ba8c" stroke="#e3ba8c" stroke-width="1.5"/><path d="M1507.8,251.6 L1530.1,247.3 L1538.3,263.5 L1515.6,267.4Z" fill="#deba91" stroke="#deba91" stroke-width="1.5"/><path d="M1515.6,267.4 L1538.3,263.5 L1545.9,280.3 L1522.9,283.8Z" fill="#dabb97" stroke="#dabb97" stroke-width="1.5"/><path d="M1522.9,283.8 L1545.9,280.3 L1552.8,297.5 L1529.6,300.6Z" fill="#d5bc9c" stroke="#d5bc9c" stroke-width="1.5"/><path d="M1529.6,300.6 L1552.8,297.5 L1559.1,315.1 L1535.7,317.7Z" fill="#d1bda2" stroke="#d1bda2" stroke-width="1.5"/><path d="M1535.7,317.7 L1559.1,315.1 L1564.8,333.2 L1541.2,335.3Z" fill="#cdbda5" stroke="#cdbda5" stroke-width="1.5"/><path d="M1541.2,335.3 L1564.8,333.2 L1569.9,351.5 L1546.1,353.2Z" fill="#cbbca5" stroke="#cbbca5" stroke-width="1.5"/><path d="M1546.1,353.2 L1569.9,351.5 L1574.4,370.2 L1550.5,371.4Z" fill="#cabba4" stroke="#cabba4" stroke-width="1.5"/><path d="M1550.5,371.4 L1574.4,370.2 L1578.3,389.2 L1554.4,389.8Z" fill="#c8baa4" stroke="#c8baa4" stroke-width="1.5"/><path d="M1554.4,389.8 L1578.3,389.2 L1581.6,408.4 L1557.7,408.5Z" fill="#c7b9a4" stroke="#c7b9a4" stroke-width="1.5"/><path d="M1557.7,408.5 L1581.6,408.4 L1584.3,427.9 L1560.4,427.4Z" fill="#c5b7a3" stroke="#c5b7a3" stroke-width="1.5"/><path d="M1560.4,427.4 L1584.3,427.9 L1586.5,447.5 L1562.6,446.6Z" fill="#c3b6a3" stroke="#c3b6a3" stroke-width="1.5"/><path d="M1562.6,446.6 L1586.5,447.5 L1588.0,467.3 L1564.3,465.8Z" fill="#c2b5a2" stroke="#c2b5a2" stroke-width="1.5"/><path d="M1564.3,465.8 L1588.0,467.3 L1589.0,487.2 L1565.4,485.3Z" fill="#c0b4a2" stroke="#c0b4a2" stroke-width="1.5"/><path d="M1501.7,202.0 L1522.8,197.8 L1533.4,212.6 L1511.8,216.5Z" fill="#edba82" stroke="#edba82" stroke-width="1.5"/><path d="M1511.8,216.5 L1533.4,212.6 L1543.3,228.0 L1521.3,231.6Z" fill="#e8ba87" stroke="#e8ba87" stroke-width="1.5"/><path d="M1521.3,231.6 L1543.3,228.0 L1552.4,244.0 L1530.1,247.3Z" fill="#e3ba8c" stroke="#e3ba8c" stroke-width="1.5"/><path d="M1530.1,247.3 L1552.4,244.0 L1561.0,260.6 L1538.3,263.5Z" fill="#deba91" stroke="#deba91" stroke-width="1.5"/><path d="M1538.3,263.5 L1561.0,260.6 L1568.8,277.7 L1545.9,280.3Z" fill="#dabb97" stroke="#dabb97" stroke-width="1.5"/><path d="M1545.9,280.3 L1568.8,277.7 L1576.0,295.4 L1552.8,297.5Z" fill="#d5bc9c" stroke="#d5bc9c" stroke-width="1.5"/><path d="M1552.8,297.5 L1576.0,295.4 L1582.5,313.4 L1559.1,315.1Z" fill="#d1bda2" stroke="#d1bda2" stroke-width="1.5"/><path d="M1559.1,315.1 L1582.5,313.4 L1588.3,331.9 L1564.8,333.2Z" fill="#cdbda5" stroke="#cdbda5" stroke-width="1.5"/><path d="M1564.8,333.2 L1588.3,331.9 L1593.5,350.7 L1569.9,351.5Z" fill="#cbbca5" stroke="#cbbca5" stroke-width="1.5"/><path d="M1569.9,351.5 L1593.5,350.7 L1598.1,369.8 L1574.4,370.2Z" fill="#cabba4" stroke="#cabba4" stroke-width="1.5"/><path d="M1574.4,370.2 L1598.1,369.8 L1602.0,389.2 L1578.3,389.2Z" fill="#c8baa4" stroke="#c8baa4" stroke-width="1.5"/><path d="M1578.3,389.2 L1602.0,389.2 L1605.3,408.9 L1581.6,408.4Z" fill="#c7b9a4" stroke="#c7b9a4" stroke-width="1.5"/><path d="M1581.6,408.4 L1605.3,408.9 L1607.9,428.8 L1584.3,427.9Z" fill="#c5b7a3" stroke="#c5b7a3" stroke-width="1.5"/><path d="M1584.3,427.9 L1607.9,428.8 L1610.0,448.9 L1586.5,447.5Z" fill="#c3b6a3" stroke="#c3b6a3" stroke-width="1.5"/><path d="M1586.5,447.5 L1610.0,448.9 L1611.4,469.2 L1588.0,467.3Z" fill="#c2b5a2" stroke="#c2b5a2" stroke-width="1.5"/><path d="M1588.0,467.3 L1611.4,469.2 L1612.3,489.6 L1589.0,487.2Z" fill="#c0b4a2" stroke="#c0b4a2" stroke-width="1.5"/><path d="M1522.8,197.8 L1544.0,194.9 L1555.0,209.8 L1533.4,212.6Z" fill="#edba82" stroke="#edba82" stroke-width="1.5"/><path d="M1533.4,212.6 L1555.0,209.8 L1565.2,225.5 L1543.3,228.0Z" fill="#e8ba87" stroke="#e8ba87" stroke-width="1.5"/><path d="M1543.3,228.0 L1565.2,225.5 L1574.7,241.8 L1552.4,244.0Z" fill="#e3ba8c" stroke="#e3ba8c" stroke-width="1.5"/><path d="M1552.4,244.0 L1574.7,241.8 L1583.5,258.7 L1561.0,260.6Z" fill="#deba91" stroke="#deba91" stroke-width="1.5"/><path d="M1561.0,260.6 L1583.5,258.7 L1591.5,276.2 L1568.8,277.7Z" fill="#dabb97" stroke="#dabb97" stroke-width="1.5"/><path d="M1568.8,277.7 L1591.5,276.2 L1598.9,294.2 L1576.0,295.4Z" fill="#d5bc9c" stroke="#d5bc9c" stroke-width="1.5"/><path d="M1576.0,295.4 L1598.9,294.2 L1605.6,312.6 L1582.5,313.4Z" fill="#d1bda2" stroke="#d1bda2" stroke-width="1.5"/><path d="M1582.5,313.4 L1605.6,312.6 L1611.5,331.4 L1588.3,331.9Z" fill="#cdbda5" stroke="#cdbda5" stroke-width="1.5"/><path d="M1588.3,331.9 L1611.5,331.4 L1616.8,350.6 L1593.5,350.7Z" fill="#cbbca5" stroke="#cbbca5" stroke-width="1.5"/><path d="M1593.5,350.7 L1616.8,350.6 L1621.4,370.2 L1598.1,369.8Z" fill="#cabba4" stroke="#cabba4" stroke-width="1.5"/><path d="M1598.1,369.8 L1621.4,370.2 L1625.3,390.0 L1602.0,389.2Z" fill="#c8baa4" stroke="#c8baa4" stroke-width="1.5"/><path d="M1602.0,389.2 L1625.3,390.0 L1628.6,410.1 L1605.3,408.9Z" fill="#c7b9a4" stroke="#c7b9a4" stroke-width="1.5"/><path d="M1605.3,408.9 L1628.6,410.1 L1631.2,430.4 L1607.9,428.8Z" fill="#c5b7a3" stroke="#c5b7a3" stroke-width="1.5"/><path d="M1607.9,428.8 L1631.2,430.4 L1633.2,450.9 L1610.0,448.9Z" fill="#c3b6a3" stroke="#c3b6a3" stroke-width="1.5"/><path d="M1610.0,448.9 L1633.2,450.9 L1634.5,471.6 L1611.4,469.2Z" fill="#c2b5a2" stroke="#c2b5a2" stroke-width="1.5"/><path d="M1611.4,469.2 L1634.5,471.6 L1635.2,492.4 L1612.3,489.6Z" fill="#c0b4a2" stroke="#c0b4a2" stroke-width="1.5"/><path d="M1544.0,194.9 L1565.2,193.1 L1576.5,208.3 L1555.0,209.8Z" fill="#edba82" stroke="#edba82" stroke-width="1.5"/><path d="M1555.0,209.8 L1576.5,208.3 L1587.0,224.2 L1565.2,225.5Z" fill="#e8ba87" stroke="#e8ba87" stroke-width="1.5"/><path d="M1565.2,225.5 L1587.0,224.2 L1596.8,240.8 L1574.7,241.8Z" fill="#e3ba8c" stroke="#e3ba8c" stroke-width="1.5"/><path d="M1574.7,241.8 L1596.8,240.8 L1605.8,258.0 L1583.5,258.7Z" fill="#deba91" stroke="#deba91" stroke-width="1.5"/><path d="M1583.5,258.7 L1605.8,258.0 L1614.1,275.8 L1591.5,276.2Z" fill="#dabb97" stroke="#dabb97" stroke-width="1.5"/><path d="M1591.5,276.2 L1614.1,275.8 L1621.6,294.0 L1598.9,294.2Z" fill="#d5bc9c" stroke="#d5bc9c" stroke-width="1.5"/><path d="M1598.9,294.2 L1621.6,294.0 L1628.4,312.8 L1605.6,312.6Z" fill="#d1bda2" stroke="#d1bda2" stroke-width="1.5"/><path d="M1605.6,312.6 L1628.4,312.8 L1634.5,331.9 L1611.5,331.4Z" fill="#cdbda5" stroke="#cdbda5" stroke-width="1.5"/><path d="M1611.5,331.4 L1634.5,331.9 L1639.8,351.4 L1616.8,350.6Z" fill="#cbbca5" stroke="#cbbca5" stroke-width="1.5"/><path d="M1616.8,350.6 L1639.8,351.4 L1644.4,371.3 L1621.4,370.2Z" fill="#cabba4" stroke="#cabba4" stroke-width="1.5"/><path d="M1621.4,370.2 L1644.4,371.3 L1648.4,391.5 L1625.3,390.0Z" fill="#c8baa4" stroke="#c8baa4" stroke-width="1.5"/><path d="M1625.3,390.0 L1648.4,391.5 L1651.6,411.9 L1628.6,410.1Z" fill="#c7b9a4" stroke="#c7b9a4" stroke-width="1.5"/><path d="M1628.6,410.1 L1651.6,411.9 L1654.1,432.5 L1631.2,430.4Z" fill="#c5b7a3" stroke="#c5b7a3" stroke-width="1.5"/><path d="M1631.2,430.4 L1654.1,432.5 L1656.0,453.4 L1633.2,450.9Z" fill="#c3b6a3" stroke="#c3b6a3" stroke-width="1.5"/><path d="M1633.2,450.9 L1656.0,453.4 L1657.1,474.4 L1634.5,471.6Z" fill="#c2b5a2" stroke="#c2b5a2" stroke-width="1.5"/><path d="M1634.5,471.6 L1657.1,474.4 L1657.6,495.5 L1635.2,492.4Z" fill="#c0b4a2" stroke="#c0b4a2" stroke-width="1.5"/><path d="M1565.2,193.1 L1586.4,192.7 L1598.0,208.1 L1576.5,208.3Z" fill="#edba82" stroke="#edba82" stroke-width="1.5"/><path d="M1576.5,208.3 L1598.0,208.1 L1608.7,224.2 L1587.0,224.2Z" fill="#e8ba87" stroke="#e8ba87" stroke-width="1.5"/><path d="M1587.0,224.2 L1608.7,224.2 L1618.7,241.0 L1596.8,240.8Z" fill="#e3ba8c" stroke="#e3ba8c" stroke-width="1.5"/><path d="M1596.8,240.8 L1618.7,241.0 L1628.0,258.4 L1605.8,258.0Z" fill="#deba91" stroke="#deba91" stroke-width="1.5"/><path d="M1605.8,258.0 L1628.0,258.4 L1636.4,276.4 L1614.1,275.8Z" fill="#dabb97" stroke="#dabb97" stroke-width="1.5"/><path d="M1614.1,275.8 L1636.4,276.4 L1644.1,294.9 L1621.6,294.0Z" fill="#d5bc9c" stroke="#d5bc9c" stroke-width="1.5"/><path d="M1621.6,294.0 L1644.1,294.9 L1650.9,313.9 L1628.4,312.8Z" fill="#d1bda2" stroke="#d1bda2" stroke-width="1.5"/><path d="M1628.4,312.8 L1650.9,313.9 L1657.1,333.3 L1634.5,331.9Z" fill="#cdbda5" stroke="#cdbda5" stroke-width="1.5"/><path d="M1634.5,331.9 L1657.1,333.3 L1662.5,353.1 L1639.8,351.4Z" fill="#cbbca5" stroke="#cbbca5" stroke-width="1.5"/><path d="M1639.8,351.4 L1662.5,353.1 L1667.1,373.2 L1644.4,371.3Z" fill="#cabba4" stroke="#cabba4" stroke-width="1.5"/><path d="M1644.4,371.3 L1667.1,373.2 L1671.0,393.7 L1648.4,391.5Z" fill="#c8baa4" stroke="#c8baa4" stroke-width="1.5"/><path d="M1648.4,391.5 L1671.0,393.7 L1674.2,414.4 L1651.6,411.9Z" fill="#c7b9a4" stroke="#c7b9a4" stroke-width="1.5"/><path d="M1651.6,411.9 L1674.2,414.4 L1676.6,435.3 L1654.1,432.5Z" fill="#c5b7a3" stroke="#c5b7a3" stroke-width="1.5"/><path d="M1654.1,432.5 L1676.6,435.3 L1678.3,456.4 L1656.0,453.4Z" fill="#c3b6a3" stroke="#c3b6a3" stroke-width="1.5"/><path d="M1656.0,453.4 L1678.3,456.4 L1679.4,477.7 L1657.1,474.4Z" fill="#c2b5a2" stroke="#c2b5a2" stroke-width="1.5"/><path d="M1657.1,474.4 L1679.4,477.7 L1679.7,499.1 L1657.6,495.5Z" fill="#c0b4a2" stroke="#c0b4a2" stroke-width="1.5"/><path d="M1586.4,192.7 L1607.4,193.7 L1619.2,209.2 L1598.0,208.1Z" fill="#edba82" stroke="#edba82" stroke-width="1.5"/><path d="M1598.0,208.1 L1619.2,209.2 L1630.2,225.4 L1608.7,224.2Z" fill="#e8ba87" stroke="#e8ba87" stroke-width="1.5"/><path d="M1608.7,224.2 L1630.2,225.4 L1640.4,242.4 L1618.7,241.0Z" fill="#e3ba8c" stroke="#e3ba8c" stroke-width="1.5"/><path d="M1618.7,241.0 L1640.4,242.4 L1649.8,260.0 L1628.0,258.4Z" fill="#deba91" stroke="#deba91" stroke-width="1.5"/><path d="M1628.0,258.4 L1649.8,260.0 L1658.4,278.2 L1636.4,276.4Z" fill="#dabb97" stroke="#dabb97" stroke-width="1.5"/><path d="M1636.4,276.4 L1658.4,278.2 L1666.1,296.9 L1644.1,294.9Z" fill="#d5bc9c" stroke="#d5bc9c" stroke-width="1.5"/><path d="M1644.1,294.9 L1666.1,296.9 L1673.1,316.1 L1650.9,313.9Z" fill="#d1bda2" stroke="#d1bda2" stroke-width="1.5"/><path d="M1650.9,313.9 L1673.1,316.1 L1679.3,335.7 L1657.1,333.3Z" fill="#cdbda5" stroke="#cdbda5" stroke-width="1.5"/><path d="M1657.1,333.3 L1679.3,335.7 L1684.7,355.7 L1662.5,353.1Z" fill="#cbbca5" stroke="#cbbca5" stroke-width="1.5"/><path d="M1662.5,353.1 L1684.7,355.7 L1689.3,376.0 L1667.1,373.2Z" fill="#cabba4" stroke="#cabba4" stroke-width="1.5"/><path d="M1667.1,373.2 L1689.3,376.0 L1693.2,396.7 L1671.0,393.7Z" fill="#c8baa4" stroke="#c8baa4" stroke-width="1.5"/><path d="M1671.0,393.7 L1693.2,396.7 L1696.3,417.6 L1674.2,414.4Z" fill="#c7b9a4" stroke="#c7b9a4" stroke-width="1.5"/><path d="M1674.2,414.4 L1696.3,417.6 L1698.7,438.7 L1676.6,435.3Z" fill="#c5b7a3" stroke="#c5b7a3" stroke-width="1.5"/><path d="M1676.6,435.3 L1698.7,438.7 L1700.3,460.0 L1678.3,456.4Z" fill="#c3b6a3" stroke="#c3b6a3" stroke-width="1.5"/><path d="M1678.3,456.4 L1700.3,460.0 L1701.1,481.5 L1679.4,477.7Z" fill="#c2b5a2" stroke="#c2b5a2" stroke-width="1.5"/><path d="M1679.4,477.7 L1701.1,481.5 L1701.3,503.1 L1679.7,499.1Z" fill="#c0b4a2" stroke="#c0b4a2" stroke-width="1.5"/><path d="M1607.4,193.7 L1628.2,196.0 L1640.3,211.7 L1619.2,209.2Z" fill="#edba82" stroke="#edba82" stroke-width="1.5"/><path d="M1619.2,209.2 L1640.3,211.7 L1651.4,228.0 L1630.2,225.4Z" fill="#e8ba87" stroke="#e8ba87" stroke-width="1.5"/><path d="M1630.2,225.4 L1651.4,228.0 L1661.8,245.1 L1640.4,242.4Z" fill="#e3ba8c" stroke="#e3ba8c" stroke-width="1.5"/><path d="M1640.4,242.4 L1661.8,245.1 L1671.3,262.9 L1649.8,260.0Z" fill="#deba91" stroke="#deba91" stroke-width="1.5"/><path d="M1649.8,260.0 L1671.3,262.9 L1680.0,281.2 L1658.4,278.2Z" fill="#dabb97" stroke="#dabb97" stroke-width="1.5"/><path d="M1658.4,278.2 L1680.0,281.2 L1687.8,300.0 L1666.1,296.9Z" fill="#d5bc9c" stroke="#d5bc9c" stroke-width="1.5"/><path d="M1666.1,296.9 L1687.8,300.0 L1694.8,319.3 L1673.1,316.1Z" fill="#d1bda2" stroke="#d1bda2" stroke-width="1.5"/><path d="M1673.1,316.1 L1694.8,319.3 L1701.0,339.1 L1679.3,335.7Z" fill="#cdbda5" stroke="#cdbda5" stroke-width="1.5"/><path d="M1679.3,335.7 L1701.0,339.1 L1706.4,359.2 L1684.7,355.7Z" fill="#cbbca5" stroke="#cbbca5" stroke-width="1.5"/><path d="M1684.7,355.7 L1706.4,359.2 L1711.0,379.7 L1689.3,376.0Z" fill="#cabba4" stroke="#cabba4" stroke-width="1.5"/><path d="M1689.3,376.0 L1711.0,379.7 L1714.9,400.5 L1693.2,396.7Z" fill="#c8baa4" stroke="#c8baa4" stroke-width="1.5"/><path d="M1693.2,396.7 L1714.9,400.5 L1717.9,421.5 L1696.3,417.6Z" fill="#c7b9a4" stroke="#c7b9a4" stroke-width="1.5"/><path d="M1696.3,417.6 L1717.9,421.5 L1720.2,442.8 L1698.7,438.7Z" fill="#c5b7a3" stroke="#c5b7a3" stroke-width="1.5"/><path d="M1698.7,438.7 L1720.2,442.8 L1721.7,464.2 L1700.3,460.0Z" fill="#c3b6a3" stroke="#c3b6a3" stroke-width="1.5"/><path d="M1700.3,460.0 L1721.7,464.2 L1722.4,485.8 L1701.1,481.5Z" fill="#c2b5a2" stroke="#c2b5a2" stroke-width="1.5"/><path d="M1701.1,481.5 L1722.4,485.8 L1722.4,507.5 L1701.3,503.1Z" fill="#c0b4a2" stroke="#c0b4a2" stroke-width="1.5"/><path d="M1628.2,196.0 L1648.8,199.9 L1661.0,215.6 L1640.3,211.7Z" fill="#edba82" stroke="#edba82" stroke-width="1.5"/><path d="M1640.3,211.7 L1661.0,215.6 L1672.3,232.1 L1651.4,228.0Z" fill="#e8ba87" stroke="#e8ba87" stroke-width="1.5"/><path d="M1651.4,228.0 L1672.3,232.1 L1682.7,249.2 L1661.8,245.1Z" fill="#e3ba8c" stroke="#e3ba8c" stroke-width="1.5"/><path d="M1661.8,245.1 L1682.7,249.2 L1692.3,267.0 L1671.3,262.9Z" fill="#deba91" stroke="#deba91" stroke-width="1.5"/><path d="M1671.3,262.9 L1692.3,267.0 L1701.1,285.4 L1680.0,281.2Z" fill="#dabb97" stroke="#dabb97" stroke-width="1.5"/><path d="M1680.0,281.2 L1701.1,285.4 L1708.9,304.3 L1687.8,300.0Z" fill="#d5bc9c" stroke="#d5bc9c" stroke-width="1.5"/><path d="M1687.8,300.0 L1708.9,304.3 L1716.0,323.7 L1694.8,319.3Z" fill="#d1bda2" stroke="#d1bda2" stroke-width="1.5"/><path d="M1694.8,319.3 L1716.0,323.7 L1722.2,343.6 L1701.0,339.1Z" fill="#cdbda5" stroke="#cdbda5" stroke-width="1.5"/><path d="M1701.0,339.1 L1722.2,343.6 L1727.6,363.8 L1706.4,359.2Z" fill="#cbbca5" stroke="#cbbca5" stroke-width="1.5"/><path d="M1706.4,359.2 L1727.6,363.8 L1732.2,384.3 L1711.0,379.7Z" fill="#cabba4" stroke="#cabba4" stroke-width="1.5"/><path d="M1711.0,379.7 L1732.2,384.3 L1736.0,405.1 L1714.9,400.5Z" fill="#c8baa4" stroke="#c8baa4" stroke-width="1.5"/><path d="M1714.9,400.5 L1736.0,405.1 L1738.9,426.2 L1717.9,421.5Z" fill="#c7b9a4" stroke="#c7b9a4" stroke-width="1.5"/><path d="M1717.9,421.5 L1738.9,426.2 L1741.1,447.6 L1720.2,442.8Z" fill="#c5b7a3" stroke="#c5b7a3" stroke-width="1.5"/><path d="M1720.2,442.8 L1741.1,447.6 L1742.5,469.1 L1721.7,464.2Z" fill="#c3b6a3" stroke="#c3b6a3" stroke-width="1.5"/><path d="M1721.7,464.2 L1742.5,469.1 L1743.1,490.7 L1722.4,485.8Z" fill="#c2b5a2" stroke="#c2b5a2" stroke-width="1.5"/><path d="M1722.4,485.8 L1743.1,490.7 L1743.0,512.5 L1722.4,507.5Z" fill="#c0b4a2" stroke="#c0b4a2" stroke-width="1.5"/><path d="M1648.8,199.9 L1669.1,205.3 L1681.3,221.0 L1661.0,215.6Z" fill="#edba82" stroke="#edba82" stroke-width="1.5"/><path d="M1661.0,215.6 L1681.3,221.0 L1692.7,237.5 L1672.3,232.1Z" fill="#e8ba87" stroke="#e8ba87" stroke-width="1.5"/><path d="M1672.3,232.1 L1692.7,237.5 L1703.2,254.7 L1682.7,249.2Z" fill="#e3ba8c" stroke="#e3ba8c" stroke-width="1.5"/><path d="M1682.7,249.2 L1703.2,254.7 L1712.8,272.6 L1692.3,267.0Z" fill="#deba91" stroke="#deba91" stroke-width="1.5"/><path d="M1692.3,267.0 L1712.8,272.6 L1721.6,291.0 L1701.1,285.4Z" fill="#dabb97" stroke="#dabb97" stroke-width="1.5"/><path d="M1701.1,285.4 L1721.6,291.0 L1729.5,309.9 L1708.9,304.3Z" fill="#d5bc9c" stroke="#d5bc9c" stroke-width="1.5"/><path d="M1708.9,304.3 L1729.5,309.9 L1736.5,329.3 L1716.0,323.7Z" fill="#d1bda2" stroke="#d1bda2" stroke-width="1.5"/><path d="M1716.0,323.7 L1736.5,329.3 L1742.8,349.2 L1722.2,343.6Z" fill="#cdbda5" stroke="#cdbda5" stroke-width="1.5"/><path d="M1722.2,343.6 L1742.8,349.2 L1748.1,369.4 L1727.6,363.8Z" fill="#cbbca5" stroke="#cbbca5" stroke-width="1.5"/><path d="M1727.6,363.8 L1748.1,369.4 L1752.7,389.9 L1732.2,384.3Z" fill="#cabba4" stroke="#cabba4" stroke-width="1.5"/><path d="M1732.2,384.3 L1752.7,389.9 L1756.4,410.7 L1736.0,405.1Z" fill="#c8baa4" stroke="#c8baa4" stroke-width="1.5"/><path d="M1736.0,405.1 L1756.4,410.7 L1759.3,431.8 L1738.9,426.2Z" fill="#c7b9a4" stroke="#c7b9a4" stroke-width="1.5"/><path d="M1738.9,426.2 L1759.3,431.8 L1761.4,453.1 L1741.1,447.6Z" fill="#c5b7a3" stroke="#c5b7a3" stroke-width="1.5"/><path d="M1741.1,447.6 L1761.4,453.1 L1762.7,474.6 L1742.5,469.1Z" fill="#c3b6a3" stroke="#c3b6a3" stroke-width="1.5"/><path d="M1742.5,469.1 L1762.7,474.6 L1763.2,496.2 L1743.1,490.7Z" fill="#c2b5a2" stroke="#c2b5a2" stroke-width="1.5"/><path d="M1743.1,490.7 L1763.2,496.2 L1762.9,518.0 L1743.0,512.5Z" fill="#c0b4a2" stroke="#c0b4a2" stroke-width="1.5"/><path d="M1669.1,205.3 L1688.9,212.2 L1701.2,228.0 L1681.3,221.0Z" fill="#edba82" stroke="#edba82" stroke-width="1.5"/><path d="M1681.3,221.0 L1701.2,228.0 L1712.5,244.5 L1692.7,237.5Z" fill="#e8ba87" stroke="#e8ba87" stroke-width="1.5"/><path d="M1692.7,237.5 L1712.5,244.5 L1723.0,261.7 L1703.2,254.7Z" fill="#e3ba8c" stroke="#e3ba8c" stroke-width="1.5"/><path d="M1703.2,254.7 L1723.0,261.7 L1732.7,279.5 L1712.8,272.6Z" fill="#deba91" stroke="#deba91" stroke-width="1.5"/><path d="M1712.8,272.6 L1732.7,279.5 L1741.4,297.9 L1721.6,291.0Z" fill="#dabb97" stroke="#dabb97" stroke-width="1.5"/><path d="M1721.6,291.0 L1741.4,297.9 L1749.3,316.8 L1729.5,309.9Z" fill="#d5bc9c" stroke="#d5bc9c" stroke-width="1.5"/><path d="M1729.5,309.9 L1749.3,316.8 L1756.4,336.2 L1736.5,329.3Z" fill="#d1bda2" stroke="#d1bda2" stroke-width="1.5"/><path d="M1736.5,329.3 L1756.4,336.2 L1762.6,355.9 L1742.8,349.2Z" fill="#cdbda5" stroke="#cdbda5" stroke-width="1.5"/><path d="M1742.8,349.2 L1762.6,355.9 L1767.9,376.1 L1748.1,369.4Z" fill="#cbbca5" stroke="#cbbca5" stroke-width="1.5"/><path d="M1748.1,369.4 L1767.9,376.1 L1772.4,396.5 L1752.7,389.9Z" fill="#cabba4" stroke="#cabba4" stroke-width="1.5"/><path d="M1752.7,389.9 L1772.4,396.5 L1776.0,417.3 L1756.4,410.7Z" fill="#c8baa4" stroke="#c8baa4" stroke-width="1.5"/><path d="M1756.4,410.7 L1776.0,417.3 L1778.9,438.3 L1759.3,431.8Z" fill="#c7b9a4" stroke="#c7b9a4" stroke-width="1.5"/><path d="M1759.3,431.8 L1778.9,438.3 L1780.9,459.5 L1761.4,453.1Z" fill="#c5b7a3" stroke="#c5b7a3" stroke-width="1.5"/><path d="M1761.4,453.1 L1780.9,459.5 L1782.1,480.9 L1762.7,474.6Z" fill="#c3b6a3" stroke="#c3b6a3" stroke-width="1.5"/><path d="M1762.7,474.6 L1782.1,480.9 L1782.5,502.4 L1763.2,496.2Z" fill="#c2b5a2" stroke="#c2b5a2" stroke-width="1.5"/><path d="M1763.2,496.2 L1782.5,502.4 L1782.1,524.0 L1762.9,518.0Z" fill="#c0b4a2" stroke="#c0b4a2" stroke-width="1.5"/><path d="M1688.9,212.2 L1708.2,220.9 L1720.4,236.6 L1701.2,228.0Z" fill="#edba82" stroke="#edba82" stroke-width="1.5"/><path d="M1701.2,228.0 L1720.4,236.6 L1731.7,253.1 L1712.5,244.5Z" fill="#e8ba87" stroke="#e8ba87" stroke-width="1.5"/><path d="M1712.5,244.5 L1731.7,253.1 L1742.2,270.3 L1723.0,261.7Z" fill="#e3ba8c" stroke="#e3ba8c" stroke-width="1.5"/><path d="M1723.0,261.7 L1742.2,270.3 L1751.8,288.0 L1732.7,279.5Z" fill="#deba91" stroke="#deba91" stroke-width="1.5"/><path d="M1732.7,279.5 L1751.8,288.0 L1760.5,306.3 L1741.4,297.9Z" fill="#dabb97" stroke="#dabb97" stroke-width="1.5"/><path d="M1741.4,297.9 L1760.5,306.3 L1768.4,325.1 L1749.3,316.8Z" fill="#d5bc9c" stroke="#d5bc9c" stroke-width="1.5"/><path d="M1749.3,316.8 L1768.4,325.1 L1775.3,344.3 L1756.4,336.2Z" fill="#d1bda2" stroke="#d1bda2" stroke-width="1.5"/><path d="M1756.4,336.2 L1775.3,344.3 L1781.5,363.9 L1762.6,355.9Z" fill="#cdbda5" stroke="#cdbda5" stroke-width="1.5"/><path d="M1762.6,355.9 L1781.5,363.9 L1786.8,383.9 L1767.9,376.1Z" fill="#cbbca5" stroke="#cbbca5" stroke-width="1.5"/><path d="M1767.9,376.1 L1786.8,383.9 L1791.2,404.3 L1772.4,396.5Z" fill="#cabba4" stroke="#cabba4" stroke-width="1.5"/><path d="M1772.4,396.5 L1791.2,404.3 L1794.8,424.9 L1776.0,417.3Z" fill="#c8baa4" stroke="#c8baa4" stroke-width="1.5"/><path d="M1776.0,417.3 L1794.8,424.9 L1797.6,445.7 L1778.9,438.3Z" fill="#c7b9a4" stroke="#c7b9a4" stroke-width="1.5"/><path d="M1778.9,438.3 L1797.6,445.7 L1799.5,466.7 L1780.9,459.5Z" fill="#c5b7a3" stroke="#c5b7a3" stroke-width="1.5"/><path d="M1780.9,459.5 L1799.5,466.7 L1800.6,487.9 L1782.1,480.9Z" fill="#c3b6a3" stroke="#c3b6a3" stroke-width="1.5"/><path d="M1782.1,480.9 L1800.6,487.9 L1800.9,509.3 L1782.5,502.4Z" fill="#c2b5a2" stroke="#c2b5a2" stroke-width="1.5"/><path d="M1782.5,502.4 L1800.9,509.3 L1800.4,530.7 L1782.1,524.0Z" fill="#c0b4a2" stroke="#c0b4a2" stroke-width="1.5"/><path d="M1708.2,220.9 L1726.9,231.2 L1738.9,246.9 L1720.4,236.6Z" fill="#edba82" stroke="#edba82" stroke-width="1.5"/><path d="M1720.4,236.6 L1738.9,246.9 L1750.2,263.3 L1731.7,253.1Z" fill="#e8ba87" stroke="#e8ba87" stroke-width="1.5"/><path d="M1731.7,253.1 L1750.2,263.3 L1760.5,280.4 L1742.2,270.3Z" fill="#e3ba8c" stroke="#e3ba8c" stroke-width="1.5"/><path d="M1742.2,270.3 L1760.5,280.4 L1770.0,298.0 L1751.8,288.0Z" fill="#deba91" stroke="#deba91" stroke-width="1.5"/><path d="M1751.8,288.0 L1770.0,298.0 L1778.7,316.1 L1760.5,306.3Z" fill="#dabb97" stroke="#dabb97" stroke-width="1.5"/><path d="M1760.5,306.3 L1778.7,316.1 L1786.4,334.8 L1768.4,325.1Z" fill="#d5bc9c" stroke="#d5bc9c" stroke-width="1.5"/><path d="M1768.4,325.1 L1786.4,334.8 L1793.3,353.8 L1775.3,344.3Z" fill="#d1bda2" stroke="#d1bda2" stroke-width="1.5"/><path d="M1775.3,344.3 L1793.3,353.8 L1799.4,373.3 L1781.5,363.9Z" fill="#cdbda5" stroke="#cdbda5" stroke-width="1.5"/><path d="M1781.5,363.9 L1799.4,373.3 L1804.6,393.0 L1786.8,383.9Z" fill="#cbbca5" stroke="#cbbca5" stroke-width="1.5"/><path d="M1786.8,383.9 L1804.6,393.0 L1809.0,413.1 L1791.2,404.3Z" fill="#cabba4" stroke="#cabba4" stroke-width="1.5"/><path d="M1791.2,404.3 L1809.0,413.1 L1812.5,433.5 L1794.8,424.9Z" fill="#c8baa4" stroke="#c8baa4" stroke-width="1.5"/><path d="M1794.8,424.9 L1812.5,433.5 L1815.2,454.1 L1797.6,445.7Z" fill="#c7b9a4" stroke="#c7b9a4" stroke-width="1.5"/><path d="M1797.6,445.7 L1815.2,454.1 L1817.1,474.9 L1799.5,466.7Z" fill="#c5b7a3" stroke="#c5b7a3" stroke-width="1.5"/><path d="M1799.5,466.7 L1817.1,474.9 L1818.2,495.8 L1800.6,487.9Z" fill="#c3b6a3" stroke="#c3b6a3" stroke-width="1.5"/><path d="M1800.6,487.9 L1818.2,495.8 L1818.4,516.9 L1800.9,509.3Z" fill="#c2b5a2" stroke="#c2b5a2" stroke-width="1.5"/><path d="M1800.9,509.3 L1818.4,516.9 L1817.8,538.1 L1800.4,530.7Z" fill="#c0b4a2" stroke="#c0b4a2" stroke-width="1.5"/><path d="M1726.9,231.2 L1744.8,243.2 L1756.7,258.9 L1738.9,246.9Z" fill="#edba82" stroke="#edba82" stroke-width="1.5"/><path d="M1738.9,246.9 L1756.7,258.9 L1767.7,275.2 L1750.2,263.3Z" fill="#e8ba87" stroke="#e8ba87" stroke-width="1.5"/><path d="M1750.2,263.3 L1767.7,275.2 L1777.9,292.1 L1760.5,280.4Z" fill="#e3ba8c" stroke="#e3ba8c" stroke-width="1.5"/><path d="M1760.5,280.4 L1777.9,292.1 L1787.3,309.6 L1770.0,298.0Z" fill="#deba91" stroke="#deba91" stroke-width="1.5"/><path d="M1770.0,298.0 L1787.3,309.6 L1795.8,327.5 L1778.7,316.1Z" fill="#dabb97" stroke="#dabb97" stroke-width="1.5"/><path d="M1778.7,316.1 L1795.8,327.5 L1803.4,345.9 L1786.4,334.8Z" fill="#d5bc9c" stroke="#d5bc9c" stroke-width="1.5"/><path d="M1786.4,334.8 L1803.4,345.9 L1810.2,364.8 L1793.3,353.8Z" fill="#d1bda2" stroke="#d1bda2" stroke-width="1.5"/><path d="M1793.3,353.8 L1810.2,364.8 L1816.2,383.9 L1799.4,373.3Z" fill="#cdbda5" stroke="#cdbda5" stroke-width="1.5"/><path d="M1799.4,373.3 L1816.2,383.9 L1821.3,403.5 L1804.6,393.0Z" fill="#cbbca5" stroke="#cbbca5" stroke-width="1.5"/><path d="M1804.6,393.0 L1821.3,403.5 L1825.6,423.3 L1809.0,413.1Z" fill="#cabba4" stroke="#cabba4" stroke-width="1.5"/><path d="M1809.0,413.1 L1825.6,423.3 L1829.1,443.3 L1812.5,433.5Z" fill="#c8baa4" stroke="#c8baa4" stroke-width="1.5"/><path d="M1812.5,433.5 L1829.1,443.3 L1831.7,463.6 L1815.2,454.1Z" fill="#c7b9a4" stroke="#c7b9a4" stroke-width="1.5"/><path d="M1815.2,454.1 L1831.7,463.6 L1833.5,484.1 L1817.1,474.9Z" fill="#c5b7a3" stroke="#c5b7a3" stroke-width="1.5"/><path d="M1817.1,474.9 L1833.5,484.1 L1834.5,504.7 L1818.2,495.8Z" fill="#c3b6a3" stroke="#c3b6a3" stroke-width="1.5"/><path d="M1818.2,495.8 L1834.5,504.7 L1834.7,525.4 L1818.4,516.9Z" fill="#c2b5a2" stroke="#c2b5a2" stroke-width="1.5"/><path d="M1818.4,516.9 L1834.7,525.4 L1834.1,546.2 L1817.8,538.1Z" fill="#c0b4a2" stroke="#c0b4a2" stroke-width="1.5"/><path d="M1744.8,243.2 L1761.9,257.1 L1773.5,272.7 L1756.7,258.9Z" fill="#edba82" stroke="#edba82" stroke-width="1.5"/><path d="M1756.7,258.9 L1773.5,272.7 L1784.3,288.9 L1767.7,275.2Z" fill="#e8ba87" stroke="#e8ba87" stroke-width="1.5"/><path d="M1767.7,275.2 L1784.3,288.9 L1794.2,305.6 L1777.9,292.1Z" fill="#e3ba8c" stroke="#e3ba8c" stroke-width="1.5"/><path d="M1777.9,292.1 L1794.2,305.6 L1803.4,322.8 L1787.3,309.6Z" fill="#deba91" stroke="#deba91" stroke-width="1.5"/><path d="M1787.3,309.6 L1803.4,322.8 L1811.7,340.5 L1795.8,327.5Z" fill="#dabb97" stroke="#dabb97" stroke-width="1.5"/><path d="M1795.8,327.5 L1811.7,340.5 L1819.1,358.7 L1803.4,345.9Z" fill="#d5bc9c" stroke="#d5bc9c" stroke-width="1.5"/><path d="M1803.4,345.9 L1819.1,358.7 L1825.8,377.2 L1810.2,364.8Z" fill="#d1bda2" stroke="#d1bda2" stroke-width="1.5"/><path d="M1810.2,364.8 L1825.8,377.2 L1831.6,396.1 L1816.2,383.9Z" fill="#cdbda5" stroke="#cdbda5" stroke-width="1.5"/><path d="M1816.2,383.9 L1831.6,396.1 L1836.6,415.3 L1821.3,403.5Z" fill="#cbbca5" stroke="#cbbca5" stroke-width="1.5"/><path d="M1821.3,403.5 L1836.6,415.3 L1840.8,434.7 L1825.6,423.3Z" fill="#cabba4" stroke="#cabba4" stroke-width="1.5"/><path d="M1825.6,423.3 L1840.8,434.7 L1844.2,454.4 L1829.1,443.3Z" fill="#c8baa4" stroke="#c8baa4" stroke-width="1.5"/><path d="M1829.1,443.3 L1844.2,454.4 L1846.8,474.3 L1831.7,463.6Z" fill="#c7b9a4" stroke="#c7b9a4" stroke-width="1.5"/><path d="M1831.7,463.6 L1846.8,474.3 L1848.5,494.3 L1833.5,484.1Z" fill="#c5b7a3" stroke="#c5b7a3" stroke-width="1.5"/><path d="M1833.5,484.1 L1848.5,494.3 L1849.5,514.5 L1834.5,504.7Z" fill="#c3b6a3" stroke="#c3b6a3" stroke-width="1.5"/><path d="M1834.5,504.7 L1849.5,514.5 L1849.7,534.8 L1834.7,525.4Z" fill="#c2b5a2" stroke="#c2b5a2" stroke-width="1.5"/><path d="M1834.7,525.4 L1849.7,534.8 L1849.0,555.2 L1834.1,546.2Z" fill="#c0b4a2" stroke="#c0b4a2" stroke-width="1.5"/><path d="M1761.9,257.1 L1778.0,272.7 L1789.2,288.2 L1773.5,272.7Z" fill="#edba82" stroke="#edba82" stroke-width="1.5"/><path d="M1773.5,272.7 L1789.2,288.2 L1799.6,304.3 L1784.3,288.9Z" fill="#e8ba87" stroke="#e8ba87" stroke-width="1.5"/><path d="M1784.3,288.9 L1799.6,304.3 L1809.3,320.8 L1794.2,305.6Z" fill="#e3ba8c" stroke="#e3ba8c" stroke-width="1.5"/><path d="M1794.2,305.6 L1809.3,320.8 L1818.1,337.8 L1803.4,322.8Z" fill="#deba91" stroke="#deba91" stroke-width="1.5"/><path d="M1803.4,322.8 L1818.1,337.8 L1826.2,355.2 L1811.7,340.5Z" fill="#dabb97" stroke="#dabb97" stroke-width="1.5"/><path d="M1811.7,340.5 L1826.2,355.2 L1833.4,373.0 L1819.1,358.7Z" fill="#d5bc9c" stroke="#d5bc9c" stroke-width="1.5"/><path d="M1819.1,358.7 L1833.4,373.0 L1839.9,391.2 L1825.8,377.2Z" fill="#d1bda2" stroke="#d1bda2" stroke-width="1.5"/><path d="M1825.8,377.2 L1839.9,391.2 L1845.5,409.7 L1831.6,396.1Z" fill="#cdbda5" stroke="#cdbda5" stroke-width="1.5"/><path d="M1831.6,396.1 L1845.5,409.7 L1850.4,428.5 L1836.6,415.3Z" fill="#cbbca5" stroke="#cbbca5" stroke-width="1.5"/><path d="M1836.6,415.3 L1850.4,428.5 L1854.5,447.5 L1840.8,434.7Z" fill="#cabba4" stroke="#cabba4" stroke-width="1.5"/><path d="M1840.8,434.7 L1854.5,447.5 L1857.7,466.8 L1844.2,454.4Z" fill="#c8baa4" stroke="#c8baa4" stroke-width="1.5"/><path d="M1844.2,454.4 L1857.7,466.8 L1860.2,486.2 L1846.8,474.3Z" fill="#c7b9a4" stroke="#c7b9a4" stroke-width="1.5"/><path d="M1846.8,474.3 L1860.2,486.2 L1861.9,505.8 L1848.5,494.3Z" fill="#c5b7a3" stroke="#c5b7a3" stroke-width="1.5"/><path d="M1848.5,494.3 L1861.9,505.8 L1862.9,525.5 L1849.5,514.5Z" fill="#c3b6a3" stroke="#c3b6a3" stroke-width="1.5"/><path d="M1849.5,514.5 L1862.9,525.5 L1863.0,545.3 L1849.7,534.8Z" fill="#c2b5a2" stroke="#c2b5a2" stroke-width="1.5"/><path d="M1849.7,534.8 L1863.0,545.3 L1862.4,565.2 L1849.0,555.2Z" fill="#c0b4a2" stroke="#c0b4a2" stroke-width="1.5"/>
<path d="M1303.6,302.3 L1311.0,296.7 L1318.5,291.3 L1326.0,286.0 L1333.5,280.8 L1341.2,275.8 L1348.9,270.9 L1356.6,266.1 L1364.5,261.5 L1372.3,257.0 L1380.3,252.6 L1388.2,248.4 L1396.3,244.3 L1404.3,240.3 L1412.5,236.5 L1420.6,232.9 L1428.8,229.4 L1437.1,226.1 L1445.4,222.9 L1453.7,219.9 L1462.0,217.1 L1470.4,214.4 L1478.8,211.9 L1487.3,209.6 L1495.7,207.4 L1504.2,205.4 L1512.7,203.6 L1521.2,202.0 L1529.7,200.6 L1538.2,199.4 L1546.7,198.4 L1555.2,197.6 L1563.7,196.9 L1572.3,196.5 L1580.7,196.3 L1589.2,196.3 L1597.7,196.6 L1606.1,197.0 L1614.5,197.7 L1622.9,198.6 L1631.2,199.7 L1639.5,201.1 L1647.7,202.7 L1655.9,204.5 L1664.0,206.6 L1672.1,209.0 L1680.1,211.6 L1688.0,214.4 L1695.8,217.5 L1703.6,220.9 L1711.2,224.6 L1718.7,228.5 L1726.2,232.7 L1733.5,237.2 L1740.7,241.9 L1747.7,246.9 L1754.6,252.3 L1761.4,257.9 L1768.0,263.8 L1774.5,269.9 L1780.8,276.4" stroke="#f6c890" stroke-width="10" fill="none" opacity="0.6" filter="url(#blur2)"/><g style="mix-blend-mode:multiply" opacity="0.75"><rect x="1303" y="193" width="560" height="372" filter="url(#relief)"/></g><g filter="url(#blur2)">
<path d="M1320.0,300.0 L1400.0,272.0 L1480.0,262.0 L1560.0,282.0 L1590.0,320.0 L1545.0,356.0 L1508.0,393.0 L1474.0,398.0 L1420.0,404.0 L1375.0,377.0 L1351.0,342.0 L1330.0,330.0Z" fill="#ece0cc" opacity="0.45"/>
<path d="M1500.0,395.0 L1545.0,370.0 L1600.0,400.0 L1640.0,450.0 L1660.0,500.0 L1600.0,505.0 L1530.0,470.0Z" fill="#8a7c68" opacity="0.35"/>
</g>
<path d="M1348.1,350.0 L1372.4,385.4 L1396.2,401.0 L1419.3,413.4 L1448.4,411.5 L1474.5,407.5 L1509.5,402.2 L1532.5,380.5 L1547.6,364.4 L1542.4,359.6 L1527.5,375.5 L1506.5,395.8 L1473.5,400.5 L1447.6,404.5 L1420.7,406.6 L1399.8,395.0 L1377.6,380.6 L1353.9,346.0Z" fill="#5a4c3c" opacity="0.55" filter="url(#rough)"/>
<path d="M1348.5,343.7 L1372.8,379.1 L1396.5,394.6 L1419.4,406.9 L1448.3,405.0 L1474.4,401.0 L1509.3,395.7 L1532.1,374.1 L1547.2,358.1 L1542.8,353.9 L1527.9,369.9 L1506.7,390.3 L1473.6,395.0 L1447.7,399.0 L1420.6,401.1 L1399.5,389.4 L1377.2,374.9 L1353.5,340.3Z" fill="#faf2e4" opacity="0.8" filter="url(#rough)"/>
<path d="M1603.2,299.6 L1641.2,327.6 L1679.4,363.3 L1718.2,395.4 L1756.9,420.5 L1794.5,445.4 L1831.2,485.5 L1854.3,519.1 L1867.8,555.1 L1884.2,548.9 L1869.7,510.9 L1844.8,474.5 L1805.5,432.6 L1765.1,407.5 L1725.8,384.6 L1686.6,354.7 L1646.8,320.4 L1606.8,294.4Z" fill="#fbf4e6" opacity="0.8" filter="url(#rough)"/>
<path d="M1541.5,350.4 L1583.4,378.3 L1621.5,417.9 L1660.2,450.1 L1699.4,478.0 L1737.2,498.2 L1776.5,521.8 L1815.8,539.0 L1847.6,554.9 L1854.4,541.1 L1822.2,525.0 L1783.5,508.2 L1744.8,484.8 L1706.6,466.0 L1667.8,439.9 L1628.5,410.1 L1588.6,371.7 L1544.5,345.6Z" fill="#fbf4e6" opacity="0.8" filter="url(#rough)"/>
<path d="M1550.3,267.2 L1575.0,281.8 L1603.6,299.4 L1606.4,294.6 L1577.0,278.2 L1551.7,264.8Z" fill="#fbf4e6" opacity="0.8" filter="url(#rough)"/>
<path d="M1596.1,309.3 L1633.3,337.9 L1671.1,374.0 L1709.7,406.9 L1748.3,432.7 L1785.0,457.5 L1820.9,497.1 L1843.3,529.7 L1856.6,565.1 L1883.4,554.9 L1868.7,516.3 L1843.1,478.9 L1803.0,436.5 L1761.7,411.3 L1722.3,389.1 L1682.9,360.0 L1642.7,326.1 L1601.9,300.7Z" fill="#2e261c" opacity="0.9" filter="url(#rough)"/>
<path d="M1600.5,301.8 L1599.7,306.5 M1604.0,305.6 L1603.2,310.5 M1605.1,307.3 L1604.6,310.7 M1612.6,314.0 L1611.6,318.2 M1613.0,314.7 L1611.6,321.3 M1617.3,312.5 L1616.0,318.7 M1618.8,315.0 L1617.1,321.3 M1618.0,319.0 L1616.3,323.6 M1628.1,319.4 L1626.5,324.0 M1643.2,337.2 L1641.7,344.4 M1658.5,352.7 L1656.2,357.7 M1668.0,351.1 L1665.1,359.2 M1665.2,358.3 L1664.3,363.0 M1669.3,358.3 L1667.4,362.8 M1669.9,357.9 L1667.1,364.0 M1671.5,355.2 L1668.6,363.8 M1673.4,356.8 L1671.6,360.8 M1677.4,369.0 L1676.4,375.8 M1684.3,369.0 L1682.7,376.5 M1694.0,373.9 L1692.4,384.5 M1693.5,378.1 L1692.3,385.5 M1694.7,379.7 L1693.3,387.8 M1710.7,386.7 L1709.2,391.3 M1714.8,391.0 L1712.7,396.8 M1714.6,395.7 L1714.3,402.7 M1718.6,395.1 L1717.1,402.5 M1718.8,398.6 L1718.5,409.5 M1728.5,404.8 L1726.6,412.6 M1731.0,398.9 L1730.3,411.2 M1732.6,407.0 L1731.0,416.3 M1739.3,409.1 L1736.7,416.3 M1747.8,415.9 L1746.6,421.8 M1754.6,410.0 L1752.5,422.5 M1751.7,417.1 L1750.6,427.2 M1752.5,417.0 L1750.6,427.0 M1757.0,415.2 L1755.1,426.2 M1770.2,422.2 L1768.7,434.8 M1766.5,429.8 L1762.4,441.1 M1802.2,446.2 L1796.3,454.3 M1806.4,453.0 L1803.9,459.6 M1803.7,457.1 L1799.5,463.7 M1808.4,453.8 L1805.3,460.5 M1807.5,456.5 L1802.2,466.2 M1810.8,460.3 L1807.4,469.4 M1811.4,465.9 L1806.8,472.6 M1824.3,472.5 L1819.2,478.7 M1840.6,486.9 L1830.6,498.0 M1841.1,488.3 L1836.8,493.1 M1837.0,490.8 L1831.7,501.0 M1842.7,487.6 L1834.1,500.2 M1844.4,486.5 L1836.2,500.6 M1844.3,505.4 L1837.1,512.6 M1848.4,503.8 L1839.3,511.6 M1850.5,512.2 L1840.8,522.0 M1848.4,514.9 L1841.0,521.8 M1857.8,513.1 L1846.8,523.0 M1863.8,518.3 L1856.0,524.4 M1863.5,519.1 L1856.9,525.2 M1869.7,531.6 L1861.1,537.7 M1870.4,531.4 L1858.8,541.1 M1872.6,536.3 L1860.9,546.4 M1876.7,545.4 L1865.3,552.9 M1872.5,556.4 L1860.6,565.6" stroke="#f2e8d6" stroke-width="2.2" stroke-linecap="round" opacity="0.55" filter="url(#blur1)"/>
<path d="M1534.6,359.9 L1575.7,388.4 L1613.2,428.4 L1651.8,461.3 L1691.1,489.8 L1728.8,510.5 L1768.2,534.2 L1807.7,551.5 L1839.3,567.3 L1850.7,544.7 L1818.3,528.5 L1779.8,511.8 L1741.2,488.5 L1702.9,470.2 L1664.2,444.7 L1624.8,415.6 L1584.3,377.6 L1539.4,352.1Z" fill="#2e261c" opacity="0.9" filter="url(#rough)"/>
<path d="M1538.9,356.4 L1537.2,360.9 M1542.3,355.6 L1540.9,360.5 M1548.7,359.8 L1548.3,364.5 M1555.1,366.1 L1554.1,370.0 M1555.3,367.3 L1554.8,371.2 M1559.5,365.5 L1558.6,370.5 M1559.4,367.6 L1558.1,372.7 M1560.1,367.8 L1559.0,371.4 M1577.9,381.0 L1576.3,383.9 M1579.1,383.5 L1577.5,387.6 M1584.6,387.3 L1583.5,392.0 M1591.5,393.0 L1588.3,400.0 M1592.9,393.5 L1589.9,398.7 M1594.4,394.1 L1592.0,400.6 M1596.8,392.2 L1593.7,398.4 M1597.8,394.4 L1594.2,401.8 M1608.9,408.4 L1607.7,412.4 M1610.5,409.8 L1608.9,413.4 M1608.0,412.0 L1607.1,417.0 M1613.7,411.4 L1609.9,419.0 M1628.1,426.8 L1626.1,432.6 M1631.2,430.1 L1629.9,439.3 M1634.5,428.4 L1633.4,436.0 M1638.3,428.8 L1634.9,437.6 M1640.6,438.7 L1639.7,448.0 M1645.8,438.3 L1644.6,442.8 M1646.9,443.6 L1645.1,451.6 M1652.9,442.5 L1651.4,450.6 M1651.8,449.2 L1649.0,457.0 M1660.2,450.8 L1658.7,456.2 M1665.8,451.4 L1664.7,459.6 M1675.9,455.0 L1675.5,466.5 M1675.0,460.5 L1674.0,466.1 M1677.2,459.8 L1676.5,468.1 M1684.2,462.9 L1681.3,473.3 M1683.8,463.2 L1683.8,472.7 M1685.2,470.7 L1683.4,481.9 M1690.0,469.1 L1688.6,480.0 M1701.3,474.9 L1701.1,481.2 M1700.5,484.5 L1699.9,491.5 M1714.1,489.2 L1712.1,499.0 M1733.8,493.5 L1732.8,499.3 M1740.2,497.2 L1739.7,504.6 M1741.8,498.0 L1739.7,506.5 M1748.3,509.7 L1746.1,519.3 M1757.6,511.2 L1757.0,524.3 M1772.8,518.4 L1771.0,528.1 M1770.0,522.7 L1770.4,533.7 M1773.4,518.3 L1774.3,528.6 M1780.1,520.2 L1780.8,526.6 M1782.1,525.9 L1781.8,537.3 M1786.0,526.7 L1786.0,533.1 M1790.3,527.7 L1791.0,534.8 M1807.9,530.2 L1806.5,536.2 M1806.1,537.0 L1803.9,547.9 M1810.6,530.2 L1809.8,543.1 M1829.4,538.4 L1828.3,550.5 M1828.5,540.4 L1828.7,554.1 M1828.1,549.2 L1827.0,558.7 M1834.2,540.0 L1832.4,552.3 M1845.2,552.4 L1844.4,559.4" stroke="#f2e8d6" stroke-width="2.2" stroke-linecap="round" opacity="0.55" filter="url(#blur1)"/>
<path d="M1543.9,276.0 L1568.3,291.0 L1596.7,309.0 L1601.3,301.0 L1571.7,285.0 L1546.1,272.0Z" fill="#2e261c" opacity="0.9" filter="url(#rough)"/>
<path d="M1780.0,440.0 L1800.0,448.0 L1815.0,470.0 L1800.0,472.0 L1785.0,455.0Z" fill="#fffaf0" opacity="0.8" filter="url(#blur2)"/>
<g fill="none" stroke-linecap="round" stroke-linejoin="round">
<path d="M1350.0,300.0 L1390.0,290.0 L1430.0,285.0 L1470.0,300.0" stroke="#f6eedf" stroke-width="4.0" opacity="0.7" filter="url(#rough)"/>
<path d="M1348.0,306.0 L1388.0,296.0 L1428.0,291.0 L1468.0,306.0" stroke="#4a3f32" stroke-width="3.5" opacity="0.55" filter="url(#rough)"/>
<path d="M1541.0,278.0 L1570.0,290.0 L1600.0,302.0" stroke="#f6eedf" stroke-width="4.0" opacity="0.7" filter="url(#rough)"/>
<path d="M1539.0,284.0 L1568.0,296.0 L1598.0,308.0" stroke="#4a3f32" stroke-width="3.5" opacity="0.55" filter="url(#rough)"/>
<path d="M1640.0,265.0 L1700.0,285.0 L1760.0,310.0 L1800.0,335.0 L1830.0,370.0" stroke="#f6eedf" stroke-width="4.0" opacity="0.7" filter="url(#rough)"/>
<path d="M1638.0,271.0 L1698.0,291.0 L1758.0,316.0 L1798.0,341.0 L1828.0,376.0" stroke="#4a3f32" stroke-width="3.5" opacity="0.55" filter="url(#rough)"/>
<path d="M1560.0,440.0 L1600.0,470.0 L1640.0,500.0 L1680.0,530.0" stroke="#f6eedf" stroke-width="4.0" opacity="0.7" filter="url(#rough)"/>
<path d="M1558.0,446.0 L1598.0,476.0 L1638.0,506.0 L1678.0,536.0" stroke="#4a3f32" stroke-width="3.5" opacity="0.55" filter="url(#rough)"/>
<path d="M1420.0,250.0 L1480.0,230.0 L1540.0,222.0" stroke="#f6eedf" stroke-width="4.0" opacity="0.7" filter="url(#rough)"/>
<path d="M1418.0,256.0 L1478.0,236.0 L1538.0,228.0" stroke="#4a3f32" stroke-width="3.5" opacity="0.55" filter="url(#rough)"/>
<path d="M1390.0,330.0 L1430.0,320.0 L1470.0,335.0 L1500.0,330.0" stroke="#f6eedf" stroke-width="4.0" opacity="0.7" filter="url(#rough)"/>
<path d="M1388.0,336.0 L1428.0,326.0 L1468.0,341.0 L1498.0,336.0" stroke="#4a3f32" stroke-width="3.5" opacity="0.55" filter="url(#rough)"/>
</g>
<g filter="url(#blur1)" opacity="0.4">
<ellipse cx="1392.5" cy="319.8" rx="4.8" ry="2.0" transform="rotate(-10 1392.5 319.8)" fill="#4a3e30"/>
<ellipse cx="1393.3" cy="360.2" rx="4.9" ry="2.1" transform="rotate(-10 1393.3 360.2)" fill="#f6eee0"/>
<ellipse cx="1449.4" cy="285.9" rx="5.3" ry="2.2" transform="rotate(-39 1449.4 285.9)" fill="#f6eee0"/>
<ellipse cx="1406.2" cy="390.2" rx="3.6" ry="1.5" transform="rotate(6 1406.2 390.2)" fill="#f6eee0"/>
<ellipse cx="1429.4" cy="333.2" rx="4.6" ry="1.9" transform="rotate(-25 1429.4 333.2)" fill="#f6eee0"/>
<ellipse cx="1570.9" cy="325.7" rx="4.1" ry="1.7" transform="rotate(5 1570.9 325.7)" fill="#f6eee0"/>
<ellipse cx="1401.7" cy="374.5" rx="4.1" ry="1.7" transform="rotate(2 1401.7 374.5)" fill="#f6eee0"/>
<ellipse cx="1421.0" cy="328.9" rx="3.8" ry="1.6" transform="rotate(6 1421.0 328.9)" fill="#f6eee0"/>
<ellipse cx="1519.5" cy="320.6" rx="4.2" ry="1.8" transform="rotate(-31 1519.5 320.6)" fill="#4a3e30"/>
<ellipse cx="1334.4" cy="329.6" rx="4.1" ry="1.7" transform="rotate(-10 1334.4 329.6)" fill="#f6eee0"/>
<ellipse cx="1457.4" cy="324.9" rx="3.7" ry="1.6" transform="rotate(-29 1457.4 324.9)" fill="#f6eee0"/>
<ellipse cx="1424.6" cy="354.9" rx="5.3" ry="2.2" transform="rotate(-5 1424.6 354.9)" fill="#4a3e30"/>
<ellipse cx="1457.2" cy="374.4" rx="4.4" ry="1.9" transform="rotate(1 1457.2 374.4)" fill="#4a3e30"/>
<ellipse cx="1509.2" cy="272.0" rx="5.8" ry="2.4" transform="rotate(-19 1509.2 272.0)" fill="#4a3e30"/>
<ellipse cx="1487.0" cy="297.8" rx="5.5" ry="2.3" transform="rotate(-27 1487.0 297.8)" fill="#4a3e30"/>
<ellipse cx="1419.2" cy="329.5" rx="2.8" ry="1.2" transform="rotate(-39 1419.2 329.5)" fill="#4a3e30"/>
<ellipse cx="1497.3" cy="294.2" rx="5.3" ry="2.2" transform="rotate(7 1497.3 294.2)" fill="#f6eee0"/>
<ellipse cx="1356.1" cy="294.8" rx="5.4" ry="2.3" transform="rotate(-39 1356.1 294.8)" fill="#f6eee0"/>
<ellipse cx="1540.8" cy="297.2" rx="3.7" ry="1.6" transform="rotate(-6 1540.8 297.2)" fill="#f6eee0"/>
<ellipse cx="1482.6" cy="346.3" rx="3.1" ry="1.3" transform="rotate(3 1482.6 346.3)" fill="#4a3e30"/>
<ellipse cx="1456.7" cy="344.7" rx="4.8" ry="2.0" transform="rotate(-23 1456.7 344.7)" fill="#f6eee0"/>
<ellipse cx="1539.0" cy="318.7" rx="4.2" ry="1.8" transform="rotate(-31 1539.0 318.7)" fill="#f6eee0"/>
<ellipse cx="1396.3" cy="324.8" rx="5.0" ry="2.1" transform="rotate(-22 1396.3 324.8)" fill="#f6eee0"/>
<ellipse cx="1475.7" cy="366.5" rx="3.9" ry="1.7" transform="rotate(-6 1475.7 366.5)" fill="#f6eee0"/>
<ellipse cx="1476.0" cy="392.3" rx="2.7" ry="1.2" transform="rotate(5 1476.0 392.3)" fill="#f6eee0"/>
<ellipse cx="1500.2" cy="329.5" rx="2.9" ry="1.2" transform="rotate(-25 1500.2 329.5)" fill="#f6eee0"/>
<ellipse cx="1417.9" cy="286.5" rx="4.2" ry="1.8" transform="rotate(-16 1417.9 286.5)" fill="#4a3e30"/>
<ellipse cx="1420.8" cy="377.3" rx="4.3" ry="1.8" transform="rotate(-16 1420.8 377.3)" fill="#4a3e30"/>
<ellipse cx="1555.0" cy="378.2" rx="3.1" ry="1.3" transform="rotate(-31 1555.0 378.2)" fill="#4a3e30"/>
<ellipse cx="1361.1" cy="363.3" rx="2.7" ry="1.2" transform="rotate(-35 1361.1 363.3)" fill="#f6eee0"/>
<ellipse cx="1364.3" cy="347.8" rx="3.6" ry="1.5" transform="rotate(-5 1364.3 347.8)" fill="#4a3e30"/>
<ellipse cx="1386.8" cy="317.1" rx="5.5" ry="2.3" transform="rotate(-24 1386.8 317.1)" fill="#4a3e30"/>
<ellipse cx="1456.5" cy="362.2" rx="5.8" ry="2.5" transform="rotate(-38 1456.5 362.2)" fill="#f6eee0"/>
<ellipse cx="1358.5" cy="295.2" rx="3.1" ry="1.3" transform="rotate(-23 1358.5 295.2)" fill="#f6eee0"/>
<ellipse cx="1523.0" cy="367.7" rx="3.0" ry="1.2" transform="rotate(-31 1523.0 367.7)" fill="#f6eee0"/>
<ellipse cx="1423.6" cy="378.5" rx="4.2" ry="1.8" transform="rotate(-27 1423.6 378.5)" fill="#f6eee0"/>
<ellipse cx="1405.7" cy="337.9" rx="4.6" ry="1.9" transform="rotate(-30 1405.7 337.9)" fill="#f6eee0"/>
<ellipse cx="1486.4" cy="366.1" rx="3.8" ry="1.6" transform="rotate(-8 1486.4 366.1)" fill="#f6eee0"/>
<ellipse cx="1363.9" cy="297.8" rx="2.7" ry="1.2" transform="rotate(-23 1363.9 297.8)" fill="#f6eee0"/>
<ellipse cx="1520.4" cy="342.8" rx="5.2" ry="2.2" transform="rotate(-24 1520.4 342.8)" fill="#f6eee0"/>
<ellipse cx="1421.5" cy="342.3" rx="5.4" ry="2.3" transform="rotate(-4 1421.5 342.3)" fill="#f6eee0"/>
<ellipse cx="1547.1" cy="358.9" rx="4.1" ry="1.8" transform="rotate(-18 1547.1 358.9)" fill="#f6eee0"/>
<ellipse cx="1387.1" cy="390.4" rx="3.5" ry="1.5" transform="rotate(-8 1387.1 390.4)" fill="#f6eee0"/>
<ellipse cx="1530.5" cy="341.6" rx="4.3" ry="1.8" transform="rotate(-2 1530.5 341.6)" fill="#4a3e30"/>
<ellipse cx="1489.8" cy="339.4" rx="3.4" ry="1.4" transform="rotate(-38 1489.8 339.4)" fill="#f6eee0"/>
<ellipse cx="1482.3" cy="390.3" rx="4.1" ry="1.7" transform="rotate(-0 1482.3 390.3)" fill="#f6eee0"/>
<ellipse cx="1455.1" cy="327.9" rx="2.7" ry="1.2" transform="rotate(-3 1455.1 327.9)" fill="#f6eee0"/>
<ellipse cx="1428.7" cy="355.9" rx="4.1" ry="1.7" transform="rotate(4 1428.7 355.9)" fill="#f6eee0"/>
<ellipse cx="1554.6" cy="316.4" rx="2.9" ry="1.2" transform="rotate(-15 1554.6 316.4)" fill="#4a3e30"/>
<ellipse cx="1337.7" cy="333.1" rx="3.8" ry="1.6" transform="rotate(-7 1337.7 333.1)" fill="#f6eee0"/>
<ellipse cx="1519.3" cy="377.8" rx="5.7" ry="2.4" transform="rotate(-30 1519.3 377.8)" fill="#4a3e30"/>
<ellipse cx="1430.0" cy="309.4" rx="2.7" ry="1.1" transform="rotate(-25 1430.0 309.4)" fill="#f6eee0"/>
<ellipse cx="1437.3" cy="318.8" rx="5.1" ry="2.2" transform="rotate(-36 1437.3 318.8)" fill="#f6eee0"/>
<ellipse cx="1517.5" cy="367.1" rx="2.6" ry="1.1" transform="rotate(-39 1517.5 367.1)" fill="#f6eee0"/>
<ellipse cx="1495.4" cy="281.0" rx="5.2" ry="2.2" transform="rotate(-29 1495.4 281.0)" fill="#4a3e30"/>
<ellipse cx="1533.7" cy="347.5" rx="5.1" ry="2.2" transform="rotate(-27 1533.7 347.5)" fill="#4a3e30"/>
<ellipse cx="1578.4" cy="307.9" rx="4.7" ry="2.0" transform="rotate(-28 1578.4 307.9)" fill="#f6eee0"/>
<ellipse cx="1404.7" cy="341.1" rx="3.3" ry="1.4" transform="rotate(-40 1404.7 341.1)" fill="#f6eee0"/>
<ellipse cx="1421.2" cy="354.0" rx="4.3" ry="1.8" transform="rotate(-39 1421.2 354.0)" fill="#4a3e30"/>
<ellipse cx="1491.5" cy="361.5" rx="2.7" ry="1.1" transform="rotate(9 1491.5 361.5)" fill="#4a3e30"/>
<ellipse cx="1533.7" cy="370.3" rx="2.9" ry="1.2" transform="rotate(-3 1533.7 370.3)" fill="#4a3e30"/>
<ellipse cx="1411.0" cy="313.0" rx="5.8" ry="2.5" transform="rotate(-25 1411.0 313.0)" fill="#4a3e30"/>
<ellipse cx="1454.0" cy="372.0" rx="3.9" ry="1.6" transform="rotate(-31 1454.0 372.0)" fill="#f6eee0"/>
<ellipse cx="1451.9" cy="278.6" rx="4.1" ry="1.7" transform="rotate(-28 1451.9 278.6)" fill="#f6eee0"/>
<ellipse cx="1563.9" cy="317.5" rx="3.3" ry="1.4" transform="rotate(-26 1563.9 317.5)" fill="#4a3e30"/>
<ellipse cx="1442.5" cy="359.9" rx="3.2" ry="1.4" transform="rotate(-40 1442.5 359.9)" fill="#f6eee0"/>
<ellipse cx="1567.4" cy="343.3" rx="5.6" ry="2.4" transform="rotate(-9 1567.4 343.3)" fill="#4a3e30"/>
<ellipse cx="1364.9" cy="351.1" rx="3.2" ry="1.4" transform="rotate(-23 1364.9 351.1)" fill="#f6eee0"/>
<ellipse cx="1343.7" cy="315.9" rx="3.2" ry="1.3" transform="rotate(-34 1343.7 315.9)" fill="#4a3e30"/>
<ellipse cx="1402.3" cy="295.4" rx="4.4" ry="1.9" transform="rotate(3 1402.3 295.4)" fill="#f6eee0"/>
<ellipse cx="1549.9" cy="375.3" rx="5.6" ry="2.4" transform="rotate(0 1549.9 375.3)" fill="#f6eee0"/>
<ellipse cx="1344.6" cy="365.7" rx="3.9" ry="1.7" transform="rotate(-12 1344.6 365.7)" fill="#f6eee0"/>
<ellipse cx="1467.8" cy="306.2" rx="3.3" ry="1.4" transform="rotate(-1 1467.8 306.2)" fill="#4a3e30"/>
<ellipse cx="1520.9" cy="297.9" rx="4.8" ry="2.0" transform="rotate(-14 1520.9 297.9)" fill="#f6eee0"/>
<ellipse cx="1560.2" cy="317.0" rx="4.1" ry="1.8" transform="rotate(-30 1560.2 317.0)" fill="#f6eee0"/>
<ellipse cx="1450.8" cy="300.2" rx="5.1" ry="2.2" transform="rotate(9 1450.8 300.2)" fill="#f6eee0"/>
<ellipse cx="1468.8" cy="317.8" rx="5.6" ry="2.4" transform="rotate(-13 1468.8 317.8)" fill="#4a3e30"/>
<ellipse cx="1476.3" cy="282.2" rx="2.9" ry="1.2" transform="rotate(-37 1476.3 282.2)" fill="#4a3e30"/>
<ellipse cx="1439.7" cy="313.1" rx="2.7" ry="1.1" transform="rotate(-33 1439.7 313.1)" fill="#4a3e30"/>
<ellipse cx="1450.4" cy="328.6" rx="5.3" ry="2.2" transform="rotate(-21 1450.4 328.6)" fill="#4a3e30"/>
<ellipse cx="1392.4" cy="394.6" rx="5.6" ry="2.4" transform="rotate(-2 1392.4 394.6)" fill="#4a3e30"/>
<ellipse cx="1361.8" cy="349.4" rx="2.6" ry="1.1" transform="rotate(3 1361.8 349.4)" fill="#f6eee0"/>
<ellipse cx="1443.1" cy="325.6" rx="5.2" ry="2.2" transform="rotate(10 1443.1 325.6)" fill="#4a3e30"/>
<ellipse cx="1498.4" cy="324.1" rx="5.0" ry="2.1" transform="rotate(-7 1498.4 324.1)" fill="#f6eee0"/>
<ellipse cx="1533.6" cy="302.1" rx="5.6" ry="2.4" transform="rotate(4 1533.6 302.1)" fill="#4a3e30"/>
<ellipse cx="1452.8" cy="275.5" rx="5.8" ry="2.4" transform="rotate(-7 1452.8 275.5)" fill="#f6eee0"/>
<ellipse cx="1375.0" cy="338.5" rx="5.4" ry="2.3" transform="rotate(6 1375.0 338.5)" fill="#f6eee0"/>
<ellipse cx="1384.3" cy="370.3" rx="4.4" ry="1.9" transform="rotate(9 1384.3 370.3)" fill="#4a3e30"/>
<ellipse cx="1484.7" cy="373.6" rx="5.1" ry="2.2" transform="rotate(-16 1484.7 373.6)" fill="#f6eee0"/>
<ellipse cx="1424.3" cy="399.8" rx="5.3" ry="2.3" transform="rotate(-26 1424.3 399.8)" fill="#f6eee0"/>
<ellipse cx="1413.2" cy="386.2" rx="3.5" ry="1.5" transform="rotate(-17 1413.2 386.2)" fill="#f6eee0"/>
<ellipse cx="1484.3" cy="367.9" rx="4.9" ry="2.1" transform="rotate(-17 1484.3 367.9)" fill="#4a3e30"/>
<ellipse cx="1383.9" cy="308.7" rx="5.0" ry="2.1" transform="rotate(-29 1383.9 308.7)" fill="#4a3e30"/>
<ellipse cx="1585.8" cy="330.1" rx="3.6" ry="1.5" transform="rotate(3 1585.8 330.1)" fill="#f6eee0"/>
<ellipse cx="1550.3" cy="321.4" rx="3.2" ry="1.4" transform="rotate(4 1550.3 321.4)" fill="#f6eee0"/>
<ellipse cx="1392.2" cy="284.0" rx="4.4" ry="1.9" transform="rotate(-31 1392.2 284.0)" fill="#4a3e30"/>
<ellipse cx="1475.2" cy="359.6" rx="5.8" ry="2.5" transform="rotate(-21 1475.2 359.6)" fill="#f6eee0"/>
<ellipse cx="1443.1" cy="381.1" rx="2.8" ry="1.2" transform="rotate(-15 1443.1 381.1)" fill="#f6eee0"/>
<ellipse cx="1502.6" cy="411.4" rx="2.5" ry="1.0" transform="rotate(-37 1502.6 411.4)" fill="#4a3e30"/>
<ellipse cx="1627.7" cy="406.2" rx="3.0" ry="1.2" transform="rotate(-40 1627.7 406.2)" fill="#4a3e30"/>
<ellipse cx="1504.0" cy="392.5" rx="4.0" ry="1.7" transform="rotate(-11 1504.0 392.5)" fill="#f6eee0"/>
<ellipse cx="1537.9" cy="492.9" rx="3.8" ry="1.6" transform="rotate(-26 1537.9 492.9)" fill="#4a3e30"/>
<ellipse cx="1625.3" cy="439.3" rx="2.4" ry="1.0" transform="rotate(-2 1625.3 439.3)" fill="#4a3e30"/>
<ellipse cx="1587.7" cy="468.5" rx="3.7" ry="1.6" transform="rotate(-3 1587.7 468.5)" fill="#4a3e30"/>
<ellipse cx="1508.9" cy="392.2" rx="4.2" ry="1.8" transform="rotate(-23 1508.9 392.2)" fill="#4a3e30"/>
<ellipse cx="1638.8" cy="377.6" rx="3.3" ry="1.4" transform="rotate(-13 1638.8 377.6)" fill="#f6eee0"/>
<ellipse cx="1525.2" cy="376.4" rx="2.4" ry="1.0" transform="rotate(-17 1525.2 376.4)" fill="#f6eee0"/>
<ellipse cx="1511.6" cy="457.7" rx="3.5" ry="1.5" transform="rotate(-2 1511.6 457.7)" fill="#4a3e30"/>
<ellipse cx="1656.4" cy="408.0" rx="2.6" ry="1.1" transform="rotate(-24 1656.4 408.0)" fill="#f6eee0"/>
<ellipse cx="1630.3" cy="458.3" rx="3.9" ry="1.7" transform="rotate(1 1630.3 458.3)" fill="#f6eee0"/>
<ellipse cx="1521.4" cy="433.8" rx="4.3" ry="1.8" transform="rotate(-6 1521.4 433.8)" fill="#f6eee0"/>
<ellipse cx="1622.0" cy="464.8" rx="2.9" ry="1.2" transform="rotate(-16 1622.0 464.8)" fill="#4a3e30"/>
<ellipse cx="1647.3" cy="398.5" rx="2.6" ry="1.1" transform="rotate(-24 1647.3 398.5)" fill="#f6eee0"/>
<ellipse cx="1531.6" cy="424.1" rx="3.9" ry="1.6" transform="rotate(-11 1531.6 424.1)" fill="#4a3e30"/>
<ellipse cx="1606.3" cy="443.1" rx="4.3" ry="1.8" transform="rotate(3 1606.3 443.1)" fill="#f6eee0"/>
<ellipse cx="1611.5" cy="421.3" rx="4.4" ry="1.9" transform="rotate(-35 1611.5 421.3)" fill="#f6eee0"/>
<ellipse cx="1540.8" cy="385.5" rx="3.1" ry="1.3" transform="rotate(6 1540.8 385.5)" fill="#4a3e30"/>
<ellipse cx="1546.7" cy="491.1" rx="4.0" ry="1.7" transform="rotate(-2 1546.7 491.1)" fill="#f6eee0"/>
<ellipse cx="1596.6" cy="458.6" rx="2.3" ry="1.0" transform="rotate(-29 1596.6 458.6)" fill="#4a3e30"/>
<ellipse cx="1600.1" cy="487.6" rx="2.7" ry="1.2" transform="rotate(-39 1600.1 487.6)" fill="#f6eee0"/>
<ellipse cx="1587.0" cy="485.8" rx="2.3" ry="1.0" transform="rotate(-13 1587.0 485.8)" fill="#f6eee0"/>
<ellipse cx="1516.8" cy="503.3" rx="3.9" ry="1.7" transform="rotate(-37 1516.8 503.3)" fill="#f6eee0"/>
<ellipse cx="1635.7" cy="429.0" rx="2.0" ry="0.9" transform="rotate(7 1635.7 429.0)" fill="#f6eee0"/>
<ellipse cx="1539.7" cy="375.2" rx="2.4" ry="1.0" transform="rotate(-17 1539.7 375.2)" fill="#f6eee0"/>
<ellipse cx="1522.6" cy="383.3" rx="3.1" ry="1.3" transform="rotate(-21 1522.6 383.3)" fill="#4a3e30"/>
<ellipse cx="1625.4" cy="441.5" rx="2.1" ry="0.9" transform="rotate(-40 1625.4 441.5)" fill="#4a3e30"/>
<ellipse cx="1510.6" cy="371.7" rx="3.9" ry="1.6" transform="rotate(-15 1510.6 371.7)" fill="#4a3e30"/>
<ellipse cx="1621.2" cy="407.1" rx="4.3" ry="1.8" transform="rotate(-5 1621.2 407.1)" fill="#4a3e30"/>
<ellipse cx="1507.1" cy="499.1" rx="3.9" ry="1.7" transform="rotate(-12 1507.1 499.1)" fill="#4a3e30"/>
<ellipse cx="1576.6" cy="477.3" rx="4.3" ry="1.8" transform="rotate(8 1576.6 477.3)" fill="#4a3e30"/>
<ellipse cx="1544.3" cy="393.1" rx="3.6" ry="1.5" transform="rotate(-3 1544.3 393.1)" fill="#f6eee0"/>
<ellipse cx="1637.4" cy="430.9" rx="2.4" ry="1.0" transform="rotate(-5 1637.4 430.9)" fill="#f6eee0"/>
<ellipse cx="1654.0" cy="464.3" rx="2.4" ry="1.0" transform="rotate(-18 1654.0 464.3)" fill="#f6eee0"/>
<ellipse cx="1561.9" cy="497.0" rx="3.3" ry="1.4" transform="rotate(-15 1561.9 497.0)" fill="#f6eee0"/>
<ellipse cx="1533.8" cy="403.4" rx="3.3" ry="1.4" transform="rotate(-12 1533.8 403.4)" fill="#f6eee0"/>
<ellipse cx="1517.0" cy="481.0" rx="3.7" ry="1.5" transform="rotate(8 1517.0 481.0)" fill="#4a3e30"/>
<ellipse cx="1540.9" cy="426.7" rx="4.2" ry="1.8" transform="rotate(3 1540.9 426.7)" fill="#f6eee0"/>
<ellipse cx="1569.2" cy="383.2" rx="3.0" ry="1.3" transform="rotate(-34 1569.2 383.2)" fill="#f6eee0"/>
<ellipse cx="1623.3" cy="504.8" rx="2.1" ry="0.9" transform="rotate(-33 1623.3 504.8)" fill="#f6eee0"/>
<ellipse cx="1652.3" cy="386.3" rx="4.1" ry="1.7" transform="rotate(-3 1652.3 386.3)" fill="#f6eee0"/>
<ellipse cx="1573.8" cy="475.7" rx="4.0" ry="1.7" transform="rotate(-25 1573.8 475.7)" fill="#4a3e30"/>
<ellipse cx="1551.8" cy="442.8" rx="2.3" ry="1.0" transform="rotate(-22 1551.8 442.8)" fill="#4a3e30"/>
<ellipse cx="1617.4" cy="423.1" rx="3.2" ry="1.4" transform="rotate(-31 1617.4 423.1)" fill="#4a3e30"/>
<ellipse cx="1557.4" cy="414.6" rx="4.3" ry="1.8" transform="rotate(-38 1557.4 414.6)" fill="#f6eee0"/>
<ellipse cx="1652.1" cy="444.1" rx="3.1" ry="1.3" transform="rotate(-30 1652.1 444.1)" fill="#f6eee0"/>
<ellipse cx="1502.3" cy="413.9" rx="3.1" ry="1.3" transform="rotate(-3 1502.3 413.9)" fill="#f6eee0"/>
<ellipse cx="1501.9" cy="370.9" rx="3.6" ry="1.5" transform="rotate(-10 1501.9 370.9)" fill="#f6eee0"/>
<ellipse cx="1652.5" cy="454.5" rx="3.8" ry="1.6" transform="rotate(-17 1652.5 454.5)" fill="#f6eee0"/>
<ellipse cx="1581.3" cy="397.9" rx="4.3" ry="1.8" transform="rotate(-4 1581.3 397.9)" fill="#f6eee0"/>
<ellipse cx="1531.8" cy="428.1" rx="2.8" ry="1.2" transform="rotate(-6 1531.8 428.1)" fill="#f6eee0"/>
<ellipse cx="1624.7" cy="399.3" rx="4.3" ry="1.8" transform="rotate(-30 1624.7 399.3)" fill="#4a3e30"/>
<ellipse cx="1637.9" cy="468.4" rx="4.3" ry="1.8" transform="rotate(-38 1637.9 468.4)" fill="#4a3e30"/>
<ellipse cx="1501.7" cy="404.9" rx="4.3" ry="1.8" transform="rotate(-39 1501.7 404.9)" fill="#4a3e30"/>
<ellipse cx="1647.4" cy="432.4" rx="2.8" ry="1.2" transform="rotate(-39 1647.4 432.4)" fill="#4a3e30"/>
<ellipse cx="1542.1" cy="425.0" rx="4.1" ry="1.7" transform="rotate(-12 1542.1 425.0)" fill="#f6eee0"/>
<ellipse cx="1604.9" cy="390.5" rx="2.5" ry="1.1" transform="rotate(-31 1604.9 390.5)" fill="#4a3e30"/>
<ellipse cx="1530.9" cy="392.2" rx="2.0" ry="0.8" transform="rotate(-6 1530.9 392.2)" fill="#f6eee0"/>
<ellipse cx="1563.9" cy="453.2" rx="4.2" ry="1.8" transform="rotate(-38 1563.9 453.2)" fill="#4a3e30"/>
<ellipse cx="1556.8" cy="437.0" rx="3.0" ry="1.3" transform="rotate(-9 1556.8 437.0)" fill="#f6eee0"/>
<ellipse cx="1636.8" cy="425.8" rx="3.9" ry="1.6" transform="rotate(-21 1636.8 425.8)" fill="#4a3e30"/>
<ellipse cx="1565.4" cy="416.0" rx="2.2" ry="0.9" transform="rotate(-24 1565.4 416.0)" fill="#4a3e30"/>
<ellipse cx="1627.9" cy="455.6" rx="2.7" ry="1.1" transform="rotate(2 1627.9 455.6)" fill="#4a3e30"/>
<ellipse cx="1535.8" cy="478.6" rx="4.4" ry="1.9" transform="rotate(-2 1535.8 478.6)" fill="#f6eee0"/>
<ellipse cx="1596.7" cy="431.4" rx="2.8" ry="1.2" transform="rotate(-10 1596.7 431.4)" fill="#4a3e30"/>
<ellipse cx="1550.5" cy="477.0" rx="3.9" ry="1.7" transform="rotate(9 1550.5 477.0)" fill="#f6eee0"/>
<ellipse cx="1632.6" cy="420.7" rx="2.9" ry="1.2" transform="rotate(-0 1632.6 420.7)" fill="#f6eee0"/>
<ellipse cx="1564.0" cy="426.9" rx="3.9" ry="1.7" transform="rotate(-40 1564.0 426.9)" fill="#f6eee0"/>
<ellipse cx="1525.4" cy="472.1" rx="3.1" ry="1.3" transform="rotate(-14 1525.4 472.1)" fill="#4a3e30"/>
<ellipse cx="1527.6" cy="461.1" rx="3.5" ry="1.5" transform="rotate(-14 1527.6 461.1)" fill="#4a3e30"/>
<ellipse cx="1649.0" cy="380.1" rx="3.3" ry="1.4" transform="rotate(-14 1649.0 380.1)" fill="#f6eee0"/>
<ellipse cx="1558.8" cy="456.8" rx="4.1" ry="1.7" transform="rotate(-0 1558.8 456.8)" fill="#f6eee0"/>
<ellipse cx="1643.4" cy="494.3" rx="4.3" ry="1.8" transform="rotate(-27 1643.4 494.3)" fill="#f6eee0"/>
<ellipse cx="1600.1" cy="434.3" rx="2.1" ry="0.9" transform="rotate(-7 1600.1 434.3)" fill="#f6eee0"/>
<ellipse cx="1634.0" cy="394.5" rx="3.1" ry="1.3" transform="rotate(9 1634.0 394.5)" fill="#4a3e30"/>
<ellipse cx="1566.0" cy="448.8" rx="3.4" ry="1.4" transform="rotate(-34 1566.0 448.8)" fill="#f6eee0"/>
<ellipse cx="1506.3" cy="440.7" rx="3.6" ry="1.5" transform="rotate(-4 1506.3 440.7)" fill="#4a3e30"/>
<ellipse cx="1656.0" cy="390.6" rx="2.2" ry="0.9" transform="rotate(-7 1656.0 390.6)" fill="#4a3e30"/>
<ellipse cx="1642.7" cy="500.8" rx="4.3" ry="1.8" transform="rotate(-19 1642.7 500.8)" fill="#f6eee0"/>
<ellipse cx="1590.8" cy="456.0" rx="3.4" ry="1.5" transform="rotate(6 1590.8 456.0)" fill="#f6eee0"/>
<ellipse cx="1632.3" cy="474.1" rx="2.0" ry="0.9" transform="rotate(-36 1632.3 474.1)" fill="#4a3e30"/>
<ellipse cx="1567.4" cy="468.6" rx="4.5" ry="1.9" transform="rotate(-26 1567.4 468.6)" fill="#4a3e30"/>
<ellipse cx="1542.2" cy="451.9" rx="3.1" ry="1.3" transform="rotate(-1 1542.2 451.9)" fill="#f6eee0"/>
<ellipse cx="1524.5" cy="473.5" rx="3.1" ry="1.3" transform="rotate(4 1524.5 473.5)" fill="#f6eee0"/>
<ellipse cx="1557.1" cy="452.4" rx="3.6" ry="1.5" transform="rotate(1 1557.1 452.4)" fill="#4a3e30"/>
<ellipse cx="1548.5" cy="451.3" rx="3.3" ry="1.4" transform="rotate(-23 1548.5 451.3)" fill="#f6eee0"/>
<ellipse cx="1637.8" cy="452.3" rx="3.2" ry="1.4" transform="rotate(-17 1637.8 452.3)" fill="#4a3e30"/>
<ellipse cx="1583.8" cy="425.4" rx="3.3" ry="1.4" transform="rotate(-27 1583.8 425.4)" fill="#4a3e30"/>
<ellipse cx="1560.3" cy="472.4" rx="2.0" ry="0.8" transform="rotate(1 1560.3 472.4)" fill="#f6eee0"/>
<ellipse cx="1619.0" cy="458.4" rx="2.2" ry="0.9" transform="rotate(6 1619.0 458.4)" fill="#f6eee0"/>
<ellipse cx="1570.7" cy="480.0" rx="2.2" ry="0.9" transform="rotate(-8 1570.7 480.0)" fill="#f6eee0"/>
<ellipse cx="1548.3" cy="424.8" rx="3.8" ry="1.6" transform="rotate(-32 1548.3 424.8)" fill="#f6eee0"/>
<ellipse cx="1615.0" cy="400.9" rx="2.9" ry="1.2" transform="rotate(-9 1615.0 400.9)" fill="#4a3e30"/>
<ellipse cx="1569.4" cy="438.7" rx="3.1" ry="1.3" transform="rotate(2 1569.4 438.7)" fill="#f6eee0"/>
<ellipse cx="1581.2" cy="376.2" rx="2.4" ry="1.0" transform="rotate(4 1581.2 376.2)" fill="#4a3e30"/>
<ellipse cx="1618.9" cy="501.0" rx="3.9" ry="1.6" transform="rotate(-16 1618.9 501.0)" fill="#f6eee0"/>
<ellipse cx="1532.9" cy="398.1" rx="2.6" ry="1.1" transform="rotate(-5 1532.9 398.1)" fill="#4a3e30"/>
<ellipse cx="1568.7" cy="441.1" rx="3.3" ry="1.4" transform="rotate(-3 1568.7 441.1)" fill="#f6eee0"/>
<ellipse cx="1596.8" cy="370.7" rx="3.6" ry="1.5" transform="rotate(-25 1596.8 370.7)" fill="#f6eee0"/>
<ellipse cx="1653.6" cy="455.1" rx="3.2" ry="1.4" transform="rotate(-5 1653.6 455.1)" fill="#f6eee0"/>
<ellipse cx="1543.8" cy="407.7" rx="4.4" ry="1.8" transform="rotate(-13 1543.8 407.7)" fill="#4a3e30"/>
<ellipse cx="1581.8" cy="433.8" rx="2.9" ry="1.2" transform="rotate(-14 1581.8 433.8)" fill="#4a3e30"/>
<ellipse cx="1574.7" cy="445.8" rx="3.8" ry="1.6" transform="rotate(-21 1574.7 445.8)" fill="#4a3e30"/>
<ellipse cx="1528.3" cy="492.8" rx="2.4" ry="1.0" transform="rotate(-18 1528.3 492.8)" fill="#4a3e30"/>
<ellipse cx="1646.8" cy="502.8" rx="2.9" ry="1.2" transform="rotate(-20 1646.8 502.8)" fill="#4a3e30"/>
<ellipse cx="1603.8" cy="401.6" rx="3.0" ry="1.3" transform="rotate(-7 1603.8 401.6)" fill="#4a3e30"/>
<ellipse cx="1533.3" cy="472.2" rx="4.5" ry="1.9" transform="rotate(-13 1533.3 472.2)" fill="#f6eee0"/>
<ellipse cx="1659.5" cy="436.2" rx="4.0" ry="1.7" transform="rotate(-12 1659.5 436.2)" fill="#f6eee0"/>
<ellipse cx="1574.7" cy="380.7" rx="2.7" ry="1.1" transform="rotate(-29 1574.7 380.7)" fill="#f6eee0"/>
<ellipse cx="1586.6" cy="459.1" rx="3.0" ry="1.3" transform="rotate(-5 1586.6 459.1)" fill="#4a3e30"/>
<ellipse cx="1652.7" cy="402.9" rx="2.8" ry="1.2" transform="rotate(-18 1652.7 402.9)" fill="#f6eee0"/>
<ellipse cx="1534.6" cy="461.6" rx="3.9" ry="1.7" transform="rotate(-35 1534.6 461.6)" fill="#4a3e30"/>
<ellipse cx="1583.0" cy="424.7" rx="4.4" ry="1.9" transform="rotate(-21 1583.0 424.7)" fill="#f6eee0"/>
<ellipse cx="1583.8" cy="410.3" rx="3.9" ry="1.6" transform="rotate(-29 1583.8 410.3)" fill="#f6eee0"/>
<ellipse cx="1520.7" cy="498.6" rx="4.4" ry="1.9" transform="rotate(-4 1520.7 498.6)" fill="#4a3e30"/>
<ellipse cx="1525.9" cy="413.4" rx="2.9" ry="1.2" transform="rotate(-34 1525.9 413.4)" fill="#f6eee0"/>
<ellipse cx="1584.1" cy="480.8" rx="4.5" ry="1.9" transform="rotate(-37 1584.1 480.8)" fill="#4a3e30"/>
<ellipse cx="1622.4" cy="433.4" rx="2.7" ry="1.2" transform="rotate(-22 1622.4 433.4)" fill="#4a3e30"/>
<ellipse cx="1563.1" cy="500.2" rx="3.9" ry="1.6" transform="rotate(-35 1563.1 500.2)" fill="#f6eee0"/>
<ellipse cx="1651.4" cy="441.4" rx="3.3" ry="1.4" transform="rotate(-9 1651.4 441.4)" fill="#4a3e30"/>
<ellipse cx="1735.4" cy="317.2" rx="3.7" ry="1.6" transform="rotate(-38 1735.4 317.2)" fill="#4a3e30"/>
<ellipse cx="1829.1" cy="465.4" rx="3.4" ry="1.4" transform="rotate(-36 1829.1 465.4)" fill="#f6eee0"/>
<ellipse cx="1635.2" cy="342.8" rx="3.8" ry="1.6" transform="rotate(-24 1635.2 342.8)" fill="#f6eee0"/>
<ellipse cx="1614.9" cy="295.9" rx="2.4" ry="1.0" transform="rotate(-24 1614.9 295.9)" fill="#4a3e30"/>
<ellipse cx="1630.7" cy="452.8" rx="3.1" ry="1.3" transform="rotate(-34 1630.7 452.8)" fill="#4a3e30"/>
<ellipse cx="1806.2" cy="335.0" rx="3.8" ry="1.6" transform="rotate(-3 1806.2 335.0)" fill="#f6eee0"/>
<ellipse cx="1764.4" cy="460.8" rx="2.7" ry="1.1" transform="rotate(1 1764.4 460.8)" fill="#4a3e30"/>
<ellipse cx="1610.6" cy="389.5" rx="3.0" ry="1.3" transform="rotate(-18 1610.6 389.5)" fill="#f6eee0"/>
<ellipse cx="1742.5" cy="514.9" rx="3.3" ry="1.4" transform="rotate(-10 1742.5 514.9)" fill="#f6eee0"/>
<ellipse cx="1751.3" cy="458.2" rx="3.4" ry="1.4" transform="rotate(-30 1751.3 458.2)" fill="#4a3e30"/>
<ellipse cx="1801.1" cy="353.1" rx="3.4" ry="1.4" transform="rotate(2 1801.1 353.1)" fill="#f6eee0"/>
<ellipse cx="1687.7" cy="364.1" rx="3.8" ry="1.6" transform="rotate(-37 1687.7 364.1)" fill="#4a3e30"/>
<ellipse cx="1723.5" cy="515.7" rx="3.2" ry="1.4" transform="rotate(-26 1723.5 515.7)" fill="#4a3e30"/>
<ellipse cx="1762.8" cy="360.5" rx="2.0" ry="0.9" transform="rotate(-11 1762.8 360.5)" fill="#f6eee0"/>
<ellipse cx="1662.1" cy="503.7" rx="3.4" ry="1.4" transform="rotate(-36 1662.1 503.7)" fill="#f6eee0"/>
<ellipse cx="1645.0" cy="251.3" rx="3.5" ry="1.5" transform="rotate(-13 1645.0 251.3)" fill="#4a3e30"/>
<ellipse cx="1682.9" cy="287.7" rx="2.5" ry="1.0" transform="rotate(-8 1682.9 287.7)" fill="#4a3e30"/>
<ellipse cx="1633.6" cy="249.8" rx="2.5" ry="1.1" transform="rotate(-20 1633.6 249.8)" fill="#4a3e30"/>
<ellipse cx="1634.6" cy="427.7" rx="3.8" ry="1.6" transform="rotate(3 1634.6 427.7)" fill="#4a3e30"/>
<ellipse cx="1761.4" cy="370.8" rx="3.4" ry="1.4" transform="rotate(-22 1761.4 370.8)" fill="#4a3e30"/>
<ellipse cx="1695.9" cy="396.0" rx="3.0" ry="1.3" transform="rotate(-21 1695.9 396.0)" fill="#f6eee0"/>
<ellipse cx="1816.8" cy="476.5" rx="3.7" ry="1.5" transform="rotate(1 1816.8 476.5)" fill="#f6eee0"/>
<ellipse cx="1659.2" cy="379.0" rx="2.5" ry="1.1" transform="rotate(1 1659.2 379.0)" fill="#f6eee0"/>
<ellipse cx="1601.8" cy="288.1" rx="2.3" ry="1.0" transform="rotate(8 1601.8 288.1)" fill="#4a3e30"/>
<ellipse cx="1823.3" cy="255.7" rx="2.0" ry="0.9" transform="rotate(-36 1823.3 255.7)" fill="#4a3e30"/>
<ellipse cx="1602.5" cy="294.9" rx="3.4" ry="1.4" transform="rotate(-12 1602.5 294.9)" fill="#4a3e30"/>
<ellipse cx="1704.1" cy="507.6" rx="2.2" ry="0.9" transform="rotate(-40 1704.1 507.6)" fill="#4a3e30"/>
<ellipse cx="1810.1" cy="490.7" rx="2.1" ry="0.9" transform="rotate(-18 1810.1 490.7)" fill="#4a3e30"/>
<ellipse cx="1660.2" cy="340.7" rx="2.2" ry="0.9" transform="rotate(-5 1660.2 340.7)" fill="#f6eee0"/>
<ellipse cx="1845.3" cy="338.1" rx="2.9" ry="1.2" transform="rotate(-1 1845.3 338.1)" fill="#4a3e30"/>
<ellipse cx="1826.0" cy="473.4" rx="3.2" ry="1.3" transform="rotate(-30 1826.0 473.4)" fill="#4a3e30"/>
<ellipse cx="1666.8" cy="470.0" rx="2.1" ry="0.9" transform="rotate(-16 1666.8 470.0)" fill="#4a3e30"/>
<ellipse cx="1789.1" cy="437.0" rx="3.2" ry="1.4" transform="rotate(-33 1789.1 437.0)" fill="#4a3e30"/>
<ellipse cx="1647.2" cy="379.2" rx="2.5" ry="1.1" transform="rotate(-13 1647.2 379.2)" fill="#f6eee0"/>
<ellipse cx="1790.7" cy="463.5" rx="2.8" ry="1.2" transform="rotate(-15 1790.7 463.5)" fill="#f6eee0"/>
<ellipse cx="1647.0" cy="417.1" rx="3.2" ry="1.4" transform="rotate(10 1647.0 417.1)" fill="#4a3e30"/>
<ellipse cx="1695.5" cy="407.0" rx="2.5" ry="1.1" transform="rotate(-9 1695.5 407.0)" fill="#4a3e30"/>
<ellipse cx="1630.5" cy="353.9" rx="3.7" ry="1.6" transform="rotate(-4 1630.5 353.9)" fill="#4a3e30"/>
<ellipse cx="1728.1" cy="376.9" rx="2.2" ry="0.9" transform="rotate(-36 1728.1 376.9)" fill="#f6eee0"/>
<ellipse cx="1820.5" cy="302.4" rx="3.1" ry="1.3" transform="rotate(-11 1820.5 302.4)" fill="#f6eee0"/>
<ellipse cx="1838.1" cy="397.2" rx="2.5" ry="1.1" transform="rotate(-23 1838.1 397.2)" fill="#4a3e30"/>
<ellipse cx="1686.5" cy="296.4" rx="2.2" ry="0.9" transform="rotate(-11 1686.5 296.4)" fill="#f6eee0"/>
<ellipse cx="1844.9" cy="372.0" rx="2.8" ry="1.2" transform="rotate(-26 1844.9 372.0)" fill="#f6eee0"/>
<ellipse cx="1619.7" cy="485.2" rx="3.2" ry="1.4" transform="rotate(-26 1619.7 485.2)" fill="#f6eee0"/>
<ellipse cx="1702.9" cy="481.6" rx="3.1" ry="1.3" transform="rotate(-7 1702.9 481.6)" fill="#f6eee0"/>
<ellipse cx="1635.8" cy="515.5" rx="3.0" ry="1.3" transform="rotate(-19 1635.8 515.5)" fill="#4a3e30"/>
<ellipse cx="1703.2" cy="342.5" rx="2.4" ry="1.0" transform="rotate(-11 1703.2 342.5)" fill="#f6eee0"/>
<ellipse cx="1809.2" cy="251.4" rx="3.0" ry="1.3" transform="rotate(-1 1809.2 251.4)" fill="#4a3e30"/>
<ellipse cx="1640.1" cy="253.3" rx="3.0" ry="1.3" transform="rotate(-38 1640.1 253.3)" fill="#f6eee0"/>
<ellipse cx="1786.7" cy="402.5" rx="2.7" ry="1.1" transform="rotate(-32 1786.7 402.5)" fill="#4a3e30"/>
<ellipse cx="1755.7" cy="321.6" rx="2.4" ry="1.0" transform="rotate(-24 1755.7 321.6)" fill="#4a3e30"/>
<ellipse cx="1734.8" cy="319.4" rx="3.7" ry="1.6" transform="rotate(-38 1734.8 319.4)" fill="#f6eee0"/>
<ellipse cx="1641.8" cy="300.3" rx="2.5" ry="1.1" transform="rotate(-34 1641.8 300.3)" fill="#4a3e30"/>
<ellipse cx="1668.4" cy="498.7" rx="2.2" ry="0.9" transform="rotate(2 1668.4 498.7)" fill="#f6eee0"/>
<ellipse cx="1777.7" cy="513.3" rx="3.6" ry="1.5" transform="rotate(-34 1777.7 513.3)" fill="#f6eee0"/>
<ellipse cx="1679.7" cy="246.7" rx="2.3" ry="1.0" transform="rotate(-15 1679.7 246.7)" fill="#f6eee0"/>
<ellipse cx="1765.6" cy="254.6" rx="2.0" ry="0.9" transform="rotate(-17 1765.6 254.6)" fill="#4a3e30"/>
<ellipse cx="1611.8" cy="404.8" rx="2.0" ry="0.9" transform="rotate(-14 1611.8 404.8)" fill="#f6eee0"/>
<ellipse cx="1848.7" cy="324.9" rx="3.9" ry="1.6" transform="rotate(-33 1848.7 324.9)" fill="#4a3e30"/>
<ellipse cx="1796.0" cy="318.0" rx="3.0" ry="1.3" transform="rotate(-25 1796.0 318.0)" fill="#f6eee0"/>
<ellipse cx="1639.9" cy="494.0" rx="3.9" ry="1.6" transform="rotate(-5 1639.9 494.0)" fill="#f6eee0"/>
<ellipse cx="1670.5" cy="437.7" rx="2.1" ry="0.9" transform="rotate(-31 1670.5 437.7)" fill="#f6eee0"/>
<ellipse cx="1610.9" cy="414.6" rx="3.8" ry="1.6" transform="rotate(-19 1610.9 414.6)" fill="#4a3e30"/>
<ellipse cx="1610.7" cy="387.6" rx="3.5" ry="1.5" transform="rotate(-4 1610.7 387.6)" fill="#f6eee0"/>
<ellipse cx="1691.7" cy="363.7" rx="2.7" ry="1.1" transform="rotate(-27 1691.7 363.7)" fill="#4a3e30"/>
<ellipse cx="1777.5" cy="408.5" rx="2.1" ry="0.9" transform="rotate(-35 1777.5 408.5)" fill="#f6eee0"/>
<ellipse cx="1694.3" cy="382.1" rx="2.9" ry="1.2" transform="rotate(-39 1694.3 382.1)" fill="#f6eee0"/>
<ellipse cx="1774.3" cy="367.8" rx="2.8" ry="1.2" transform="rotate(9 1774.3 367.8)" fill="#f6eee0"/>
<ellipse cx="1829.9" cy="405.9" rx="2.1" ry="0.9" transform="rotate(-39 1829.9 405.9)" fill="#f6eee0"/>
</g>
<circle cx="1411.0" cy="424.0" r="6.0" fill="#d8ccb8" stroke="#f4ecde" stroke-width="1.4" opacity="0.75"/>
<path d="M1405.0,424.0 A6.0,6.0 0 0 0 1417.0,424.0" fill="none" stroke="#5a4c3c" stroke-width="1.2" opacity="0.5"/>
<circle cx="1409.0" cy="461.0" r="3.5" fill="#d8ccb8" stroke="#f4ecde" stroke-width="1.4" opacity="0.75"/>
<path d="M1405.5,461.0 A3.5,3.5 0 0 0 1412.5,461.0" fill="none" stroke="#5a4c3c" stroke-width="1.2" opacity="0.5"/>
<circle cx="1434.0" cy="418.0" r="2.0" fill="#d8ccb8" stroke="#f4ecde" stroke-width="1.4" opacity="0.75"/>
<path d="M1432.0,418.0 A2.0,2.0 0 0 0 1436.0,418.0" fill="none" stroke="#5a4c3c" stroke-width="1.2" opacity="0.5"/>
</g>
<path d="M1856.7,663.2 L1862.2,669.3 L1866.9,675.1 L1870.9,680.6 L1874.0,685.9 L1876.4,690.9 L1878.0,695.5 L1879.0,700.0 L1879.2,704.1 L1878.8,707.9 L1877.8,711.5 L1876.1,714.8 L1873.9,717.9 L1871.1,720.7 L1867.7,723.2 L1863.8,725.5 L1859.5,727.5 L1854.6,729.3 L1849.3,730.9 L1843.6,732.2 L1837.5,733.3 L1831.0,734.2 L1824.1,734.9 L1816.9,735.4 L1809.3,735.7 L1801.5,735.9 L1793.4,735.8 L1784.9,735.5 L1776.3,735.1 L1767.4,734.5 L1758.2,733.7 L1748.9,732.8 L1739.3,731.8 L1729.6,730.6 L1719.7,729.2 L1709.6,727.7 L1699.4,726.1 L1689.0,724.3 L1678.5,722.4 L1667.9,720.4 L1657.2,718.3 L1646.3,716.1 L1635.4,713.7 L1624.4,711.3 L1613.3,708.8 L1602.1,706.1 L1590.9,703.4 L1579.6,700.5 L1568.2,697.6 L1556.8,694.6 L1545.3,691.5 L1533.9,688.3 L1522.3,685.0 L1510.8,681.7 L1499.2,678.2 L1487.6,674.7 L1476.0,671.2 L1464.4,667.5 L1452.8,663.8 L1441.2,660.0 L1429.5,656.2 L1417.9,652.3 L1406.3,648.3 L1394.7,644.2 L1383.1,640.1 L1371.6,636.0 L1360.0,631.8 L1348.5,627.5 L1337.1,623.2 L1325.6,618.8 L1314.2,614.4 L1302.9,609.9 L1291.5,605.3 L1280.3,600.8 L1269.1,596.1 L1257.9,591.5 L1246.9,586.7 L1235.9,582.0 L1224.9,577.2 L1214.1,572.3 L1203.3,567.4 L1192.6,562.5 L1182.0,557.6 L1171.6,552.6 L1161.2,547.5 L1150.9,542.5 L1140.8,537.4 L1130.8,532.3 L1120.9,527.1 L1111.2,522.0 L1101.7,516.8 L1092.3,511.6 L1083.0,506.4 L1074.0,501.1 L1065.2,495.9 L1056.5,490.7 L1048.1,485.4 L1039.9,480.2 L1032.0,475.0 L1024.3,469.7 L1016.9,464.5 L1009.7,459.4 L1002.9,454.2 L996.4,449.1 L990.2,444.0 L984.3,438.9 L978.8,433.9 L973.7,429.0 L969.0,424.1 L964.7,419.3 L960.9,414.6 L957.5,410.0 L954.6,405.5 L952.2,401.0 L950.3,396.7 L948.9,392.6 L948.1,388.5 L947.9,384.7 L948.3,380.9 L949.4,377.4 L951.1,374.0 L953.4,370.9 L956.5,367.9 L960.3,365.2 L964.7,362.7 L970.0,360.5 L976.0,358.5 L982.8,356.9 L990.4,355.5 L998.8,354.4 L1008.0,353.6 L1018.0,353.2 L1028.8,353.1 L1040.5,353.3 L1053.0,353.9 L1066.3,354.9 L1080.4,356.3 L1095.3,358.1 L1111.0,360.2 L1127.5,362.8 L1144.7,365.7 L1162.6,369.1 L1181.2,372.9 L1200.4,377.1 L1220.2,381.6 L1240.6,386.6 L1261.4,392.0 L1282.8,397.7 L1304.5,403.8 L1326.5,410.2 L1348.9,417.0 L1371.4,424.1 L1394.1,431.5 L1416.8,439.2 L1439.6,447.2 L1462.3,455.4 L1484.9,463.8 L1507.3,472.3 L1529.4,481.1 L1551.2,489.9 L1572.7,498.9 L1593.7,507.9 L1614.2,517.0 L1634.1,526.2 L1653.4,535.3 L1672.1,544.4 L1690.1,553.4 L1707.4,562.4 L1723.9,571.2 L1739.7,580.0 L1754.6,588.6 L1768.7,597.0 L1781.9,605.3 L1794.3,613.3 L1805.8,621.2 L1816.4,628.8 L1826.2,636.2 L1835.1,643.3 L1843.2,650.2 L1850.4,656.9 L1856.7,663.2 M1871.9,567.6 L1877.1,574.5 L1881.5,581.1 L1885.1,587.5 L1887.9,593.6 L1890.1,599.4 L1891.5,604.9 L1892.3,610.2 L1892.4,615.2 L1891.8,620.0 L1890.7,624.4 L1888.9,628.6 L1886.6,632.6 L1883.7,636.2 L1880.3,639.7 L1876.4,642.8 L1872.1,645.7 L1867.2,648.4 L1862.0,650.8 L1856.3,653.0 L1850.2,654.9 L1843.8,656.7 L1837.0,658.2 L1829.9,659.5 L1822.4,660.5 L1814.7,661.4 L1806.6,662.1 L1798.3,662.6 L1789.8,662.9 L1781.0,663.0 L1772.0,662.9 L1762.8,662.7 L1753.4,662.2 L1743.8,661.7 L1734.0,660.9 L1724.1,660.0 L1714.0,659.0 L1703.8,657.8 L1693.5,656.5 L1683.0,655.0 L1672.5,653.4 L1661.8,651.6 L1651.1,649.8 L1640.2,647.8 L1629.3,645.7 L1618.3,643.4 L1607.3,641.1 L1596.2,638.7 L1585.0,636.1 L1573.8,633.4 L1562.6,630.7 L1551.3,627.8 L1540.0,624.8 L1528.7,621.8 L1517.3,618.6 L1506.0,615.4 L1494.6,612.0 L1483.2,608.6 L1471.8,605.1 L1460.4,601.5 L1449.1,597.8 L1437.7,594.1 L1426.4,590.3 L1415.0,586.4 L1403.7,582.4 L1392.4,578.3 L1381.2,574.2 L1370.0,570.0 L1358.8,565.7 L1347.7,561.4 L1336.6,556.9 L1325.5,552.5 L1314.5,547.9 L1303.6,543.3 L1292.7,538.7 L1281.9,533.9 L1271.2,529.1 L1260.5,524.3 L1249.9,519.4 L1239.5,514.4 L1229.1,509.4 L1218.8,504.3 L1208.6,499.2 L1198.5,494.0 L1188.5,488.8 L1178.7,483.5 L1169.0,478.2 L1159.4,472.9 L1150.0,467.5 L1140.8,462.0 L1131.7,456.6 L1122.7,451.1 L1114.0,445.5 L1105.4,440.0 L1097.1,434.4 L1088.9,428.8 L1081.0,423.2 L1073.4,417.5 L1065.9,411.9 L1058.8,406.2 L1051.9,400.6 L1045.3,394.9 L1039.0,389.3 L1033.0,383.6 L1027.4,378.0 L1022.1,372.5 L1017.2,366.9 L1012.6,361.4 L1008.5,356.0 L1004.8,350.6 L1001.5,345.2 L998.6,340.0 L996.3,334.8 L994.4,329.7 L993.1,324.8 L992.3,319.9 L992.0,315.2 L992.4,310.6 L993.3,306.1 L994.8,301.8 L996.9,297.7 L999.8,293.8 L1003.2,290.0 L1007.4,286.5 L1012.3,283.2 L1017.9,280.2 L1024.2,277.4 L1031.2,274.8 L1039.1,272.6 L1047.6,270.7 L1057.0,269.0 L1067.1,267.7 L1078.0,266.8 L1089.7,266.2 L1102.2,265.9 L1115.4,266.0 L1129.4,266.6 L1144.1,267.5 L1159.5,268.8 L1175.6,270.5 L1192.5,272.6 L1209.9,275.2 L1228.0,278.2 L1246.7,281.6 L1265.9,285.4 L1285.6,289.6 L1305.7,294.3 L1326.3,299.3 L1347.2,304.8 L1368.3,310.6 L1389.8,316.8 L1411.4,323.4 L1433.1,330.3 L1454.8,337.5 L1476.6,345.0 L1498.2,352.8 L1519.8,360.9 L1541.1,369.2 L1562.2,377.7 L1582.9,386.4 L1603.3,395.3 L1623.2,404.3 L1642.7,413.4 L1661.6,422.5 L1679.9,431.8 L1697.7,441.0 L1714.7,450.3 L1731.1,459.5 L1746.7,468.6 L1761.6,477.7 L1775.7,486.7 L1789.0,495.6 L1801.5,504.4 L1813.2,513.0 L1824.1,521.4 L1834.1,529.7 L1843.3,537.7 L1851.7,545.5 L1859.3,553.1 L1866.0,560.5 L1871.9,567.6 M1869.4,477.4 L1874.2,484.7 L1878.3,491.7 L1881.7,498.5 L1884.4,505.1 L1886.4,511.5 L1887.8,517.5 L1888.5,523.4 L1888.6,529.0 L1888.2,534.3 L1887.1,539.4 L1885.5,544.2 L1883.4,548.8 L1880.7,553.2 L1877.6,557.3 L1874.0,561.1 L1869.9,564.7 L1865.4,568.0 L1860.5,571.1 L1855.2,574.0 L1849.5,576.7 L1843.4,579.1 L1837.0,581.3 L1830.3,583.3 L1823.3,585.0 L1816.0,586.6 L1808.4,587.9 L1800.5,589.1 L1792.5,590.0 L1784.1,590.8 L1775.6,591.3 L1766.8,591.7 L1757.9,591.9 L1748.8,591.9 L1739.5,591.8 L1730.1,591.5 L1720.5,591.0 L1710.8,590.4 L1700.9,589.6 L1691.0,588.6 L1680.9,587.5 L1670.7,586.3 L1660.4,584.9 L1650.1,583.4 L1639.7,581.8 L1629.2,580.0 L1618.6,578.1 L1608.0,576.1 L1597.3,574.0 L1586.6,571.7 L1575.9,569.3 L1565.1,566.8 L1554.3,564.2 L1543.4,561.5 L1532.6,558.7 L1521.7,555.7 L1510.8,552.7 L1500.0,549.6 L1489.1,546.3 L1478.2,543.0 L1467.4,539.6 L1456.5,536.1 L1445.7,532.5 L1434.9,528.8 L1424.1,525.0 L1413.3,521.1 L1402.6,517.2 L1391.9,513.1 L1381.3,509.0 L1370.7,504.8 L1360.2,500.5 L1349.7,496.2 L1339.3,491.7 L1328.9,487.2 L1318.6,482.6 L1308.4,478.0 L1298.2,473.2 L1288.2,468.4 L1278.2,463.6 L1268.4,458.6 L1258.6,453.6 L1248.9,448.5 L1239.4,443.4 L1229.9,438.2 L1220.6,433.0 L1211.5,427.6 L1202.4,422.3 L1193.5,416.9 L1184.8,411.4 L1176.2,405.9 L1167.9,400.3 L1159.6,394.7 L1151.6,389.0 L1143.8,383.4 L1136.2,377.6 L1128.8,371.9 L1121.6,366.1 L1114.7,360.3 L1108.0,354.5 L1101.6,348.6 L1095.5,342.8 L1089.7,336.9 L1084.1,331.1 L1078.9,325.2 L1074.0,319.4 L1069.5,313.5 L1065.3,307.7 L1061.6,302.0 L1058.2,296.2 L1055.2,290.6 L1052.6,284.9 L1050.5,279.4 L1048.9,273.9 L1047.7,268.5 L1047.0,263.1 L1046.8,257.9 L1047.2,252.8 L1048.1,247.8 L1049.5,243.0 L1051.6,238.3 L1054.2,233.8 L1057.4,229.4 L1061.3,225.3 L1065.8,221.3 L1070.9,217.5 L1076.7,214.0 L1083.2,210.7 L1090.4,207.7 L1098.2,205.0 L1106.7,202.5 L1116.0,200.3 L1125.9,198.4 L1136.5,196.9 L1147.8,195.7 L1159.8,194.9 L1172.5,194.4 L1185.8,194.2 L1199.8,194.5 L1214.4,195.1 L1229.6,196.2 L1245.4,197.6 L1261.8,199.5 L1278.7,201.7 L1296.1,204.4 L1313.9,207.5 L1332.2,211.0 L1350.9,214.9 L1369.8,219.2 L1389.1,223.9 L1408.6,229.0 L1428.3,234.5 L1448.1,240.3 L1468.0,246.5 L1487.9,253.0 L1507.8,259.9 L1527.6,267.0 L1547.2,274.4 L1566.7,282.1 L1585.9,290.0 L1604.8,298.2 L1623.4,306.5 L1641.6,315.0 L1659.3,323.6 L1676.5,332.4 L1693.3,341.2 L1709.4,350.2 L1725.0,359.1 L1739.9,368.1 L1754.2,377.1 L1767.8,386.0 L1780.8,394.9 L1793.0,403.8 L1804.4,412.5 L1815.2,421.2 L1825.2,429.7 L1834.4,438.1 L1842.9,446.3 L1850.7,454.4 L1857.6,462.3 L1863.9,469.9 L1869.4,477.4 M1850.7,396.4 L1855.2,403.6 L1859.0,410.6 L1862.2,417.4 L1864.8,424.0 L1866.8,430.5 L1868.2,436.7 L1869.0,442.7 L1869.3,448.5 L1869.1,454.1 L1868.3,459.4 L1867.1,464.5 L1865.3,469.5 L1863.1,474.1 L1860.5,478.6 L1857.4,482.8 L1853.8,486.8 L1849.9,490.6 L1845.6,494.2 L1840.9,497.5 L1835.9,500.6 L1830.5,503.5 L1824.8,506.2 L1818.8,508.7 L1812.5,511.0 L1805.9,513.0 L1799.0,514.9 L1791.9,516.6 L1784.6,518.0 L1777.1,519.3 L1769.3,520.4 L1761.3,521.3 L1753.2,522.0 L1744.8,522.6 L1736.3,522.9 L1727.7,523.2 L1718.9,523.2 L1709.9,523.1 L1700.9,522.8 L1691.7,522.3 L1682.4,521.7 L1673.0,521.0 L1663.5,520.1 L1653.9,519.0 L1644.3,517.9 L1634.6,516.5 L1624.8,515.1 L1614.9,513.5 L1605.0,511.8 L1595.1,509.9 L1585.1,508.0 L1575.1,505.9 L1565.0,503.7 L1555.0,501.3 L1544.9,498.9 L1534.8,496.3 L1524.7,493.6 L1514.5,490.9 L1504.4,488.0 L1494.3,485.0 L1484.2,481.9 L1474.2,478.7 L1464.1,475.4 L1454.1,472.0 L1444.0,468.5 L1434.1,464.9 L1424.1,461.2 L1414.2,457.4 L1404.4,453.5 L1394.6,449.6 L1384.8,445.5 L1375.2,441.4 L1365.5,437.2 L1356.0,432.9 L1346.5,428.5 L1337.1,424.1 L1327.8,419.5 L1318.6,414.9 L1309.5,410.2 L1300.4,405.4 L1291.5,400.6 L1282.7,395.7 L1274.0,390.7 L1265.5,385.7 L1257.0,380.6 L1248.8,375.4 L1240.6,370.2 L1232.6,364.9 L1224.8,359.5 L1217.1,354.1 L1209.7,348.7 L1202.4,343.2 L1195.3,337.7 L1188.3,332.1 L1181.7,326.5 L1175.2,320.8 L1169.0,315.1 L1163.0,309.4 L1157.2,303.7 L1151.8,297.9 L1146.6,292.1 L1141.6,286.4 L1137.0,280.6 L1132.7,274.8 L1128.7,269.0 L1125.1,263.3 L1121.8,257.5 L1118.9,251.8 L1116.3,246.1 L1114.1,240.5 L1112.4,234.9 L1111.0,229.4 L1110.1,224.0 L1109.6,218.6 L1109.6,213.3 L1110.1,208.1 L1111.0,203.0 L1112.4,198.0 L1114.4,193.2 L1116.9,188.5 L1119.8,183.9 L1123.4,179.5 L1127.5,175.3 L1132.2,171.3 L1137.4,167.4 L1143.2,163.8 L1149.6,160.4 L1156.6,157.3 L1164.2,154.3 L1172.3,151.7 L1181.1,149.3 L1190.5,147.2 L1200.4,145.4 L1211.0,144.0 L1222.1,142.8 L1233.7,142.0 L1246.0,141.5 L1258.7,141.3 L1272.0,141.5 L1285.8,142.1 L1300.0,143.1 L1314.7,144.4 L1329.9,146.1 L1345.4,148.1 L1361.3,150.6 L1377.5,153.4 L1394.0,156.6 L1410.8,160.2 L1427.8,164.1 L1445.0,168.4 L1462.3,173.1 L1479.6,178.1 L1497.1,183.4 L1514.5,189.1 L1531.9,195.0 L1549.2,201.3 L1566.4,207.8 L1583.4,214.6 L1600.2,221.6 L1616.7,228.8 L1633.0,236.3 L1648.8,243.9 L1664.4,251.7 L1679.5,259.6 L1694.1,267.7 L1708.3,275.8 L1722.0,284.0 L1735.1,292.3 L1747.7,300.6 L1759.7,308.9 L1771.2,317.3 L1782.0,325.6 L1792.2,333.8 L1801.8,342.0 L1810.7,350.1 L1819.0,358.1 L1826.6,366.1 L1833.6,373.9 L1840.0,381.5 L1845.7,389.0 L1850.7,396.4 M1818.3,327.1 L1822.4,333.8 L1825.9,340.3 L1828.8,346.6 L1831.3,352.9 L1833.3,359.0 L1834.8,364.9 L1835.8,370.6 L1836.3,376.2 L1836.4,381.6 L1836.0,386.8 L1835.2,391.9 L1834.0,396.7 L1832.3,401.4 L1830.3,405.9 L1827.8,410.2 L1825.0,414.2 L1821.8,418.1 L1818.3,421.8 L1814.4,425.3 L1810.2,428.7 L1805.7,431.8 L1801.0,434.7 L1795.9,437.5 L1790.5,440.0 L1784.9,442.4 L1779.0,444.5 L1772.9,446.5 L1766.6,448.3 L1760.1,450.0 L1753.3,451.4 L1746.4,452.7 L1739.3,453.8 L1732.0,454.8 L1724.6,455.5 L1717.0,456.1 L1709.2,456.6 L1701.3,456.9 L1693.3,457.0 L1685.2,457.0 L1677.0,456.8 L1668.6,456.5 L1660.2,456.0 L1651.7,455.4 L1643.1,454.6 L1634.4,453.7 L1625.6,452.7 L1616.8,451.5 L1608.0,450.2 L1599.1,448.8 L1590.1,447.2 L1581.1,445.5 L1572.1,443.7 L1563.1,441.8 L1554.0,439.8 L1545.0,437.6 L1535.9,435.3 L1526.8,432.9 L1517.7,430.4 L1508.6,427.8 L1499.6,425.1 L1490.5,422.3 L1481.5,419.4 L1472.4,416.3 L1463.5,413.2 L1454.5,410.0 L1445.6,406.7 L1436.7,403.3 L1427.9,399.7 L1419.1,396.1 L1410.4,392.5 L1401.8,388.7 L1393.2,384.8 L1384.7,380.9 L1376.3,376.8 L1367.9,372.7 L1359.7,368.5 L1351.5,364.2 L1343.4,359.9 L1335.5,355.5 L1327.6,351.0 L1319.9,346.4 L1312.3,341.8 L1304.8,337.1 L1297.4,332.3 L1290.2,327.5 L1283.1,322.6 L1276.2,317.6 L1269.5,312.6 L1262.9,307.6 L1256.5,302.5 L1250.3,297.3 L1244.2,292.1 L1238.4,286.9 L1232.8,281.6 L1227.4,276.3 L1222.2,271.0 L1217.3,265.7 L1212.6,260.3 L1208.1,254.9 L1203.9,249.5 L1200.0,244.1 L1196.4,238.7 L1193.1,233.3 L1190.0,227.9 L1187.3,222.5 L1184.9,217.2 L1182.9,211.9 L1181.1,206.6 L1179.8,201.3 L1178.8,196.1 L1178.1,191.0 L1177.9,185.9 L1178.1,180.9 L1178.6,176.0 L1179.6,171.2 L1181.0,166.5 L1182.8,161.9 L1185.1,157.4 L1187.8,153.0 L1191.0,148.8 L1194.6,144.7 L1198.8,140.8 L1203.3,137.1 L1208.4,133.5 L1214.0,130.1 L1220.0,127.0 L1226.5,124.0 L1233.5,121.3 L1241.0,118.8 L1248.9,116.5 L1257.4,114.5 L1266.3,112.8 L1275.7,111.3 L1285.5,110.1 L1295.7,109.2 L1306.4,108.5 L1317.6,108.2 L1329.1,108.2 L1341.0,108.5 L1353.2,109.1 L1365.8,110.1 L1378.8,111.3 L1392.0,112.9 L1405.5,114.8 L1419.2,117.1 L1433.1,119.6 L1447.3,122.5 L1461.6,125.7 L1476.0,129.2 L1490.5,133.0 L1505.0,137.2 L1519.6,141.6 L1534.2,146.2 L1548.7,151.2 L1563.1,156.4 L1577.4,161.9 L1591.6,167.6 L1605.6,173.5 L1619.4,179.6 L1633.0,185.9 L1646.2,192.4 L1659.2,199.0 L1671.9,205.8 L1684.1,212.7 L1696.1,219.7 L1707.6,226.9 L1718.7,234.0 L1729.3,241.3 L1739.5,248.6 L1749.2,255.9 L1758.5,263.2 L1767.2,270.5 L1775.4,277.8 L1783.1,285.1 L1790.3,292.3 L1797.0,299.4 L1803.1,306.5 L1808.7,313.5 L1813.8,320.3 L1818.3,327.1 M1775.0,271.0 L1778.5,276.8 L1781.6,282.4 L1784.3,287.9 L1786.6,293.3 L1788.5,298.7 L1790.0,303.9 L1791.1,309.0 L1791.8,313.9 L1792.2,318.8 L1792.2,323.5 L1791.8,328.0 L1791.1,332.5 L1790.0,336.8 L1788.6,340.9 L1786.9,344.9 L1784.9,348.7 L1782.5,352.4 L1779.9,355.9 L1776.9,359.2 L1773.7,362.4 L1770.2,365.5 L1766.4,368.4 L1762.4,371.1 L1758.2,373.6 L1753.7,376.0 L1749.0,378.3 L1744.1,380.4 L1738.9,382.3 L1733.6,384.1 L1728.1,385.7 L1722.4,387.2 L1716.6,388.5 L1710.5,389.6 L1704.4,390.6 L1698.0,391.5 L1691.6,392.2 L1685.0,392.8 L1678.3,393.2 L1671.5,393.5 L1664.5,393.6 L1657.5,393.6 L1650.4,393.5 L1643.2,393.2 L1635.9,392.8 L1628.5,392.3 L1621.1,391.6 L1613.6,390.8 L1606.0,389.9 L1598.4,388.9 L1590.8,387.7 L1583.1,386.5 L1575.4,385.1 L1567.6,383.5 L1559.9,381.9 L1552.1,380.2 L1544.3,378.3 L1536.5,376.4 L1528.7,374.3 L1520.9,372.1 L1513.1,369.9 L1505.3,367.5 L1497.6,365.0 L1489.8,362.4 L1482.1,359.8 L1474.5,357.0 L1466.8,354.1 L1459.2,351.2 L1451.7,348.1 L1444.2,345.0 L1436.7,341.8 L1429.4,338.5 L1422.1,335.1 L1414.8,331.7 L1407.6,328.1 L1400.6,324.5 L1393.6,320.8 L1386.7,317.0 L1379.9,313.2 L1373.1,309.3 L1366.5,305.3 L1360.1,301.3 L1353.7,297.2 L1347.5,293.0 L1341.3,288.8 L1335.4,284.5 L1329.5,280.2 L1323.9,275.8 L1318.3,271.3 L1313.0,266.9 L1307.8,262.3 L1302.7,257.8 L1297.9,253.2 L1293.2,248.6 L1288.8,243.9 L1284.5,239.2 L1280.5,234.5 L1276.6,229.8 L1273.0,225.1 L1269.6,220.4 L1266.5,215.6 L1263.6,210.9 L1260.9,206.1 L1258.6,201.4 L1256.4,196.7 L1254.6,192.0 L1253.1,187.4 L1251.8,182.7 L1250.8,178.1 L1250.2,173.6 L1249.8,169.1 L1249.8,164.7 L1250.1,160.3 L1250.7,156.0 L1251.7,151.8 L1253.0,147.6 L1254.7,143.6 L1256.7,139.6 L1259.0,135.8 L1261.8,132.1 L1264.9,128.5 L1268.4,125.0 L1272.2,121.7 L1276.4,118.5 L1281.0,115.5 L1286.0,112.7 L1291.4,110.0 L1297.1,107.5 L1303.2,105.2 L1309.6,103.1 L1316.4,101.2 L1323.6,99.5 L1331.1,98.0 L1339.0,96.7 L1347.2,95.7 L1355.7,94.9 L1364.6,94.3 L1373.7,94.0 L1383.1,93.9 L1392.8,94.1 L1402.8,94.5 L1413.0,95.2 L1423.4,96.2 L1434.0,97.4 L1444.8,98.8 L1455.8,100.6 L1466.9,102.5 L1478.2,104.8 L1489.5,107.3 L1500.9,110.0 L1512.4,113.0 L1523.9,116.2 L1535.4,119.7 L1546.9,123.3 L1558.4,127.2 L1569.8,131.4 L1581.1,135.7 L1592.3,140.2 L1603.3,144.9 L1614.2,149.7 L1624.9,154.8 L1635.4,159.9 L1645.7,165.3 L1655.7,170.7 L1665.5,176.3 L1675.0,181.9 L1684.2,187.7 L1693.0,193.5 L1701.6,199.4 L1709.8,205.4 L1717.6,211.4 L1725.1,217.4 L1732.3,223.4 L1739.0,229.5 L1745.3,235.5 L1751.3,241.5 L1756.8,247.5 L1762.0,253.5 L1766.7,259.4 L1771.0,265.3 L1775.0,271.0 M1723.4,228.7 L1726.3,233.2 L1728.8,237.6 L1731.1,242.0 L1733.1,246.3 L1734.8,250.5 L1736.2,254.7 L1737.3,258.8 L1738.1,262.8 L1738.7,266.7 L1739.0,270.6 L1739.0,274.3 L1738.7,278.0 L1738.2,281.5 L1737.4,285.0 L1736.3,288.3 L1735.0,291.6 L1733.5,294.7 L1731.7,297.7 L1729.7,300.6 L1727.4,303.4 L1725.0,306.0 L1722.3,308.6 L1719.4,311.0 L1716.3,313.3 L1713.1,315.4 L1709.6,317.5 L1705.9,319.4 L1702.1,321.2 L1698.1,322.9 L1694.0,324.4 L1689.7,325.9 L1685.2,327.2 L1680.6,328.3 L1675.9,329.4 L1671.1,330.3 L1666.1,331.1 L1661.0,331.8 L1655.8,332.4 L1650.5,332.9 L1645.1,333.2 L1639.5,333.4 L1634.0,333.5 L1628.3,333.5 L1622.5,333.4 L1616.7,333.1 L1610.8,332.8 L1604.9,332.3 L1598.9,331.7 L1592.9,331.0 L1586.8,330.2 L1580.7,329.3 L1574.5,328.3 L1568.3,327.2 L1562.1,326.0 L1555.9,324.7 L1549.7,323.3 L1543.4,321.8 L1537.2,320.2 L1530.9,318.6 L1524.7,316.8 L1518.4,314.9 L1512.2,312.9 L1506.0,310.9 L1499.8,308.8 L1493.7,306.6 L1487.6,304.3 L1481.5,301.9 L1475.5,299.4 L1469.5,296.9 L1463.6,294.3 L1457.7,291.6 L1451.9,288.8 L1446.1,286.0 L1440.4,283.1 L1434.8,280.1 L1429.3,277.1 L1423.8,274.0 L1418.5,270.9 L1413.2,267.6 L1408.1,264.4 L1403.0,261.1 L1398.0,257.7 L1393.2,254.3 L1388.5,250.8 L1383.9,247.3 L1379.4,243.7 L1375.0,240.1 L1370.8,236.5 L1366.8,232.8 L1362.9,229.1 L1359.1,225.4 L1355.5,221.7 L1352.1,217.9 L1348.8,214.1 L1345.7,210.3 L1342.8,206.5 L1340.1,202.6 L1337.5,198.8 L1335.2,195.0 L1333.0,191.2 L1331.1,187.3 L1329.3,183.5 L1327.8,179.8 L1326.5,176.0 L1325.5,172.2 L1324.6,168.5 L1324.0,164.9 L1323.6,161.2 L1323.5,157.6 L1323.6,154.1 L1324.0,150.6 L1324.6,147.1 L1325.5,143.8 L1326.6,140.5 L1328.0,137.3 L1329.7,134.1 L1331.6,131.1 L1333.8,128.1 L1336.3,125.2 L1339.0,122.5 L1342.1,119.8 L1345.3,117.3 L1348.9,114.9 L1352.7,112.6 L1356.8,110.4 L1361.2,108.4 L1365.8,106.5 L1370.6,104.8 L1375.8,103.2 L1381.2,101.8 L1386.8,100.5 L1392.6,99.4 L1398.7,98.5 L1405.0,97.7 L1411.6,97.1 L1418.3,96.7 L1425.3,96.5 L1432.4,96.5 L1439.7,96.6 L1447.2,96.9 L1454.8,97.4 L1462.5,98.2 L1470.4,99.0 L1478.5,100.1 L1486.6,101.4 L1494.8,102.8 L1503.1,104.5 L1511.4,106.3 L1519.8,108.3 L1528.2,110.5 L1536.6,112.8 L1545.0,115.4 L1553.4,118.0 L1561.8,120.9 L1570.1,123.9 L1578.4,127.1 L1586.5,130.3 L1594.6,133.8 L1602.6,137.4 L1610.4,141.0 L1618.1,144.8 L1625.7,148.8 L1633.1,152.8 L1640.3,156.9 L1647.3,161.1 L1654.1,165.4 L1660.7,169.7 L1667.1,174.1 L1673.2,178.6 L1679.1,183.1 L1684.8,187.6 L1690.2,192.2 L1695.3,196.7 L1700.2,201.3 L1704.7,205.9 L1709.0,210.5 L1713.1,215.1 L1716.8,219.7 L1720.3,224.2 L1723.4,228.7 M1666.2,200.0 L1668.3,203.0 L1670.2,206.0 L1671.8,209.0 L1673.3,211.9 L1674.7,214.9 L1675.8,217.7 L1676.7,220.6 L1677.5,223.4 L1678.1,226.2 L1678.5,228.9 L1678.7,231.5 L1678.7,234.1 L1678.6,236.7 L1678.2,239.1 L1677.7,241.6 L1677.1,243.9 L1676.2,246.2 L1675.2,248.4 L1674.1,250.6 L1672.7,252.6 L1671.2,254.6 L1669.6,256.5 L1667.8,258.4 L1665.9,260.1 L1663.8,261.8 L1661.6,263.4 L1659.3,264.9 L1656.8,266.3 L1654.2,267.6 L1651.5,268.9 L1648.6,270.1 L1645.7,271.1 L1642.6,272.1 L1639.4,273.0 L1636.2,273.8 L1632.8,274.6 L1629.3,275.2 L1625.8,275.8 L1622.1,276.2 L1618.4,276.6 L1614.6,276.9 L1610.8,277.1 L1606.8,277.2 L1602.9,277.2 L1598.8,277.2 L1594.7,277.0 L1590.6,276.8 L1586.4,276.5 L1582.1,276.1 L1577.8,275.7 L1573.5,275.1 L1569.2,274.5 L1564.8,273.8 L1560.4,273.0 L1556.0,272.1 L1551.6,271.2 L1547.2,270.2 L1542.8,269.1 L1538.3,267.9 L1533.9,266.7 L1529.5,265.4 L1525.1,264.0 L1520.7,262.6 L1516.3,261.1 L1511.9,259.5 L1507.6,257.9 L1503.3,256.2 L1499.0,254.4 L1494.8,252.6 L1490.6,250.7 L1486.4,248.8 L1482.3,246.8 L1478.3,244.7 L1474.3,242.6 L1470.4,240.5 L1466.5,238.3 L1462.7,236.1 L1459.0,233.8 L1455.3,231.5 L1451.8,229.1 L1448.3,226.7 L1444.9,224.3 L1441.5,221.8 L1438.3,219.3 L1435.2,216.7 L1432.2,214.2 L1429.2,211.6 L1426.4,209.0 L1423.7,206.3 L1421.1,203.7 L1418.7,201.0 L1416.3,198.3 L1414.1,195.7 L1412.0,193.0 L1410.0,190.3 L1408.2,187.5 L1406.5,184.8 L1405.0,182.1 L1403.6,179.4 L1402.3,176.7 L1401.2,174.1 L1400.2,171.4 L1399.4,168.8 L1398.8,166.1 L1398.3,163.5 L1398.0,161.0 L1397.8,158.4 L1397.8,155.9 L1398.0,153.5 L1398.4,151.1 L1398.9,148.7 L1399.6,146.3 L1400.4,144.1 L1401.5,141.8 L1402.7,139.7 L1404.1,137.6 L1405.6,135.5 L1407.3,133.6 L1409.3,131.7 L1411.3,129.9 L1413.6,128.1 L1416.0,126.5 L1418.6,124.9 L1421.4,123.4 L1424.3,122.0 L1427.4,120.7 L1430.7,119.5 L1434.1,118.4 L1437.6,117.4 L1441.3,116.5 L1445.2,115.7 L1449.2,115.1 L1453.3,114.5 L1457.6,114.0 L1462.0,113.7 L1466.5,113.5 L1471.1,113.4 L1475.8,113.4 L1480.7,113.5 L1485.6,113.7 L1490.6,114.1 L1495.7,114.6 L1500.8,115.2 L1506.1,115.9 L1511.3,116.7 L1516.6,117.7 L1522.0,118.8 L1527.4,120.0 L1532.8,121.3 L1538.2,122.7 L1543.6,124.2 L1549.1,125.8 L1554.5,127.5 L1559.9,129.4 L1565.2,131.3 L1570.5,133.3 L1575.8,135.5 L1581.0,137.7 L1586.1,140.0 L1591.2,142.3 L1596.1,144.8 L1601.0,147.3 L1605.8,149.9 L1610.5,152.6 L1615.1,155.3 L1619.5,158.0 L1623.9,160.9 L1628.1,163.7 L1632.1,166.6 L1636.0,169.6 L1639.8,172.6 L1643.4,175.6 L1646.8,178.6 L1650.1,181.6 L1653.2,184.7 L1656.2,187.7 L1659.0,190.8 L1661.6,193.9 L1664.0,196.9 L1666.2,200.0 M1605.7,184.1 L1606.8,185.6 L1607.8,187.1 L1608.7,188.6 L1609.5,190.1 L1610.3,191.5 L1611.0,193.0 L1611.5,194.4 L1612.0,195.9 L1612.4,197.3 L1612.7,198.7 L1613.0,200.1 L1613.1,201.4 L1613.1,202.8 L1613.1,204.1 L1612.9,205.3 L1612.7,206.6 L1612.4,207.8 L1612.0,209.0 L1611.6,210.1 L1611.0,211.3 L1610.4,212.3 L1609.6,213.4 L1608.8,214.4 L1607.9,215.4 L1607.0,216.3 L1606.0,217.2 L1604.9,218.0 L1603.7,218.9 L1602.4,219.6 L1601.1,220.3 L1599.7,221.0 L1598.3,221.7 L1596.8,222.2 L1595.2,222.8 L1593.6,223.3 L1591.9,223.7 L1590.1,224.1 L1588.3,224.5 L1586.5,224.8 L1584.6,225.1 L1582.7,225.3 L1580.7,225.5 L1578.7,225.6 L1576.6,225.7 L1574.5,225.7 L1572.4,225.7 L1570.2,225.6 L1568.0,225.5 L1565.8,225.4 L1563.6,225.1 L1561.3,224.9 L1559.0,224.6 L1556.7,224.3 L1554.4,223.9 L1552.1,223.5 L1549.8,223.0 L1547.4,222.5 L1545.1,221.9 L1542.7,221.3 L1540.4,220.7 L1538.0,220.0 L1535.7,219.3 L1533.4,218.5 L1531.0,217.7 L1528.7,216.9 L1526.4,216.0 L1524.2,215.1 L1521.9,214.2 L1519.7,213.2 L1517.5,212.2 L1515.3,211.2 L1513.1,210.1 L1511.0,209.0 L1508.9,207.9 L1506.8,206.7 L1504.8,205.5 L1502.8,204.3 L1500.9,203.1 L1499.0,201.8 L1497.2,200.6 L1495.4,199.3 L1493.6,198.0 L1491.9,196.7 L1490.3,195.3 L1488.7,194.0 L1487.2,192.6 L1485.7,191.2 L1484.3,189.8 L1483.0,188.4 L1481.7,187.0 L1480.5,185.6 L1479.4,184.2 L1478.3,182.8 L1477.3,181.3 L1476.4,179.9 L1475.6,178.5 L1474.8,177.1 L1474.1,175.7 L1473.5,174.3 L1473.0,172.9 L1472.5,171.5 L1472.2,170.2 L1471.9,168.8 L1471.7,167.5 L1471.6,166.1 L1471.5,164.8 L1471.6,163.6 L1471.7,162.3 L1471.9,161.1 L1472.3,159.9 L1472.6,158.7 L1473.1,157.5 L1473.7,156.4 L1474.3,155.3 L1475.1,154.2 L1475.9,153.2 L1476.8,152.2 L1477.8,151.3 L1478.9,150.4 L1480.0,149.5 L1481.3,148.7 L1482.6,147.9 L1484.0,147.1 L1485.4,146.5 L1487.0,145.8 L1488.6,145.2 L1490.3,144.6 L1492.0,144.1 L1493.9,143.7 L1495.8,143.3 L1497.7,142.9 L1499.7,142.7 L1501.8,142.4 L1503.9,142.2 L1506.1,142.1 L1508.4,142.0 L1510.6,142.0 L1513.0,142.0 L1515.3,142.1 L1517.7,142.3 L1520.2,142.5 L1522.7,142.7 L1525.2,143.0 L1527.7,143.4 L1530.2,143.8 L1532.8,144.3 L1535.4,144.8 L1538.0,145.4 L1540.6,146.0 L1543.2,146.7 L1545.8,147.5 L1548.4,148.2 L1550.9,149.1 L1553.5,149.9 L1556.1,150.9 L1558.6,151.8 L1561.1,152.9 L1563.6,153.9 L1566.1,155.0 L1568.5,156.1 L1570.9,157.3 L1573.3,158.5 L1575.6,159.7 L1577.9,161.0 L1580.1,162.3 L1582.3,163.6 L1584.4,165.0 L1586.4,166.4 L1588.4,167.8 L1590.3,169.2 L1592.2,170.6 L1594.0,172.1 L1595.7,173.6 L1597.4,175.0 L1599.0,176.5 L1600.5,178.0 L1601.9,179.5 L1603.2,181.0 L1604.5,182.6 L1605.7,184.1 M1876.4,690.9 L1880.6,672.5 L1884.0,654.1 L1886.7,635.8 L1888.8,617.5 L1890.1,599.4 L1890.7,581.4 L1890.6,563.6 L1889.9,546.0 L1888.4,528.6 L1886.4,511.5 L1883.7,494.6 L1880.3,478.1 L1876.4,461.8 L1871.9,446.0 L1866.8,430.5 L1861.1,415.3 L1854.9,400.6 L1848.2,386.3 L1841.0,372.4 L1833.3,359.0 L1825.2,346.0 L1816.6,333.4 L1807.6,321.4 L1798.2,309.8 L1788.5,298.7 L1778.4,288.0 L1767.9,277.9 L1757.2,268.3 L1746.1,259.2 L1734.8,250.5 L1723.2,242.4 L1711.4,234.8 L1699.3,227.6 L1687.1,221.0 L1674.7,214.9 L1662.1,209.2 L1649.3,204.1 L1636.4,199.4 L1623.4,195.2 L1610.3,191.5 L1597.1,188.3 L1583.8,185.6 L1570.5,183.3 L1557.1,181.5 L1543.7,180.1 M1877.8,711.5 L1881.7,694.1 L1885.0,676.6 L1887.5,659.2 L1889.4,641.8 L1890.7,624.4 L1891.2,607.2 L1891.2,590.0 L1890.4,573.0 L1889.1,556.1 L1887.1,539.4 L1884.5,522.9 L1881.3,506.7 L1877.6,490.6 L1873.2,474.9 L1868.3,459.4 L1862.9,444.2 L1856.9,429.4 L1850.5,414.8 L1843.5,400.7 L1836.0,386.8 L1828.1,373.4 L1819.8,360.3 L1811.0,347.6 L1801.8,335.3 L1792.2,323.5 L1782.2,312.0 L1771.9,301.0 L1761.2,290.4 L1750.3,280.3 L1739.0,270.6 L1727.4,261.3 L1715.5,252.5 L1703.4,244.2 L1691.0,236.3 L1678.5,228.9 L1665.7,221.9 L1652.7,215.4 L1639.5,209.4 L1626.2,203.8 L1612.7,198.7 L1599.1,194.1 L1585.4,189.9 L1571.6,186.2 L1557.7,182.9 L1543.7,180.1 M1863.8,725.5 L1867.6,709.0 L1870.7,692.5 L1873.2,675.9 L1875.1,659.4 L1876.4,642.8 L1877.1,626.3 L1877.2,609.9 L1876.7,593.5 L1875.6,577.2 L1874.0,561.1 L1871.8,545.1 L1869.0,529.2 L1865.6,513.6 L1861.8,498.1 L1857.4,482.8 L1852.4,467.8 L1847.0,453.0 L1841.1,438.4 L1834.7,424.1 L1827.8,410.2 L1820.5,396.5 L1812.7,383.1 L1804.5,370.0 L1795.9,357.3 L1786.9,344.9 L1777.5,332.8 L1767.7,321.1 L1757.6,309.8 L1747.1,298.9 L1736.3,288.3 L1725.2,278.2 L1713.7,268.4 L1702.0,259.0 L1690.0,250.1 L1677.7,241.6 L1665.2,233.5 L1652.5,225.8 L1639.5,218.5 L1626.3,211.7 L1612.9,205.3 L1599.4,199.4 L1585.7,193.9 L1571.8,188.9 L1557.8,184.3 L1543.7,180.1 M1837.5,733.3 L1841.1,717.8 L1844.2,702.1 L1846.8,686.4 L1848.8,670.7 L1850.2,654.9 L1851.1,639.2 L1851.5,623.5 L1851.4,607.8 L1850.7,592.2 L1849.5,576.7 L1847.8,561.2 L1845.5,545.9 L1842.8,530.6 L1839.6,515.6 L1835.9,500.6 L1831.7,485.8 L1827.0,471.2 L1821.9,456.8 L1816.3,442.6 L1810.2,428.7 L1803.8,414.9 L1796.9,401.4 L1789.6,388.1 L1781.8,375.2 L1773.7,362.4 L1765.2,350.0 L1756.3,337.9 L1747.0,326.1 L1737.4,314.5 L1727.4,303.4 L1717.1,292.5 L1706.5,282.0 L1695.5,271.8 L1684.3,262.1 L1672.7,252.6 L1660.9,243.6 L1648.8,234.9 L1636.4,226.6 L1623.8,218.7 L1611.0,211.3 L1597.9,204.2 L1584.6,197.5 L1571.2,191.3 L1557.5,185.5 L1543.7,180.1 M1801.5,735.9 L1805.1,721.1 L1808.2,706.2 L1810.8,691.3 L1813.0,676.4 L1814.7,661.4 L1815.9,646.4 L1816.6,631.4 L1816.8,616.4 L1816.6,601.5 L1816.0,586.6 L1814.9,571.7 L1813.3,556.9 L1811.3,542.2 L1808.8,527.6 L1805.9,513.0 L1802.5,498.6 L1798.8,484.3 L1794.6,470.2 L1789.9,456.2 L1784.9,442.4 L1779.5,428.7 L1773.6,415.2 L1767.4,402.0 L1760.7,388.9 L1753.7,376.0 L1746.3,363.4 L1738.5,351.0 L1730.4,338.9 L1721.9,327.0 L1713.1,315.4 L1703.9,304.1 L1694.3,293.1 L1684.5,282.3 L1674.3,271.9 L1663.8,261.8 L1653.0,252.0 L1641.9,242.5 L1630.6,233.4 L1618.9,224.7 L1607.0,216.3 L1594.8,208.3 L1582.4,200.6 L1569.7,193.4 L1556.8,186.5 L1543.7,180.1 M1758.2,733.7 L1761.8,719.7 L1765.0,705.6 L1767.7,691.4 L1770.0,677.2 L1772.0,662.9 L1773.5,648.6 L1774.6,634.3 L1775.4,619.9 L1775.7,605.6 L1775.6,591.3 L1775.1,577.0 L1774.2,562.8 L1773.0,548.6 L1771.3,534.5 L1769.3,520.4 L1766.9,506.4 L1764.1,492.5 L1760.9,478.7 L1757.3,465.0 L1753.3,451.4 L1749.0,438.0 L1744.3,424.7 L1739.3,411.5 L1733.9,398.5 L1728.1,385.7 L1722.0,373.0 L1715.5,360.6 L1708.7,348.3 L1701.5,336.3 L1694.0,324.4 L1686.1,312.8 L1678.0,301.5 L1669.4,290.3 L1660.6,279.5 L1651.5,268.9 L1642.0,258.6 L1632.2,248.6 L1622.1,238.8 L1611.8,229.4 L1601.1,220.3 L1590.2,211.6 L1578.9,203.2 L1567.4,195.1 L1555.7,187.4 L1543.7,180.1 M1709.6,727.7 L1713.2,714.3 L1716.4,700.8 L1719.3,687.3 L1721.9,673.7 L1724.1,660.0 L1726.0,646.3 L1727.5,632.6 L1728.7,618.9 L1729.6,605.2 L1730.1,591.5 L1730.3,577.8 L1730.1,564.1 L1729.6,550.4 L1728.8,536.7 L1727.7,523.2 L1726.2,509.6 L1724.4,496.1 L1722.2,482.7 L1719.8,469.4 L1717.0,456.1 L1713.8,443.0 L1710.4,429.9 L1706.6,417.0 L1702.5,404.2 L1698.0,391.5 L1693.3,378.9 L1688.2,366.5 L1682.8,354.3 L1677.1,342.2 L1671.1,330.3 L1664.7,318.6 L1658.0,307.1 L1651.1,295.8 L1643.8,284.7 L1636.2,273.8 L1628.2,263.2 L1620.0,252.8 L1611.5,242.7 L1602.7,232.9 L1593.6,223.3 L1584.2,214.0 L1574.5,205.0 L1564.5,196.4 L1554.2,188.1 L1543.7,180.1 M1657.2,718.3 L1660.8,705.4 L1664.1,692.5 L1667.2,679.5 L1670.0,666.5 L1672.5,653.4 L1674.7,640.2 L1676.7,627.1 L1678.3,613.9 L1679.7,600.7 L1680.9,587.5 L1681.7,574.4 L1682.3,561.2 L1682.6,548.0 L1682.6,534.8 L1682.4,521.7 L1681.9,508.6 L1681.0,495.6 L1680.0,482.6 L1678.6,469.7 L1677.0,456.8 L1675.0,444.0 L1672.8,431.3 L1670.4,418.6 L1667.6,406.1 L1664.5,393.6 L1661.2,381.3 L1657.6,369.1 L1653.7,357.0 L1649.5,345.0 L1645.1,333.2 L1640.3,321.5 L1635.3,310.0 L1629.9,298.7 L1624.3,287.5 L1618.4,276.6 L1612.2,265.8 L1605.8,255.3 L1599.0,245.0 L1592.0,234.9 L1584.6,225.1 L1577.0,215.5 L1569.1,206.2 L1560.9,197.2 L1552.4,188.5 L1543.7,180.1 M1545.3,691.5 L1549.1,679.4 L1552.7,667.3 L1556.2,655.1 L1559.4,642.9 L1562.6,630.7 L1565.6,618.4 L1568.4,606.2 L1571.0,593.9 L1573.5,581.6 L1575.9,569.3 L1578.0,557.0 L1580.0,544.7 L1581.9,532.5 L1583.6,520.2 L1585.1,508.0 L1586.4,495.7 L1587.6,483.6 L1588.6,471.4 L1589.5,459.3 L1590.1,447.2 L1590.6,435.2 L1590.9,423.2 L1591.1,411.3 L1591.0,399.5 L1590.8,387.7 L1590.4,376.0 L1589.8,364.4 L1589.0,352.9 L1588.0,341.5 L1586.8,330.2 L1585.4,319.1 L1583.8,308.0 L1582.0,297.1 L1580.0,286.3 L1577.8,275.7 L1575.4,265.2 L1572.8,254.9 L1569.9,244.8 L1566.9,234.9 L1563.6,225.1 L1560.1,215.7 L1556.3,206.4 L1552.3,197.4 L1548.1,188.6 L1543.7,180.1 M1487.6,674.7 L1491.5,662.9 L1495.3,651.1 L1498.9,639.2 L1502.5,627.3 L1506.0,615.4 L1509.3,603.5 L1512.6,591.5 L1515.7,579.6 L1518.8,567.7 L1521.7,555.7 L1524.5,543.8 L1527.3,531.9 L1529.9,520.0 L1532.4,508.2 L1534.8,496.3 L1537.0,484.5 L1539.2,472.7 L1541.2,461.0 L1543.2,449.3 L1545.0,437.6 L1546.6,426.0 L1548.2,414.4 L1549.6,403.0 L1550.9,391.5 L1552.1,380.2 L1553.1,368.9 L1554.0,357.7 L1554.8,346.6 L1555.4,335.6 L1555.9,324.7 L1556.2,314.0 L1556.4,303.3 L1556.4,292.8 L1556.3,282.4 L1556.0,272.1 L1555.6,262.0 L1555.0,252.1 L1554.2,242.4 L1553.2,232.8 L1552.1,223.5 L1550.8,214.3 L1549.3,205.4 L1547.6,196.7 L1545.7,188.3 L1543.7,180.1 M1429.5,656.2 L1433.5,644.5 L1437.5,632.9 L1441.4,621.2 L1445.3,609.5 L1449.1,597.8 L1452.8,586.2 L1456.5,574.5 L1460.2,562.9 L1463.8,551.2 L1467.4,539.6 L1470.8,528.0 L1474.3,516.4 L1477.7,504.9 L1481.0,493.4 L1484.2,481.9 L1487.4,470.4 L1490.6,459.0 L1493.6,447.7 L1496.6,436.4 L1499.6,425.1 L1502.4,413.9 L1505.2,402.8 L1507.9,391.7 L1510.6,380.8 L1513.1,369.9 L1515.6,359.0 L1518.0,348.3 L1520.3,337.7 L1522.5,327.2 L1524.7,316.8 L1526.7,306.5 L1528.7,296.3 L1530.5,286.3 L1532.2,276.4 L1533.9,266.7 L1535.4,257.1 L1536.8,247.7 L1538.1,238.5 L1539.3,229.5 L1540.4,220.7 L1541.3,212.1 L1542.1,203.7 L1542.8,195.6 L1543.3,187.7 L1543.7,180.1 M1371.6,636.0 L1375.7,624.4 L1379.9,612.9 L1384.1,601.3 L1388.3,589.8 L1392.4,578.3 L1396.6,566.8 L1400.8,555.4 L1405.0,543.9 L1409.2,532.5 L1413.3,521.1 L1417.5,509.8 L1421.7,498.5 L1425.8,487.2 L1429.9,476.0 L1434.1,464.9 L1438.2,453.8 L1442.3,442.7 L1446.4,431.7 L1450.5,420.8 L1454.5,410.0 L1458.5,399.2 L1462.6,388.5 L1466.6,377.9 L1470.5,367.4 L1474.5,357.0 L1478.4,346.7 L1482.3,336.5 L1486.1,326.4 L1489.9,316.4 L1493.7,306.6 L1497.4,296.8 L1501.1,287.3 L1504.8,277.8 L1508.4,268.6 L1511.9,259.5 L1515.4,250.6 L1518.8,241.8 L1522.2,233.3 L1525.5,225.0 L1528.7,216.9 L1531.9,209.0 L1535.0,201.4 L1538.0,194.0 L1540.9,186.9 L1543.7,180.1 M1314.2,614.4 L1318.6,602.8 L1323.0,591.3 L1327.5,579.8 L1332.0,568.4 L1336.6,556.9 L1341.2,545.6 L1345.9,534.2 L1350.6,522.9 L1355.3,511.7 L1360.2,500.5 L1365.0,489.4 L1369.9,478.3 L1374.9,467.3 L1379.8,456.4 L1384.8,445.5 L1389.9,434.8 L1395.0,424.1 L1400.1,413.4 L1405.3,402.9 L1410.4,392.5 L1415.6,382.1 L1420.9,371.9 L1426.1,361.7 L1431.4,351.7 L1436.7,341.8 L1442.1,332.0 L1447.4,322.4 L1452.8,312.9 L1458.2,303.5 L1463.6,294.3 L1469.0,285.2 L1474.4,276.3 L1479.8,267.6 L1485.2,259.0 L1490.6,250.7 L1496.0,242.6 L1501.4,234.6 L1506.8,226.9 L1512.1,219.4 L1517.5,212.2 L1522.8,205.2 L1528.0,198.5 L1533.3,192.1 L1538.5,185.9 L1543.7,180.1 M1257.9,591.5 L1262.5,579.9 L1267.2,568.3 L1272.0,556.8 L1276.9,545.3 L1281.9,533.9 L1287.0,522.6 L1292.2,511.3 L1297.5,500.1 L1302.9,489.0 L1308.4,478.0 L1314.0,467.0 L1319.6,456.1 L1325.4,445.3 L1331.2,434.7 L1337.1,424.1 L1343.1,413.6 L1349.2,403.2 L1355.4,392.9 L1361.6,382.7 L1367.9,372.7 L1374.3,362.8 L1380.8,353.0 L1387.3,343.4 L1393.9,333.9 L1400.6,324.5 L1407.3,315.3 L1414.1,306.2 L1420.9,297.4 L1427.8,288.7 L1434.8,280.1 L1441.8,271.8 L1448.9,263.7 L1456.0,255.7 L1463.2,248.0 L1470.4,240.5 L1477.6,233.2 L1484.9,226.2 L1492.2,219.4 L1499.5,212.9 L1506.8,206.7 L1514.2,200.8 L1521.6,195.1 L1528.9,189.8 L1536.3,184.8 L1543.7,180.1 M1203.3,567.4 L1208.1,555.7 L1213.1,544.0 L1218.3,532.4 L1223.6,520.8 L1229.1,509.4 L1234.7,498.0 L1240.4,486.8 L1246.4,475.6 L1252.4,464.6 L1258.6,453.6 L1264.9,442.8 L1271.4,432.0 L1278.0,421.4 L1284.7,411.0 L1291.5,400.6 L1298.5,390.4 L1305.6,380.3 L1312.8,370.4 L1320.2,360.6 L1327.6,351.0 L1335.2,341.5 L1342.9,332.2 L1350.6,323.0 L1358.5,314.1 L1366.5,305.3 L1374.7,296.7 L1382.9,288.3 L1391.2,280.1 L1399.6,272.1 L1408.1,264.4 L1416.6,256.8 L1425.3,249.5 L1434.0,242.5 L1442.9,235.7 L1451.8,229.1 L1460.7,222.8 L1469.7,216.8 L1478.8,211.1 L1488.0,205.7 L1497.2,200.6 L1506.4,195.8 L1515.7,191.3 L1525.0,187.2 L1534.3,183.5 L1543.7,180.1 M1150.9,542.5 L1156.1,530.5 L1161.4,518.6 L1167.0,506.8 L1172.7,495.1 L1178.7,483.5 L1184.9,472.1 L1191.2,460.8 L1197.8,449.6 L1204.5,438.5 L1211.5,427.6 L1218.6,416.9 L1225.9,406.3 L1233.3,395.8 L1241.0,385.5 L1248.8,375.4 L1256.7,365.5 L1264.9,355.7 L1273.1,346.1 L1281.6,336.7 L1290.2,327.5 L1298.9,318.4 L1307.8,309.6 L1316.9,301.0 L1326.1,292.6 L1335.4,284.5 L1344.8,276.6 L1354.4,268.9 L1364.1,261.4 L1373.9,254.2 L1383.9,247.3 L1393.9,240.6 L1404.1,234.2 L1414.4,228.1 L1424.7,222.3 L1435.2,216.7 L1445.7,211.5 L1456.4,206.6 L1467.1,202.1 L1477.9,197.8 L1488.7,194.0 L1499.6,190.4 L1510.6,187.3 L1521.6,184.5 L1532.6,182.1 L1543.7,180.1 M1056.5,490.7 L1062.4,477.9 L1068.6,465.4 L1075.0,453.0 L1081.8,440.8 L1088.9,428.8 L1096.3,417.0 L1104.0,405.4 L1112.0,394.0 L1120.3,382.8 L1128.8,371.9 L1137.6,361.2 L1146.6,350.7 L1155.9,340.5 L1165.4,330.5 L1175.2,320.8 L1185.2,311.4 L1195.4,302.2 L1205.9,293.3 L1216.5,284.7 L1227.4,276.3 L1238.4,268.3 L1249.7,260.6 L1261.1,253.1 L1272.7,246.0 L1284.5,239.2 L1296.4,232.8 L1308.5,226.6 L1320.8,220.8 L1333.2,215.4 L1345.7,210.3 L1358.4,205.5 L1371.1,201.2 L1384.0,197.1 L1397.0,193.5 L1410.0,190.3 L1423.2,187.4 L1436.4,184.9 L1449.7,182.8 L1463.0,181.2 L1476.4,179.9 L1489.9,179.1 L1503.3,178.7 L1516.8,178.7 L1530.2,179.2 L1543.7,180.1 M1016.9,464.5 L1023.1,451.3 L1029.8,438.3 L1036.8,425.5 L1044.2,412.9 L1051.9,400.6 L1060.0,388.5 L1068.4,376.6 L1077.1,365.1 L1086.1,353.8 L1095.5,342.8 L1105.1,332.0 L1115.1,321.6 L1125.3,311.5 L1135.8,301.6 L1146.6,292.1 L1157.6,282.9 L1168.8,274.1 L1180.3,265.5 L1192.0,257.4 L1203.9,249.5 L1216.1,242.0 L1228.4,234.9 L1240.9,228.1 L1253.6,221.7 L1266.5,215.6 L1279.5,210.0 L1292.7,204.7 L1306.0,199.8 L1319.5,195.3 L1333.0,191.2 L1346.7,187.5 L1360.5,184.2 L1374.3,181.3 L1388.3,178.8 L1402.3,176.7 L1416.4,175.1 L1430.5,173.9 L1444.6,173.1 L1458.8,172.8 L1473.0,172.9 L1487.2,173.4 L1501.3,174.4 L1515.5,175.9 L1529.6,177.8 L1543.7,180.1 M984.3,438.9 L991.0,425.1 L998.2,411.5 L1005.7,398.2 L1013.7,385.2 L1022.1,372.5 L1030.9,360.0 L1040.0,347.9 L1049.5,336.1 L1059.3,324.7 L1069.5,313.5 L1080.0,302.8 L1090.9,292.3 L1102.0,282.3 L1113.4,272.6 L1125.1,263.3 L1137.1,254.3 L1149.3,245.8 L1161.7,237.6 L1174.4,229.9 L1187.3,222.5 L1200.4,215.6 L1213.7,209.1 L1227.2,203.0 L1240.8,197.3 L1254.6,192.0 L1268.5,187.2 L1282.6,182.8 L1296.8,178.8 L1311.1,175.3 L1325.5,172.2 L1339.9,169.6 L1354.4,167.4 L1369.0,165.7 L1383.6,164.4 L1398.3,163.5 L1413.0,163.2 L1427.6,163.2 L1442.3,163.7 L1457.0,164.7 L1471.6,166.1 L1486.1,168.0 L1500.6,170.4 L1515.1,173.2 L1529.4,176.4 L1543.7,180.1 M960.9,414.6 L968.1,400.1 L975.7,385.9 L983.9,372.0 L992.5,358.4 L1001.5,345.2 L1010.9,332.4 L1020.8,320.0 L1031.0,307.9 L1041.6,296.2 L1052.6,284.9 L1063.9,274.1 L1075.6,263.6 L1087.6,253.6 L1099.8,244.1 L1112.4,234.9 L1125.2,226.3 L1138.3,218.0 L1151.5,210.3 L1165.1,203.0 L1178.8,196.1 L1192.7,189.8 L1206.7,183.9 L1221.0,178.5 L1235.3,173.6 L1249.8,169.1 L1264.4,165.1 L1279.1,161.6 L1293.9,158.6 L1308.7,156.1 L1323.6,154.1 L1338.6,152.5 L1353.5,151.4 L1368.5,150.8 L1383.4,150.7 L1398.4,151.1 L1413.3,151.9 L1428.1,153.2 L1442.9,154.9 L1457.6,157.2 L1472.3,159.9 L1486.8,163.0 L1501.2,166.6 L1515.5,170.7 L1529.7,175.2 L1543.7,180.1 M948.9,392.6 L956.6,377.3 L964.8,362.3 L973.5,347.8 L982.6,333.6 L992.3,319.9 L1002.4,306.6 L1012.9,293.7 L1023.8,281.3 L1035.1,269.4 L1046.8,257.9 L1058.8,247.0 L1071.2,236.5 L1083.9,226.5 L1096.8,217.0 L1110.1,208.1 L1123.6,199.7 L1137.3,191.7 L1151.2,184.4 L1165.3,177.5 L1179.6,171.2 L1194.0,165.4 L1208.6,160.2 L1223.3,155.5 L1238.1,151.3 L1253.0,147.6 L1267.9,144.5 L1282.9,141.9 L1298.0,139.8 L1313.0,138.3 L1328.0,137.3 L1343.1,136.7 L1358.0,136.7 L1373.0,137.2 L1387.9,138.2 L1402.7,139.7 L1417.4,141.6 L1432.0,144.1 L1446.5,147.0 L1460.9,150.4 L1475.1,154.2 L1489.2,158.5 L1503.1,163.3 L1516.8,168.5 L1530.3,174.1 L1543.7,180.1 M951.1,374.0 L959.2,357.9 L967.9,342.1 L977.1,326.9 L986.8,312.0 L996.9,297.7 L1007.6,283.8 L1018.6,270.5 L1030.1,257.7 L1042.0,245.5 L1054.2,233.8 L1066.7,222.7 L1079.6,212.1 L1092.8,202.1 L1106.2,192.7 L1119.8,183.9 L1133.7,175.7 L1147.8,168.1 L1162.1,161.1 L1176.5,154.6 L1191.0,148.8 L1205.6,143.6 L1220.4,138.9 L1235.2,134.9 L1250.0,131.4 L1264.9,128.5 L1279.8,126.2 L1294.6,124.4 L1309.5,123.2 L1324.3,122.6 L1339.0,122.5 L1353.7,122.9 L1368.3,123.9 L1382.8,125.4 L1397.1,127.4 L1411.3,129.9 L1425.4,132.9 L1439.3,136.3 L1453.1,140.3 L1466.7,144.7 L1480.0,149.5 L1493.2,154.8 L1506.2,160.5 L1518.9,166.6 L1531.4,173.2 L1543.7,180.1 M970.0,360.5 L978.5,343.4 L987.6,326.8 L997.2,310.7 L1007.3,295.2 L1017.9,280.2 L1028.9,265.7 L1040.3,251.9 L1052.1,238.6 L1064.2,226.0 L1076.7,214.0 L1089.5,202.7 L1102.6,192.0 L1115.9,181.9 L1129.5,172.5 L1143.2,163.8 L1157.1,155.8 L1171.2,148.4 L1185.3,141.6 L1199.6,135.6 L1214.0,130.1 L1228.4,125.4 L1242.8,121.3 L1257.2,117.8 L1271.6,114.9 L1286.0,112.7 L1300.3,111.1 L1314.6,110.0 L1328.8,109.6 L1342.8,109.7 L1356.8,110.4 L1370.6,111.7 L1384.3,113.5 L1397.8,115.8 L1411.2,118.7 L1424.3,122.0 L1437.3,125.9 L1450.0,130.2 L1462.6,134.9 L1474.9,140.2 L1487.0,145.8 L1498.8,151.9 L1510.4,158.4 L1521.8,165.2 L1532.8,172.5 L1543.7,180.1 M1008.0,353.6 L1016.8,335.6 L1026.1,318.1 L1036.0,301.1 L1046.3,284.8 L1057.0,269.0 L1068.1,253.9 L1079.6,239.5 L1091.4,225.7 L1103.5,212.7 L1116.0,200.3 L1128.6,188.7 L1141.5,177.7 L1154.5,167.5 L1167.8,158.1 L1181.1,149.3 L1194.6,141.3 L1208.1,134.0 L1221.7,127.5 L1235.3,121.6 L1248.9,116.5 L1262.6,112.1 L1276.1,108.3 L1289.6,105.3 L1303.1,102.9 L1316.4,101.2 L1329.7,100.1 L1342.8,99.6 L1355.7,99.7 L1368.5,100.5 L1381.2,101.8 L1393.6,103.7 L1405.9,106.1 L1417.9,109.1 L1429.7,112.6 L1441.3,116.5 L1452.7,121.0 L1463.8,125.9 L1474.7,131.3 L1485.4,137.1 L1495.8,143.3 L1505.9,149.9 L1515.7,156.9 L1525.3,164.3 L1534.6,172.0 L1543.7,180.1 M1144.7,365.7 L1153.7,345.9 L1162.9,326.6 L1172.5,307.9 L1182.4,289.9 L1192.5,272.6 L1202.8,256.1 L1213.2,240.3 L1223.9,225.3 L1234.6,211.0 L1245.4,197.6 L1256.3,185.0 L1267.3,173.3 L1278.2,162.4 L1289.1,152.3 L1300.0,143.1 L1310.9,134.7 L1321.6,127.1 L1332.3,120.3 L1342.8,114.3 L1353.2,109.1 L1363.5,104.7 L1373.6,101.1 L1383.5,98.2 L1393.2,96.0 L1402.8,94.5 L1412.1,93.7 L1421.2,93.6 L1430.1,94.1 L1438.7,95.2 L1447.2,96.9 L1455.3,99.2 L1463.3,102.1 L1471.0,105.5 L1478.4,109.4 L1485.6,113.7 L1492.5,118.6 L1499.2,123.9 L1505.6,129.6 L1511.8,135.7 L1517.7,142.3 L1523.4,149.2 L1528.8,156.4 L1534.0,164.0 L1539.0,171.9 L1543.7,180.1 M1240.6,386.6 L1249.3,366.0 L1258.2,345.9 L1267.2,326.4 L1276.3,307.7 L1285.6,289.6 L1294.9,272.3 L1304.2,255.8 L1313.6,240.0 L1322.9,225.1 L1332.2,211.0 L1341.5,197.8 L1350.6,185.4 L1359.7,173.9 L1368.7,163.2 L1377.5,153.4 L1386.2,144.5 L1394.7,136.4 L1403.1,129.1 L1411.2,122.7 L1419.2,117.1 L1427.0,112.3 L1434.5,108.2 L1441.8,104.9 L1448.9,102.4 L1455.8,100.6 L1462.4,99.4 L1468.8,99.0 L1475.0,99.2 L1480.9,100.0 L1486.6,101.4 L1492.0,103.4 L1497.2,105.9 L1502.1,109.0 L1506.9,112.6 L1511.3,116.7 L1515.6,121.3 L1519.6,126.3 L1523.3,131.7 L1526.9,137.6 L1530.2,143.8 L1533.3,150.4 L1536.2,157.4 L1538.9,164.6 L1541.4,172.2 L1543.7,180.1 M1348.9,417.0 L1357.1,395.8 L1365.3,375.1 L1373.5,355.0 L1381.7,335.6 L1389.8,316.8 L1397.7,298.8 L1405.6,281.5 L1413.3,265.0 L1420.9,249.3 L1428.3,234.5 L1435.5,220.5 L1442.5,207.4 L1449.3,195.1 L1455.9,183.6 L1462.3,173.1 L1468.4,163.4 L1474.3,154.5 L1479.9,146.6 L1485.3,139.4 L1490.5,133.0 L1495.4,127.5 L1500.0,122.7 L1504.4,118.7 L1508.5,115.5 L1512.4,113.0 L1516.1,111.2 L1519.4,110.0 L1522.6,109.6 L1525.5,109.7 L1528.2,110.5 L1530.6,111.8 L1532.9,113.8 L1534.9,116.2 L1536.6,119.2 L1538.2,122.7 L1539.6,126.6 L1540.8,131.0 L1541.8,135.8 L1542.5,141.1 L1543.2,146.7 L1543.6,152.7 L1543.9,159.1 L1543.9,165.8 L1543.9,172.8 L1543.7,180.1 M1462.3,455.4 L1469.9,433.8 L1477.4,412.7 L1484.6,392.1 L1491.5,372.2 L1498.2,352.8 L1504.7,334.2 L1510.8,316.3 L1516.7,299.1 L1522.3,282.7 L1527.6,267.0 L1532.5,252.2 L1537.2,238.2 L1541.5,225.1 L1545.5,212.7 L1549.2,201.3 L1552.6,190.6 L1555.7,180.8 L1558.5,171.9 L1560.9,163.7 L1563.1,156.4 L1565.0,149.9 L1566.6,144.1 L1567.9,139.1 L1569.0,134.9 L1569.8,131.4 L1570.3,128.5 L1570.6,126.4 L1570.7,124.9 L1570.5,124.1 L1570.1,123.9 L1569.5,124.3 L1568.7,125.2 L1567.7,126.7 L1566.6,128.8 L1565.2,131.3 L1563.7,134.3 L1562.0,137.8 L1560.2,141.8 L1558.2,146.1 L1556.1,150.9 L1553.8,156.0 L1551.5,161.5 L1549.0,167.4 L1546.4,173.6 L1543.7,180.1 M1572.7,498.9 L1579.6,477.3 L1586.1,456.0 L1592.3,435.2 L1598.0,415.0 L1603.3,395.3 L1608.2,376.2 L1612.6,357.7 L1616.6,339.9 L1620.2,322.9 L1623.4,306.5 L1626.1,290.9 L1628.4,276.1 L1630.3,262.0 L1631.8,248.7 L1633.0,236.3 L1633.7,224.6 L1634.0,213.7 L1634.0,203.7 L1633.7,194.4 L1633.0,185.9 L1631.9,178.2 L1630.6,171.2 L1629.0,165.0 L1627.1,159.5 L1624.9,154.8 L1622.5,150.7 L1619.8,147.3 L1616.9,144.6 L1613.7,142.5 L1610.4,141.0 L1606.9,140.2 L1603.2,139.9 L1599.4,140.2 L1595.3,141.0 L1591.2,142.3 L1586.9,144.2 L1582.5,146.5 L1577.9,149.3 L1573.3,152.5 L1568.5,156.1 L1563.7,160.2 L1558.8,164.6 L1553.8,169.4 L1548.8,174.6 L1543.7,180.1 M1672.1,544.4 L1678.3,523.0 L1684.0,501.9 L1689.1,481.2 L1693.7,460.8 L1697.7,441.0 L1701.1,421.7 L1704.0,402.9 L1706.3,384.7 L1708.1,367.1 L1709.4,350.2 L1710.2,333.9 L1710.4,318.3 L1710.2,303.4 L1709.5,289.2 L1708.3,275.8 L1706.7,263.1 L1704.6,251.2 L1702.1,239.9 L1699.3,229.5 L1696.1,219.7 L1692.5,210.8 L1688.6,202.5 L1684.3,194.9 L1679.8,188.1 L1675.0,181.9 L1669.9,176.5 L1664.6,171.7 L1659.0,167.5 L1653.2,164.0 L1647.3,161.1 L1641.1,158.8 L1634.8,157.1 L1628.4,155.9 L1621.8,155.3 L1615.1,155.3 L1608.3,155.7 L1601.3,156.7 L1594.3,158.1 L1587.2,160.0 L1580.1,162.3 L1572.9,165.1 L1565.6,168.3 L1558.3,171.8 L1551.0,175.8 L1543.7,180.1 M1754.6,588.6 L1760.1,567.7 L1765.0,547.0 L1769.2,526.6 L1772.8,506.5 L1775.7,486.7 L1778.0,467.4 L1779.6,448.5 L1780.6,430.2 L1781.0,412.3 L1780.8,394.9 L1780.0,378.2 L1778.6,362.0 L1776.6,346.5 L1774.2,331.5 L1771.2,317.3 L1767.7,303.6 L1763.7,290.7 L1759.3,278.4 L1754.5,266.8 L1749.2,255.9 L1743.6,245.6 L1737.6,236.1 L1731.3,227.2 L1724.6,218.9 L1717.6,211.4 L1710.4,204.4 L1702.9,198.2 L1695.2,192.5 L1687.3,187.5 L1679.1,183.1 L1670.8,179.2 L1662.3,176.0 L1653.7,173.3 L1644.9,171.2 L1636.0,169.6 L1627.0,168.5 L1618.0,168.0 L1608.8,167.9 L1599.6,168.3 L1590.3,169.2 L1581.0,170.5 L1571.7,172.3 L1562.4,174.5 L1553.0,177.1 L1543.7,180.1 M1816.4,628.8 L1821.4,608.6 L1825.7,588.6 L1829.2,568.7 L1832.0,549.0 L1834.1,529.7 L1835.5,510.6 L1836.3,491.9 L1836.3,473.5 L1835.7,455.6 L1834.4,438.1 L1832.5,421.1 L1830.0,404.6 L1826.9,388.5 L1823.2,373.1 L1819.0,358.1 L1814.2,343.8 L1808.9,330.0 L1803.2,316.8 L1797.0,304.3 L1790.3,292.3 L1783.2,280.9 L1775.8,270.1 L1768.0,260.0 L1759.8,250.5 L1751.3,241.5 L1742.5,233.2 L1733.4,225.5 L1724.1,218.4 L1714.5,211.9 L1704.7,205.9 L1694.8,200.6 L1684.6,195.8 L1674.3,191.5 L1663.8,187.8 L1653.2,184.7 L1642.5,182.0 L1631.8,179.9 L1620.9,178.3 L1609.9,177.2 L1599.0,176.5 L1587.9,176.4 L1576.9,176.6 L1565.8,177.4 L1554.7,178.5 L1543.7,180.1" fill="none" stroke="#8a8d92" stroke-width="1"/>
<path d="M1856.7,663.2 L1861.2,643.9 L1865.0,624.6 L1868.0,605.5 L1870.4,586.5 L1871.9,567.6 L1872.8,549.0 L1873.0,530.7 L1872.5,512.6 L1871.3,494.8 L1869.4,477.4 L1866.9,460.4 L1863.7,443.7 L1860.0,427.5 L1855.6,411.7 L1850.7,396.4 L1845.3,381.5 L1839.3,367.2 L1832.8,353.3 L1825.8,339.9 L1818.3,327.1 L1810.5,314.8 L1802.1,303.0 L1793.5,291.8 L1784.4,281.2 L1775.0,271.0 L1765.2,261.5 L1755.2,252.5 L1744.8,244.0 L1734.2,236.1 L1723.4,228.7 L1712.3,221.9 L1701.1,215.6 L1689.6,209.9 L1678.0,204.7 L1666.2,200.0 L1654.3,195.8 L1642.3,192.1 L1630.2,188.9 L1618.0,186.3 L1605.7,184.1 L1593.3,182.3 L1581.0,181.1 L1568.5,180.3 L1556.1,180.0 L1543.7,180.1 M1602.1,706.1 L1605.8,693.7 L1609.2,681.2 L1612.5,668.6 L1615.5,656.1 L1618.3,643.4 L1620.9,630.8 L1623.3,618.1 L1625.5,605.4 L1627.4,592.7 L1629.2,580.0 L1630.7,567.3 L1632.0,554.6 L1633.1,541.9 L1633.9,529.2 L1634.6,516.5 L1635.0,503.9 L1635.2,491.3 L1635.1,478.7 L1634.9,466.2 L1634.4,453.7 L1633.7,441.3 L1632.7,428.9 L1631.6,416.6 L1630.2,404.4 L1628.5,392.3 L1626.6,380.2 L1624.5,368.3 L1622.2,356.5 L1619.6,344.7 L1616.7,333.1 L1613.6,321.6 L1610.3,310.3 L1606.7,299.1 L1602.9,288.1 L1598.8,277.2 L1594.5,266.5 L1589.9,256.0 L1585.0,245.7 L1579.9,235.6 L1574.5,225.7 L1568.9,216.1 L1563.0,206.7 L1556.8,197.5 L1550.4,188.7 L1543.7,180.1 M1101.7,516.8 L1107.1,504.5 L1112.9,492.3 L1118.9,480.2 L1125.1,468.3 L1131.7,456.6 L1138.4,445.0 L1145.4,433.5 L1152.7,422.3 L1160.1,411.2 L1167.9,400.3 L1175.8,389.6 L1183.9,379.1 L1192.3,368.7 L1200.9,358.6 L1209.7,348.7 L1218.6,339.0 L1227.8,329.5 L1237.2,320.3 L1246.7,311.2 L1256.5,302.5 L1266.4,293.9 L1276.5,285.6 L1286.7,277.6 L1297.2,269.8 L1307.8,262.3 L1318.5,255.1 L1329.4,248.2 L1340.4,241.5 L1351.6,235.2 L1362.9,229.1 L1374.3,223.4 L1385.8,218.0 L1397.5,212.9 L1409.3,208.1 L1421.1,203.7 L1433.1,199.6 L1445.1,195.9 L1457.3,192.6 L1469.5,189.6 L1481.7,187.0 L1494.0,184.8 L1506.4,183.0 L1518.8,181.6 L1531.2,180.6 L1543.7,180.1 M1066.3,354.9 L1075.3,335.9 L1084.7,317.5 L1094.6,299.7 L1104.8,282.5 L1115.4,266.0 L1126.3,250.2 L1137.5,235.1 L1148.9,220.8 L1160.6,207.2 L1172.5,194.4 L1184.5,182.3 L1196.7,171.0 L1209.0,160.6 L1221.3,150.9 L1233.7,142.0 L1246.2,133.9 L1258.6,126.5 L1271.1,120.0 L1283.4,114.2 L1295.7,109.2 L1308.0,104.9 L1320.1,101.3 L1332.1,98.5 L1344.0,96.3 L1355.7,94.9 L1367.3,94.1 L1378.6,93.9 L1389.8,94.4 L1400.8,95.5 L1411.6,97.1 L1422.1,99.4 L1432.4,102.2 L1442.5,105.5 L1452.4,109.4 L1462.0,113.7 L1471.3,118.5 L1480.4,123.8 L1489.2,129.5 L1497.8,135.6 L1506.1,142.1 L1514.2,149.0 L1521.9,156.3 L1529.5,163.9 L1536.7,171.8 L1543.7,180.1" fill="none" stroke="#8a8d92" stroke-width="1.3"/>
<path d="M1250.5,185.5 L1262.1,179.9 L1273.7,174.7 L1285.3,169.6 L1296.9,164.8 L1308.4,160.3 L1320.0,156.0 L1331.5,152.0 L1343.0,148.2 L1354.4,144.6 L1365.8,141.3 L1377.2,138.2 L1388.5,135.4 L1399.8,132.8 L1411.0,130.5 L1422.2,128.4 L1433.3,126.6 L1444.3,125.0 L1455.3,123.7 L1466.1,122.7 L1476.9,121.9 L1487.6,121.4 L1498.1,121.2 L1508.6,121.2 L1518.9,121.6 L1529.2,122.2 L1539.2,123.2 L1549.2,124.4 L1559.0,126.0 L1568.6,127.9 L1578.0,130.1 L1587.3,132.7 L1596.4,135.6 L1605.2,139.0 L1613.9,142.6 L1622.3,146.7 L1630.5,151.2 L1638.3,156.1 L1646.0,161.4 L1653.3,167.2 L1660.3,173.5 L1660.7,173.7 L1678.8,183.7 L1696.0,194.8 L1712.5,206.8 L1728.2,219.6 L1743.1,233.3 L1757.1,247.7 L1770.3,262.9 L1782.6,278.8 L1794.1,295.2 L1804.7,312.3 L1814.4,329.9 L1823.2,347.9 L1831.2,366.5 L1838.3,385.4 L1844.6,404.7 L1849.9,424.3 L1854.4,444.2 L1858.0,464.3 L1860.8,484.7 L1862.6,505.2 L1863.7,525.8 L1863.8,546.6 L1863.2,567.4 L1861.6,588.3 L1859.3,609.1 L1856.1,629.9 L1852.0,650.7 L1847.2,671.3 L1841.5,691.8 L1835.0,712.2 L1837.3,707.6 L1829.4,703.1 L1821.0,698.8 L1812.1,694.6 L1802.8,690.6 L1793.1,686.7 L1783.0,682.9 L1772.7,679.3 L1762.1,675.7 L1751.3,672.2 L1740.2,668.9 L1728.9,665.6 L1717.4,662.4 L1705.8,659.3 L1693.9,656.3 L1682.0,653.3 L1669.8,650.4 L1657.6,647.5 L1645.1,644.8 L1632.6,642.1 L1619.9,639.4 L1607.1,636.8 L1594.2,634.3 L1581.1,631.8 L1567.9,629.4 L1554.5,627.0 L1541.1,624.7 L1527.5,622.5 L1513.7,620.3 L1499.8,618.1 L1485.8,616.0 L1471.6,614.0 L1457.2,612.0 L1442.6,610.1 L1427.9,608.3 L1412.9,606.5 L1397.7,604.8 L1382.2,603.2 L1366.5,601.6 L1350.6,600.2 L1334.2,598.8 L1334.4,599.3 L1335.0,582.8 L1335.4,566.4 L1335.6,550.0 L1335.5,533.6 L1335.3,517.4 L1334.9,501.2 L1334.3,485.2 L1333.4,469.3 L1332.3,453.5 L1331.0,437.8 L1329.5,422.3 L1327.8,407.0 L1325.7,391.9 L1323.5,377.0 L1321.0,362.3 L1318.3,347.8 L1315.3,333.7 L1312.0,319.8 L1308.5,306.2 L1304.7,293.0 L1300.6,280.1 L1296.2,267.6 L1291.6,255.5 L1286.7,243.9 L1281.5,232.8 L1276.0,222.2 L1270.2,212.1 L1264.2,202.7 L1257.8,193.8 L1251.2,185.7Z" fill="none" stroke="#ff8a16" stroke-width="2"/>
<path d="M1004.7,729 L1251.2,185.7 M1004.7,729 L1660.7,173.7 M1004.7,729 L1334.4,599.3 M1004.7,729 L1835.0,712.2" stroke="#ff8a16" stroke-width="1.8" fill="none"/>
<path d="M1635,472 V506 M1620,486 H1652" stroke="#ff8a16" stroke-width="2"/>
<text x="0" y="0" font-family="Liberation Mono" font-size="20" fill="#8e8e8e" transform="matrix(1.57,0.3,-0.38,2.08,1550,735)">Front</text><text x="0" y="0" font-family="Liberation Mono" font-size="20" fill="#8e8e8e" transform="matrix(1.19,0.53,-0.66,1.75,1057.4,538.6)">Left</text><text x="0" y="0" font-family="Liberation Mono" font-size="20" fill="#8e8e8e" transform="matrix(-1.83,-0.23,-1.0,2.88,1080,412.5)">Back</text><text x="0" y="0" font-family="Liberation Mono" font-size="20" fill="#8e8e8e" transform="matrix(-0.71,-0.65,-1.0,2.08,1869,731)">Right</text>
<text x="0" y="0" font-family="Liberation Sans" font-size="10.5" fill="#fff" transform="translate(1301,250) rotate(-21)">Image:</text><rect x="0" y="-10" width="10" height="10" fill="#fff" transform="translate(1345,234) rotate(-19)"/><text x="0" y="0" font-family="Liberation Sans" font-size="17" letter-spacing="6.8" fill="#fff" transform="translate(1364,232) rotate(-15)">UNIVIEW</text>
</g></svg>
<div class="a" style="left:961px;top:889px;width:959px;height:36px;background:#262626;"></div>
<div class="a" style="left:968px;top:896px;width:22px;height:21px;background:#fff;"></div>
<div class="a" style="left:1007px;top:896px;width:7px;height:21px;background:#fff;"></div>
<div class="a" style="left:1020px;top:896px;width:7px;height:21px;background:#fff;"></div>
<div class="a" style="left:1038px;top:903px;width:841px;height:6px;background:#fff;"></div>
<div class="a" style="left:1810px;top:892px;width:14px;height:28px;background:#fff;border:1px solid #111;box-sizing:border-box;border-radius:2px;"></div>
<div class="a" style="left:1885px;top:891px;width:32px;height:31px;background:#555;"></div>
<svg style="left:1891px;top:897px" width="22" height="20"><path d="M4 5.5 H17 Q19 5.5 19 8 V12 Q19 14.5 17 14.5 H5" stroke="#f49a28" stroke-width="3" fill="none"/><path d="M0.5 5.5 L6 1 L6 10 Z" fill="#f49a28"/></svg>
</body></html>
